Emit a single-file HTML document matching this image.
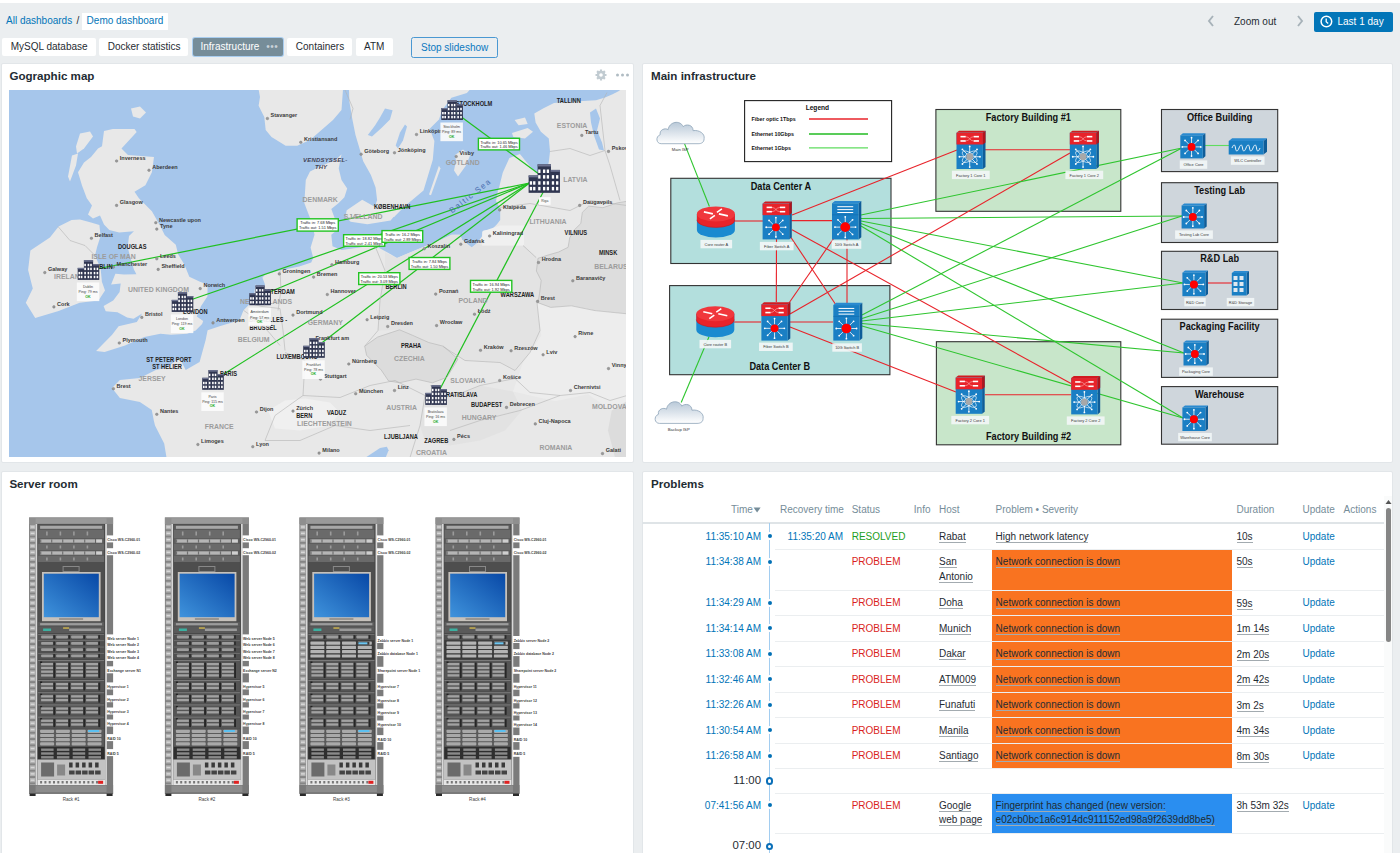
<!DOCTYPE html>
<html><head><meta charset="utf-8">
<style>
*{box-sizing:border-box;margin:0;padding:0}
html,body{width:1400px;height:853px;overflow:hidden}
body{background:#ebeef0;font-family:"Liberation Sans",sans-serif;font-size:10px;color:#1f2c33;position:relative}
.a{position:absolute;white-space:nowrap}
.lnk{color:#0275b8}
.tab{position:absolute;top:38px;height:18px;background:#fff;line-height:18px;border-radius:2px;font-size:10px;color:#1f2c33}
.w{position:absolute;background:#fff}
.wt{position:absolute;font-weight:bold;font-size:11.6px;color:#1f2c33;white-space:nowrap}
.th{position:absolute;top:503px;color:#768d99;font-size:10px;white-space:nowrap;line-height:13px}
.tm{position:absolute;color:#0275b8;white-space:nowrap;line-height:13px;text-align:right}
.st{position:absolute;left:851.7px;color:#e33734;white-space:nowrap;line-height:13px}
.ho{position:absolute;left:939px;white-space:nowrap;line-height:14.5px;color:#1f2c33}
.u{border-bottom:1px solid #a3abb0}
.sev{position:absolute;left:992px;width:240px;background:#f97320}
.pt{position:absolute;left:995.6px;white-space:nowrap;line-height:14.5px;color:#1f2c33}
.du{position:absolute;left:1236.5px;white-space:nowrap;line-height:13px}
.up{position:absolute;left:1302.5px;white-space:nowrap;line-height:13px;color:#0275b8}
.sep{position:absolute;left:775px;width:609px;height:1px;background:#ebeef0}
.dot{position:absolute;left:765.6px;width:8px;height:8px;border-radius:50%;background:#0270b5;border:2.1px solid #fff}
.ring{position:absolute;left:765.8px;width:7.4px;height:7.4px;border-radius:50%;border:2px solid #0a6fb8;background:#fff}
</style></head><body>
<div class="a" style="left:0;top:0;width:1400px;height:3px;background:#fff"></div>
<!-- breadcrumb -->
<div class="a lnk" style="left:6px;top:15px;line-height:12px">All dashboards</div>
<div class="a" style="left:76.5px;top:15px;line-height:12px;color:#1f2c33">/</div>
<div class="a" style="left:82px;top:13px;width:86px;height:17px;background:#fff"></div>
<div class="a lnk" style="left:86.6px;top:15px;line-height:12px">Demo dashboard</div>
<!-- tabs -->
<div class="tab" style="left:2px;width:94px;padding-left:8.7px">MySQL database</div>
<div class="tab" style="left:99px;width:89px;padding-left:8.7px">Docker statistics</div>
<div class="tab" style="left:192.5px;width:90.5px;padding-left:8px;background:#768d99;color:#fff;box-shadow:0 0 0 1px #a9cdef">Infrastructure <span style="letter-spacing:0.5px;margin-left:4px;color:#c8d2d8">&#8226;&#8226;&#8226;</span></div>
<div class="tab" style="left:287px;width:65px;padding-left:8.8px">Containers</div>
<div class="tab" style="left:356px;width:37px;padding-left:8px">ATM</div>
<div class="a" style="left:411px;top:37.2px;width:86.6px;height:20.5px;border:1px solid #4a98d2;border-radius:2.5px;color:#0a78c0;line-height:20px;padding-left:9px">Stop slideshow</div>
<!-- header right -->
<div class="a" style="left:1205px;top:12px;width:12px;height:18px;">
 <svg width="12" height="18"><path d="M8 4 L4 9 L8 14" stroke="#a7b2b9" stroke-width="1.9" fill="none"/></svg></div>
<div class="a" style="left:1234px;top:15.8px;line-height:12px;color:#1f2c33">Zoom out</div>
<div class="a" style="left:1294px;top:12px;width:12px;height:18px;">
 <svg width="12" height="18"><path d="M4 4 L8 9 L4 14" stroke="#a7b2b9" stroke-width="1.9" fill="none"/></svg></div>
<div class="a" style="left:1314px;top:12px;width:79px;height:20px;background:#0275b8;border-radius:2px;color:#fff;line-height:20px;padding-left:23.5px">Last 1 day</div>
<svg class="a" style="left:1319px;top:15px" width="14" height="14"><circle cx="7.4" cy="6.5" r="5.3" stroke="#fff" stroke-width="1.5" fill="none"/><path d="M7.2 3.6 V6.8 L9.2 8.6" stroke="#fff" stroke-width="1.3" fill="none"/></svg>

<!-- widgets -->
<div class="w" style="left:0.8px;top:62.6px;width:633.4px;height:400.4px;border:1px solid #e2e6e9;border-radius:2px"></div>
<div class="w" style="left:642.2px;top:62.6px;width:751px;height:400.4px;border:1px solid #e2e6e9;border-radius:2px"></div>
<div class="w" style="left:0.8px;top:470.8px;width:633.4px;height:400px;border:1px solid #e2e6e9;border-radius:2px"></div>
<div class="w" style="left:642.2px;top:470.8px;width:751px;height:400px;border:1px solid #e2e6e9;border-radius:2px"></div>
<div class="wt" style="left:9.4px;top:69px">Gographic map</div>
<div class="wt" style="left:651px;top:69px">Main infrastructure</div>
<div class="wt" style="left:9.4px;top:477px">Server room</div>
<div class="wt" style="left:651px;top:477px">Problems</div>
<!-- gear + dots -->
<svg class="a" style="left:594px;top:68px" width="36" height="14">
 <g fill="#c1cbd1"><circle cx="7" cy="7" r="4.2"/><g stroke="#c1cbd1" stroke-width="2.2"><path d="M7 1.5V12.5M1.5 7H12.5M3.1 3.1L10.9 10.9M10.9 3.1L3.1 10.9"/></g></g>
 <circle cx="7" cy="7" r="1.8" fill="#fff"/>
 <circle cx="23.5" cy="7" r="1.5" fill="#b0bcc3"/><circle cx="28.5" cy="7" r="1.5" fill="#b0bcc3"/><circle cx="33.5" cy="7" r="1.5" fill="#b0bcc3"/>
</svg>

<!-- MAP -->
<div id="map" class="a" style="left:9px;top:89.5px;width:617px;height:366.5px;background:#a6c6eb;overflow:hidden"></div>

<!-- DIAGRAM -->
<div id="diag" class="a" style="left:642px;top:85px;width:751px;height:375px"></div>

<!-- RACKS -->
<div id="racks" class="a" style="left:1px;top:500px;width:634px;height:353px"></div>

<!-- PROBLEMS TABLE -->
<div class="th" style="left:731px">Time</div>
<svg class="a" style="left:753px;top:507px" width="9" height="7"><path d="M0.6 0.6 H7.6 L4.1 5.6Z" fill="#768d99"/></svg>
<div class="th" style="left:780px">Recovery time</div>
<div class="th" style="left:851.7px">Status</div>
<div class="th" style="left:913.8px">Info</div>
<div class="th" style="left:939px">Host</div>
<div class="th" style="left:995.6px">Problem &#8226; Severity</div>
<div class="th" style="left:1236.5px">Duration</div>
<div class="th" style="left:1302.5px">Update</div>
<div class="th" style="left:1343.6px">Actions</div>
<div class="a" style="left:642px;top:522px;width:742px;height:1.5px;background:#dfe4e7"></div>
<div class="a" style="left:768.9px;top:523px;width:1.5px;height:330px;background:#a2cdf0"></div>
<div class="tm" style="left:660px;width:101px;top:529.8px">11:35:10 AM</div>
<div class="dot" style="top:532.2px"></div>
<div class="tm" style="left:743px;width:100px;top:529.8px">11:35:20 AM</div>
<div class="st" style="top:529.8px;color:#1c9e22">RESOLVED</div>
<div class="ho" style="top:529.8px"><span class="u">Rabat</span></div>
<div class="pt" style="top:529.8px"><span class="u">High network latency</span></div>
<div class="du" style="top:530.0px"><span class="u">10s</span></div>
<div class="up" style="top:529.8px">Update</div>
<div class="sep" style="top:549.0px"></div>
<div class="tm" style="left:660px;width:101px;top:555.0px">11:34:38 AM</div>
<div class="dot" style="top:557.5px"></div>
<div class="st" style="top:555.0px;color:#d91e22">PROBLEM</div>
<div class="ho" style="top:555.0px"><span class="u">San</span></div>
<div class="ho" style="top:569.5px"><span class="u">Antonio</span></div>
<div class="sev" style="top:550.0px;height:40.0px;background:#f97320"></div>
<div class="pt" style="top:555.0px"><span class="u">Network connection is down</span></div>
<div class="du" style="top:555.2px"><span class="u">50s</span></div>
<div class="up" style="top:555.0px">Update</div>
<div class="sep" style="top:589.5px"></div>
<div class="tm" style="left:660px;width:101px;top:596.2px">11:34:29 AM</div>
<div class="dot" style="top:598.8px"></div>
<div class="st" style="top:596.2px;color:#d91e22">PROBLEM</div>
<div class="ho" style="top:596.2px"><span class="u">Doha</span></div>
<div class="sev" style="top:590.5px;height:25.0px;background:#f97320"></div>
<div class="pt" style="top:596.2px"><span class="u">Network connection is down</span></div>
<div class="du" style="top:596.5px"><span class="u">59s</span></div>
<div class="up" style="top:596.2px">Update</div>
<div class="sep" style="top:615.0px"></div>
<div class="tm" style="left:660px;width:101px;top:621.8px">11:34:14 AM</div>
<div class="dot" style="top:624.2px"></div>
<div class="st" style="top:621.8px;color:#d91e22">PROBLEM</div>
<div class="ho" style="top:621.8px"><span class="u">Munich</span></div>
<div class="sev" style="top:616.0px;height:25.0px;background:#f97320"></div>
<div class="pt" style="top:621.8px"><span class="u">Network connection is down</span></div>
<div class="du" style="top:622.0px"><span class="u">1m 14s</span></div>
<div class="up" style="top:621.8px">Update</div>
<div class="sep" style="top:640.5px"></div>
<div class="tm" style="left:660px;width:101px;top:647.2px">11:33:08 AM</div>
<div class="dot" style="top:649.8px"></div>
<div class="st" style="top:647.2px;color:#d91e22">PROBLEM</div>
<div class="ho" style="top:647.2px"><span class="u">Dakar</span></div>
<div class="sev" style="top:641.5px;height:25.0px;background:#f97320"></div>
<div class="pt" style="top:647.2px"><span class="u">Network connection is down</span></div>
<div class="du" style="top:647.5px"><span class="u">2m 20s</span></div>
<div class="up" style="top:647.2px">Update</div>
<div class="sep" style="top:666.0px"></div>
<div class="tm" style="left:660px;width:101px;top:672.8px">11:32:46 AM</div>
<div class="dot" style="top:675.2px"></div>
<div class="st" style="top:672.8px;color:#d91e22">PROBLEM</div>
<div class="ho" style="top:672.8px"><span class="u">ATM009</span></div>
<div class="sev" style="top:667.0px;height:25.0px;background:#f97320"></div>
<div class="pt" style="top:672.8px"><span class="u">Network connection is down</span></div>
<div class="du" style="top:673.0px"><span class="u">2m 42s</span></div>
<div class="up" style="top:672.8px">Update</div>
<div class="sep" style="top:691.5px"></div>
<div class="tm" style="left:660px;width:101px;top:698.2px">11:32:26 AM</div>
<div class="dot" style="top:700.8px"></div>
<div class="st" style="top:698.2px;color:#d91e22">PROBLEM</div>
<div class="ho" style="top:698.2px"><span class="u">Funafuti</span></div>
<div class="sev" style="top:692.5px;height:25.0px;background:#f97320"></div>
<div class="pt" style="top:698.2px"><span class="u">Network connection is down</span></div>
<div class="du" style="top:698.5px"><span class="u">3m 2s</span></div>
<div class="up" style="top:698.2px">Update</div>
<div class="sep" style="top:717.0px"></div>
<div class="tm" style="left:660px;width:101px;top:723.8px">11:30:54 AM</div>
<div class="dot" style="top:726.2px"></div>
<div class="st" style="top:723.8px;color:#d91e22">PROBLEM</div>
<div class="ho" style="top:723.8px"><span class="u">Manila</span></div>
<div class="sev" style="top:718.0px;height:25.0px;background:#f97320"></div>
<div class="pt" style="top:723.8px"><span class="u">Network connection is down</span></div>
<div class="du" style="top:724.0px"><span class="u">4m 34s</span></div>
<div class="up" style="top:723.8px">Update</div>
<div class="sep" style="top:742.5px"></div>
<div class="tm" style="left:660px;width:101px;top:749.2px">11:26:58 AM</div>
<div class="dot" style="top:751.8px"></div>
<div class="st" style="top:749.2px;color:#d91e22">PROBLEM</div>
<div class="ho" style="top:749.2px"><span class="u">Santiago</span></div>
<div class="sev" style="top:743.5px;height:25.0px;background:#f97320"></div>
<div class="pt" style="top:749.2px"><span class="u">Network connection is down</span></div>
<div class="du" style="top:749.5px"><span class="u">8m 30s</span></div>
<div class="up" style="top:749.2px">Update</div>
<div class="sep" style="top:768.0px"></div>
<div class="tm" style="left:660px;width:101px;top:774.0px;color:#1f2c33;font-size:11.4px">11:00</div>
<div class="ring" style="top:777.2px"></div>
<div class="sep" style="top:792.7px"></div>
<div class="tm" style="left:660px;width:101px;top:798.7px">07:41:56 AM</div>
<div class="dot" style="top:801.2px"></div>
<div class="st" style="top:798.7px;color:#d91e22">PROBLEM</div>
<div class="ho" style="top:798.7px"><span class="u">Google</span></div>
<div class="ho" style="top:813.2px"><span class="u">web page</span></div>
<div class="sev" style="top:793.7px;height:39.6px;background:#2a8ef0"></div>
<div class="pt" style="top:798.7px"><span class="u">Fingerprint has changed (new version:</span></div>
<div class="pt" style="top:813.2px"><span class="u">e02cb0bc1a6c914dc911152ed98a9f2639dd8be5)</span></div>
<div class="du" style="top:798.9px"><span class="u">3h 53m 32s</span></div>
<div class="up" style="top:798.7px">Update</div>
<div class="sep" style="top:832.8px"></div>
<div class="tm" style="left:660px;width:101px;top:839.4px;color:#1f2c33;font-size:11.4px">07:00</div>
<div class="ring" style="top:842.6px"></div>
<div class="a" style="left:1384px;top:496px;width:8px;height:357px;background:#fafbfb"></div>
<svg class="a" style="left:1384px;top:498px" width="9" height="8"><path d="M1.5 6 L4.5 2 L7.5 6Z" fill="#555"/></svg>
<div class="a" style="left:1385.8px;top:508px;width:5.4px;height:133.6px;background:#858585;border-radius:3px"></div><div class="a" style="left:9px;top:89.5px;width:617px;height:367px;overflow:hidden"><svg width="617" height="367" style="position:absolute;left:0;top:0">
<rect width="617" height="367" fill="#a6c6eb"/>
<polygon points="62.6,130.0 71.0,129.5 82.0,132.5 90.4,135.1 91.6,146.1 88.0,157.2 86.0,165.5 91.6,178.2 92.9,191.7 96.0,200.5 89.5,210.5 70.7,212.7 49.6,220.9 26.2,228.0 16.8,212.7 23.8,198.5 19.1,179.9 21.4,160.4 40.9,147.4 49.6,136.5" fill="#e8e8e8"/>
<polygon points="103.8,38.9 125.5,38.9 127.7,42.1 112.5,58.4 119.0,64.9 145.0,67.1 142.9,82.3 136.4,95.3 125.5,101.8 129.9,108.3 142.9,121.3 151.0,135.5 155.7,144.9 166.8,154.8 169.2,164.6 175.4,174.5 180.3,186.8 191.0,191.7 198.5,194.4 198.5,206.2 192.1,215.9 187.8,226.6 194.2,230.9 193.1,234.1 186.7,240.5 178.1,243.7 162.1,244.8 151.4,243.7 135.3,246.9 116.0,255.5 95.6,261.9 87.1,260.9 103.1,244.8 109.6,236.2 127.8,231.9 133.1,223.4 124.6,228.7 118.1,227.6 108.5,222.3 96.7,221.2 94.6,215.9 104.2,210.5 110.6,201.9 111.7,193.4 102.1,194.4 106.4,183.7 115.0,184.5 127.4,184.3 124.9,179.4 121.2,167.1 118.7,157.2 120.0,146.1 124.9,141.2 110.1,142.5 100.3,140.0 95.0,134.5 91.0,125.5 84.0,128.5 79.0,124.5 83.0,115.5 77.8,108.3 73.0,95.5 69.0,82.3 75.0,72.5 82.0,67.1 89.0,58.5 93.0,56.3 95.0,41.1" fill="#e8e8e8"/>
<polygon points="71.0,43.5 81.0,41.5 84.0,46.5 75.0,58.5 68.0,63.5 67.0,56.5" fill="#e8e8e8"/>
<polygon points="63.0,65.5 69.0,63.5 67.0,75.5 61.0,91.5 59.0,86.5" fill="#e8e8e8"/>
<polygon points="122.0,18.5 131.0,16.5 137.0,22.5 131.0,28.5 124.0,26.5" fill="#e8e8e8"/>
<polygon points="157.5,367.5 155.2,353.5 146.0,335.5 144.8,330.5 142.8,319.9 130.9,312.0 110.9,308.0 103.0,298.0 110.9,290.0 130.9,288.0 146.8,280.1 156.8,278.1 170.7,268.1 176.7,280.1 190.6,272.1 196.6,250.2 198.6,240.2 210.6,236.2 230.5,230.2 234.5,220.3 244.4,210.3 246.4,194.4 256.4,184.4 270.4,180.4 290.3,176.4 302.2,172.5 304.2,167.9 301.6,157.5 305.5,144.7 303.0,133.0 299.0,122.7 295.3,112.9 296.8,90.0 301.0,81.5 312.5,75.7 326.8,70.0 332.5,64.3 329.7,78.6 332.5,90.0 338.2,98.6 335.4,107.2 329.7,112.9 322.3,118.9 326.1,129.2 328.7,139.5 322.3,144.7 323.5,156.3 332.6,160.1 350.6,157.5 364.8,155.0 379.0,162.7 388.0,167.9 410.0,158.8 429.3,151.1 442.6,144.8 451.1,144.8 453.2,150.1 462.7,157.5 468.0,153.2 473.2,145.9 474.3,140.6 482.7,139.5 488.0,134.3 491.2,130.0 491.2,118.4 487.0,111.0 489.0,100.5 489.9,98.2 493.8,82.5 500.4,68.1 510.9,64.1 517.4,72.0 526.6,82.5 537.0,82.5 539.8,72.0 541.0,61.5 539.8,48.4 531.9,41.8 526.6,32.6 525.3,23.4 534.5,18.2 545.0,12.9 566.0,11.6 587.0,10.3 596.0,7.5 603.0,4.5 609.0,1.5 612.0,-0.5 618.0,-0.5 618.0,367.5" fill="#e8e8e8"/>
<polygon points="249.6,-0.5 251.0,7.1 249.6,15.7 255.3,27.1 256.7,40.0 262.5,47.1 276.7,55.7 288.2,55.7 301.0,50.0 312.5,40.0 324.0,30.0 332.5,20.0 334.0,-0.5 340.0,-0.5 340.3,10.9 343.4,29.4 346.5,44.9 351.1,60.4 354.2,71.2 361.9,85.1 366.6,97.5 368.1,109.9 365.0,119.2 371.2,125.4 385.1,126.9 396.0,116.1 405.3,108.3 414.5,100.6 419.2,85.1 423.8,69.7 425.4,51.1 420.7,38.7 430.0,29.5 433.1,20.2 442.4,7.8 457.9,3.1 461.0,-0.5" fill="#e8e8e8"/>
<polygon points="446.0,65.0 454.0,59.5 461.0,65.5 457.0,75.5 449.0,86.5 445.0,80.5 447.0,70.5" fill="#e8e8e8"/>
<polygon points="429.9,75.8 431.5,78.5 422.0,105.2 420.0,104.5" fill="#e8e8e8"/>
<polygon points="337.7,120.2 353.2,109.8 364.8,116.3 373.8,118.9 388.0,122.7 381.6,130.5 358.4,134.3 341.6,131.8 336.4,126.6" fill="#e8e8e8"/>
<polygon points="309.0,133.5 319.0,131.5 322.0,140.5 313.0,144.5 307.0,139.5" fill="#e8e8e8"/>
<polygon points="503.0,43.1 518.7,37.9 524.0,41.8 516.0,48.4 504.3,47.1" fill="#e8e8e8"/>
<polygon points="505.6,30.0 516.0,27.4 518.7,33.9 509.6,35.3" fill="#e8e8e8"/>
<polygon points="376.0,162.5 388.0,167.9 410.0,158.8 429.3,151.1 442.6,144.8 451.1,144.8 453.2,150.1 462.7,157.5 468.0,153.2 473.2,155.4 515.0,155.5 529.0,168.3 527.4,181.0 532.2,190.5 530.6,203.2 529.0,212.7 531.0,240.5 521.0,262.5 506.0,280.5 491.0,272.5 456.0,270.5 434.0,256.5 419.7,252.5 403.3,245.2 390.5,239.8 369.0,240.5 371.0,210.5 376.0,180.5" fill="#e3e3e3"/>
<polygon points="618.0,111.3 608.2,112.9 593.9,117.7 579.7,116.1 573.3,122.4 571.8,133.5 565.4,139.8 560.7,147.8 559.1,157.3 549.6,162.0 538.5,165.2 529.0,168.3 527.4,181.0 532.2,190.5 530.6,203.2 529.0,212.7 541.7,217.4 562.3,215.8 586.0,220.6 601.8,222.2 618.0,223.8" fill="#dddddd"/>
<polygon points="355.7,256.2 368.5,247.1 390.5,239.8 403.3,245.2 419.7,252.5 434.3,256.2 449.0,269.0 438.0,287.3 423.4,292.8 407.0,289.1 390.5,292.8 379.5,290.9 372.2,280.0 357.6,265.3" fill="#dcdcdc"/>
<polygon points="527.6,212.7 541.7,217.4 562.3,215.8 586.0,220.6 601.8,222.2 618.0,223.8 618.0,311.2 602.7,320.5 579.0,304.2 546.4,311.2 504.0,301.5 513.6,273.5 532.3,245.5" fill="#ededed"/>
<polygon points="602.7,320.5 618.0,311.2 618.0,367.5 606.0,367.5 599.0,340.5" fill="#dcdcdc"/>
<polygon points="416.0,305.5 446.0,305.5 471.0,295.5 504.0,301.5 513.0,320.5 496.0,340.5 471.0,350.5 441.0,355.5 416.0,350.5 411.0,335.5" fill="#e2e2e2"/>
<polygon points="473.2,141.5 491.0,135.5 515.0,135.5 515.0,155.5 473.2,155.4" fill="#f0f0f0"/>
<polygon points="259.0,320.5 276.0,310.5 296.0,308.5 321.0,312.5 331.0,322.5 321.0,335.5 291.0,340.5 266.0,338.5" fill="#f0f0f0"/>
<polygon points="581.0,22.5 587.0,18.5 591.0,28.5 588.0,40.5 593.0,52.5 595.0,60.5 590.0,59.5 585.0,45.5 582.0,32.5" fill="#a6c6eb"/>
<polygon points="358.8,44.9 366.0,35.5 371.0,27.5 376.0,18.5 383.6,20.2 381.0,29.5 373.0,37.5 363.0,46.5" fill="#a6c6eb"/>
<polygon points="386.7,55.5 391.0,42.5 396.0,34.5 398.0,36.5 394.0,50.5 389.0,58.5" fill="#a6c6eb"/>
<polygon points="356.7,367.5 371.0,357.9 377.9,356.8 379.6,360.2 376.7,367.5" fill="#a6c6eb"/>
<polygon points="246.0,189.5 253.0,186.5 256.0,194.5 252.0,206.5 247.0,202.5" fill="#a6c6eb"/>
<line x1="520.5" y1="93.0" x2="80" y2="180.5" stroke="#1fc01f" stroke-width="1.2"/>
<line x1="520.5" y1="93.0" x2="174" y2="212.5" stroke="#1fc01f" stroke-width="1.2"/>
<line x1="520.5" y1="93.0" x2="251.60000000000002" y2="205.8" stroke="#1fc01f" stroke-width="1.2"/>
<line x1="520.5" y1="93.0" x2="305.5" y2="258.4" stroke="#1fc01f" stroke-width="1.2"/>
<line x1="520.5" y1="93.0" x2="204.5" y2="290.4" stroke="#1fc01f" stroke-width="1.2"/>
<line x1="535" y1="100.5" x2="427.6" y2="305.5" stroke="#1fc01f" stroke-width="1.2"/>
<line x1="536" y1="88.5" x2="443.6" y2="20.599999999999994" stroke="#1fc01f" stroke-width="1.2"/>
<g font-family="Liberation Sans, sans-serif">
<polyline points="336.0,0.0 344.0,18.5 341.0,29.5" fill="none" stroke="#b4b4b4" stroke-width="0.6"/>
<polyline points="234.5,220.3 249.0,230.5 261.0,243.5 271.0,255.5" fill="none" stroke="#b4b4b4" stroke-width="0.6"/>
<polyline points="241.0,213.5 253.0,216.5 271.0,218.5" fill="none" stroke="#b4b4b4" stroke-width="0.6"/>
<polyline points="271.0,180.5 272.0,200.5 269.0,220.5" fill="none" stroke="#b4b4b4" stroke-width="0.6"/>
<polyline points="271.0,218.5 274.0,240.5 276.0,260.5" fill="none" stroke="#b4b4b4" stroke-width="0.6"/>
<polyline points="276.0,262.5 296.0,270.5 294.0,305.5" fill="none" stroke="#b4b4b4" stroke-width="0.6"/>
<polyline points="294.0,305.5 266.0,325.5 256.0,350.5" fill="none" stroke="#b4b4b4" stroke-width="0.6"/>
<polyline points="294.0,305.5 331.0,307.5" fill="none" stroke="#b4b4b4" stroke-width="0.6"/>
<polyline points="256.0,350.5 291.0,350.5 326.0,335.5" fill="none" stroke="#b4b4b4" stroke-width="0.6"/>
<polyline points="331.0,307.5 361.0,295.5 386.0,290.5 416.0,305.5" fill="none" stroke="#b4b4b4" stroke-width="0.6"/>
<polyline points="326.0,335.5 361.0,340.5 401.0,335.5" fill="none" stroke="#b4b4b4" stroke-width="0.6"/>
<polyline points="416.0,305.5 411.0,335.5" fill="none" stroke="#b4b4b4" stroke-width="0.6"/>
<polyline points="363.0,148.5 376.0,180.5 371.0,210.5 369.0,240.5 355.7,256.2" fill="none" stroke="#b4b4b4" stroke-width="0.6"/>
<polyline points="434.0,256.5 456.0,270.5 491.0,272.5 506.0,280.5" fill="none" stroke="#b4b4b4" stroke-width="0.6"/>
<polyline points="421.0,295.5 446.0,305.5 471.0,295.5 506.0,288.5" fill="none" stroke="#b4b4b4" stroke-width="0.6"/>
<polyline points="528.0,212.5 531.0,240.5 521.0,262.5 506.0,280.5" fill="none" stroke="#b4b4b4" stroke-width="0.6"/>
<polyline points="506.0,288.5 521.0,302.5 551.0,305.5 581.0,302.5 601.0,310.5 618.0,305.5" fill="none" stroke="#b4b4b4" stroke-width="0.6"/>
<polyline points="491.0,117.5 521.0,113.5 561.0,120.5 581.0,110.5 618.0,115.5" fill="none" stroke="#b4b4b4" stroke-width="0.6"/>
<polyline points="514.0,155.5 527.0,167.5" fill="none" stroke="#b4b4b4" stroke-width="0.6"/>
<polyline points="541.0,61.5 561.0,58.5 581.0,65.5 596.0,60.5" fill="none" stroke="#b4b4b4" stroke-width="0.6"/>
<polyline points="598.0,2.5 591.0,15.5 596.0,60.5 601.0,75.5 611.0,110.5" fill="none" stroke="#b4b4b4" stroke-width="0.6"/>
<polyline points="49.0,136.5 61.0,150.5 76.0,155.5 86.0,165.5" fill="none" stroke="#b4b4b4" stroke-width="0.6"/>
<polyline points="411.0,335.5 401.0,367.5" fill="none" stroke="#b4b4b4" stroke-width="0.6"/>
<polyline points="441.0,340.5 471.0,330.5 511.0,320.5 551.0,305.5" fill="none" stroke="#b4b4b4" stroke-width="0.6"/>
<polygon points="355.7,256.2 368.5,247.1 390.5,239.8 403.3,245.2 419.7,252.5 434.3,256.2 449.0,269.0 438.0,287.3 423.4,292.8 407.0,289.1 390.5,292.8 379.5,290.9 372.2,280.0 357.6,265.3" fill="none" stroke="#b4b4b4" stroke-width="0.6"/>
<polygon points="618.0,111.3 608.2,112.9 593.9,117.7 579.7,116.1 573.3,122.4 571.8,133.5 565.4,139.8 560.7,147.8 559.1,157.3 549.6,162.0 538.5,165.2 529.0,168.3 527.4,181.0 532.2,190.5 530.6,203.2 529.0,212.7 541.7,217.4 562.3,215.8 586.0,220.6 601.8,222.2 618.0,223.8" fill="none" stroke="#b4b4b4" stroke-width="0.6"/>
<circle cx="258.4" cy="28.5" r="1.3" fill="#999" stroke="#777" stroke-width="0.4"/>
<text transform="translate(261.6,27.3) scale(0.92,1)" font-size="6.0" font-weight="bold" fill="#3a3a3a">Stavanger</text>
<circle cx="291.8" cy="52.3" r="1.3" fill="#999" stroke="#777" stroke-width="0.4"/>
<text transform="translate(295.0,51.1) scale(0.92,1)" font-size="6.0" font-weight="bold" fill="#3a3a3a">Kristiansand</text>
<circle cx="352.1" cy="64.2" r="1.3" fill="#999" stroke="#777" stroke-width="0.4"/>
<text transform="translate(355.3,63.0) scale(0.92,1)" font-size="6.0" font-weight="bold" fill="#3a3a3a">Göteborg</text>
<circle cx="385.5" cy="62.8" r="1.3" fill="#999" stroke="#777" stroke-width="0.4"/>
<text transform="translate(388.7,61.6) scale(0.92,1)" font-size="6.0" font-weight="bold" fill="#3a3a3a">Jönköping</text>
<circle cx="407.5" cy="44.5" r="1.3" fill="#999" stroke="#777" stroke-width="0.4"/>
<text transform="translate(410.7,43.3) scale(0.92,1)" font-size="6.0" font-weight="bold" fill="#3a3a3a">Linköping</text>
<circle cx="572.8" cy="45.4" r="1.3" fill="#999" stroke="#777" stroke-width="0.4"/>
<text transform="translate(576.0,44.2) scale(0.92,1)" font-size="6.0" font-weight="bold" fill="#3a3a3a">Tartu</text>
<circle cx="599.5" cy="61.4" r="1.3" fill="#999" stroke="#777" stroke-width="0.4"/>
<text transform="translate(602.7,60.2) scale(0.92,1)" font-size="6.0" font-weight="bold" fill="#3a3a3a">Pskov</text>
<circle cx="447.2" cy="66.5" r="1.3" fill="#999" stroke="#777" stroke-width="0.4"/>
<text transform="translate(450.4,65.3) scale(0.92,1)" font-size="6.0" font-weight="bold" fill="#3a3a3a">Visby</text>
<circle cx="570.7" cy="115.4" r="1.3" fill="#999" stroke="#777" stroke-width="0.4"/>
<text transform="translate(573.9,114.2) scale(0.92,1)" font-size="6.0" font-weight="bold" fill="#3a3a3a">Daugavpils</text>
<circle cx="490.7" cy="119.9" r="1.3" fill="#999" stroke="#777" stroke-width="0.4"/>
<text transform="translate(493.9,118.7) scale(0.92,1)" font-size="6.0" font-weight="bold" fill="#3a3a3a">Klaipėda</text>
<circle cx="480.6" cy="146.0" r="1.3" fill="#999" stroke="#777" stroke-width="0.4"/>
<text transform="translate(483.8,144.8) scale(0.92,1)" font-size="6.0" font-weight="bold" fill="#3a3a3a">Kaliningrad</text>
<circle cx="451.8" cy="154.2" r="1.3" fill="#999" stroke="#777" stroke-width="0.4"/>
<text transform="translate(455.0,153.0) scale(0.92,1)" font-size="6.0" font-weight="bold" fill="#3a3a3a">Gdańsk</text>
<circle cx="415.2" cy="158.8" r="1.3" fill="#999" stroke="#777" stroke-width="0.4"/>
<text transform="translate(418.4,157.6) scale(0.92,1)" font-size="6.0" font-weight="bold" fill="#3a3a3a">Koszalin</text>
<circle cx="529.5" cy="172.5" r="1.3" fill="#999" stroke="#777" stroke-width="0.4"/>
<text transform="translate(532.7,171.3) scale(0.92,1)" font-size="6.0" font-weight="bold" fill="#3a3a3a">Hrodna</text>
<circle cx="563.8" cy="190.8" r="1.3" fill="#999" stroke="#777" stroke-width="0.4"/>
<text transform="translate(567.0,189.6) scale(0.92,1)" font-size="6.0" font-weight="bold" fill="#3a3a3a">Baranavičy</text>
<circle cx="528.6" cy="211.4" r="1.3" fill="#999" stroke="#777" stroke-width="0.4"/>
<text transform="translate(531.8,210.2) scale(0.92,1)" font-size="6.0" font-weight="bold" fill="#3a3a3a">Brest</text>
<circle cx="465.5" cy="224.2" r="1.3" fill="#999" stroke="#777" stroke-width="0.4"/>
<text transform="translate(468.7,223.0) scale(0.92,1)" font-size="6.0" font-weight="bold" fill="#3a3a3a">Łódź</text>
<circle cx="426.7" cy="204.1" r="1.3" fill="#999" stroke="#777" stroke-width="0.4"/>
<text transform="translate(429.9,202.9) scale(0.92,1)" font-size="6.0" font-weight="bold" fill="#3a3a3a">Poznań</text>
<circle cx="427.6" cy="235.6" r="1.3" fill="#999" stroke="#777" stroke-width="0.4"/>
<text transform="translate(430.8,234.4) scale(0.92,1)" font-size="6.0" font-weight="bold" fill="#3a3a3a">Wrocław</text>
<circle cx="471.5" cy="260.3" r="1.3" fill="#999" stroke="#777" stroke-width="0.4"/>
<text transform="translate(474.7,259.1) scale(0.92,1)" font-size="6.0" font-weight="bold" fill="#3a3a3a">Kraków</text>
<circle cx="502.1" cy="260.8" r="1.3" fill="#999" stroke="#777" stroke-width="0.4"/>
<text transform="translate(505.3,259.6) scale(0.92,1)" font-size="6.0" font-weight="bold" fill="#3a3a3a">Rzeszów</text>
<circle cx="534.1" cy="264.8" r="1.3" fill="#999" stroke="#777" stroke-width="0.4"/>
<text transform="translate(537.3,263.6) scale(0.92,1)" font-size="6.0" font-weight="bold" fill="#3a3a3a">Lviv</text>
<circle cx="566.1" cy="246.6" r="1.3" fill="#999" stroke="#777" stroke-width="0.4"/>
<text transform="translate(569.3,245.4) scale(0.92,1)" font-size="6.0" font-weight="bold" fill="#3a3a3a">Rivne</text>
<circle cx="599.5" cy="278.6" r="1.3" fill="#999" stroke="#777" stroke-width="0.4"/>
<text transform="translate(602.7,277.4) scale(0.92,1)" font-size="6.0" font-weight="bold" fill="#3a3a3a">Vinny</text>
<circle cx="561.5" cy="300.5" r="1.3" fill="#999" stroke="#777" stroke-width="0.4"/>
<text transform="translate(564.7,299.3) scale(0.92,1)" font-size="6.0" font-weight="bold" fill="#3a3a3a">Chernivtsi</text>
<circle cx="526.3" cy="333.9" r="1.3" fill="#999" stroke="#777" stroke-width="0.4"/>
<text transform="translate(529.5,332.7) scale(0.92,1)" font-size="6.0" font-weight="bold" fill="#3a3a3a">Cluj-Napoca</text>
<circle cx="593.5" cy="363.6" r="1.3" fill="#999" stroke="#777" stroke-width="0.4"/>
<text transform="translate(596.7,362.4) scale(0.92,1)" font-size="6.0" font-weight="bold" fill="#3a3a3a">Galati</text>
<circle cx="497.5" cy="317.4" r="1.3" fill="#999" stroke="#777" stroke-width="0.4"/>
<text transform="translate(500.7,316.2) scale(0.92,1)" font-size="6.0" font-weight="bold" fill="#3a3a3a">Debrecen</text>
<circle cx="444.9" cy="349.4" r="1.3" fill="#999" stroke="#777" stroke-width="0.4"/>
<text transform="translate(448.1,348.2) scale(0.92,1)" font-size="6.0" font-weight="bold" fill="#3a3a3a">Pécs</text>
<circle cx="490.7" cy="290.5" r="1.3" fill="#999" stroke="#777" stroke-width="0.4"/>
<text transform="translate(493.9,289.3) scale(0.92,1)" font-size="6.0" font-weight="bold" fill="#3a3a3a">Košice</text>
<circle cx="385.5" cy="300.5" r="1.3" fill="#999" stroke="#777" stroke-width="0.4"/>
<text transform="translate(388.7,299.3) scale(0.92,1)" font-size="6.0" font-weight="bold" fill="#3a3a3a">Linz</text>
<circle cx="346.7" cy="303.7" r="1.3" fill="#999" stroke="#777" stroke-width="0.4"/>
<text transform="translate(349.9,302.5) scale(0.92,1)" font-size="6.0" font-weight="bold" fill="#3a3a3a">München</text>
<circle cx="339.8" cy="274.0" r="1.3" fill="#999" stroke="#777" stroke-width="0.4"/>
<text transform="translate(343.0,272.8) scale(0.92,1)" font-size="6.0" font-weight="bold" fill="#3a3a3a">Nürnberg</text>
<circle cx="378.7" cy="236.5" r="1.3" fill="#999" stroke="#777" stroke-width="0.4"/>
<text transform="translate(381.9,235.3) scale(0.92,1)" font-size="6.0" font-weight="bold" fill="#3a3a3a">Dresden</text>
<circle cx="358.1" cy="229.7" r="1.3" fill="#999" stroke="#777" stroke-width="0.4"/>
<text transform="translate(361.3,228.5) scale(0.92,1)" font-size="6.0" font-weight="bold" fill="#3a3a3a">Leipzig</text>
<circle cx="322.9" cy="174.8" r="1.3" fill="#999" stroke="#777" stroke-width="0.4"/>
<text transform="translate(326.1,173.6) scale(0.92,1)" font-size="6.0" font-weight="bold" fill="#3a3a3a">Hamburg</text>
<circle cx="304.6" cy="187.1" r="1.3" fill="#999" stroke="#777" stroke-width="0.4"/>
<text transform="translate(307.8,185.9) scale(0.92,1)" font-size="6.0" font-weight="bold" fill="#3a3a3a">Bremen</text>
<circle cx="318.3" cy="204.5" r="1.3" fill="#999" stroke="#777" stroke-width="0.4"/>
<text transform="translate(321.5,203.3) scale(0.92,1)" font-size="6.0" font-weight="bold" fill="#3a3a3a">Hannover</text>
<circle cx="270.3" cy="183.9" r="1.3" fill="#999" stroke="#777" stroke-width="0.4"/>
<text transform="translate(273.5,182.7) scale(0.92,1)" font-size="6.0" font-weight="bold" fill="#3a3a3a">Groningen</text>
<circle cx="284.0" cy="225.1" r="1.3" fill="#999" stroke="#777" stroke-width="0.4"/>
<text transform="translate(287.2,223.9) scale(0.92,1)" font-size="6.0" font-weight="bold" fill="#3a3a3a">Dortmund</text>
<circle cx="303.2" cy="251.6" r="1.3" fill="#999" stroke="#777" stroke-width="0.4"/>
<text transform="translate(306.4,250.4) scale(0.92,1)" font-size="6.0" font-weight="bold" fill="#3a3a3a">Frankfurt am</text>
<circle cx="311.5" cy="289.1" r="1.3" fill="#999" stroke="#777" stroke-width="0.4"/>
<text transform="translate(314.7,287.9) scale(0.92,1)" font-size="6.0" font-weight="bold" fill="#3a3a3a">Stuttgart</text>
<circle cx="284.0" cy="321.1" r="1.3" fill="#999" stroke="#777" stroke-width="0.4"/>
<text transform="translate(287.2,319.9) scale(0.92,1)" font-size="6.0" font-weight="bold" fill="#3a3a3a">Zürich</text>
<circle cx="310.1" cy="363.1" r="1.3" fill="#999" stroke="#777" stroke-width="0.4"/>
<text transform="translate(313.3,361.9) scale(0.92,1)" font-size="6.0" font-weight="bold" fill="#3a3a3a">Milano</text>
<circle cx="243.8" cy="356.7" r="1.3" fill="#999" stroke="#777" stroke-width="0.4"/>
<text transform="translate(247.0,355.5) scale(0.92,1)" font-size="6.0" font-weight="bold" fill="#3a3a3a">Lyon</text>
<circle cx="247.5" cy="322.0" r="1.3" fill="#999" stroke="#777" stroke-width="0.4"/>
<text transform="translate(250.7,320.8) scale(0.92,1)" font-size="6.0" font-weight="bold" fill="#3a3a3a">Dijon</text>
<circle cx="188.9" cy="354.5" r="1.3" fill="#999" stroke="#777" stroke-width="0.4"/>
<text transform="translate(192.1,353.3) scale(0.92,1)" font-size="6.0" font-weight="bold" fill="#3a3a3a">Limoges</text>
<circle cx="147.8" cy="324.3" r="1.3" fill="#999" stroke="#777" stroke-width="0.4"/>
<text transform="translate(151.0,323.1) scale(0.92,1)" font-size="6.0" font-weight="bold" fill="#3a3a3a">Nantes</text>
<circle cx="104.4" cy="298.7" r="1.3" fill="#999" stroke="#777" stroke-width="0.4"/>
<text transform="translate(107.6,297.5) scale(0.92,1)" font-size="6.0" font-weight="bold" fill="#3a3a3a">Brest</text>
<circle cx="204.0" cy="232.9" r="1.3" fill="#999" stroke="#777" stroke-width="0.4"/>
<text transform="translate(207.2,231.7) scale(0.92,1)" font-size="6.0" font-weight="bold" fill="#3a3a3a">Antwerpen</text>
<circle cx="191.2" cy="198.6" r="1.3" fill="#999" stroke="#777" stroke-width="0.4"/>
<text transform="translate(194.4,197.4) scale(0.92,1)" font-size="6.0" font-weight="bold" fill="#3a3a3a">Norwich</text>
<circle cx="132.8" cy="227.4" r="1.3" fill="#999" stroke="#777" stroke-width="0.4"/>
<text transform="translate(136.0,226.2) scale(0.92,1)" font-size="6.0" font-weight="bold" fill="#3a3a3a">Bristol</text>
<circle cx="110.3" cy="253.0" r="1.3" fill="#999" stroke="#777" stroke-width="0.4"/>
<text transform="translate(113.5,251.8) scale(0.92,1)" font-size="6.0" font-weight="bold" fill="#3a3a3a">Plymouth</text>
<circle cx="147.8" cy="168.8" r="1.3" fill="#999" stroke="#777" stroke-width="0.4"/>
<text transform="translate(151.0,167.6) scale(0.92,1)" font-size="6.0" font-weight="bold" fill="#3a3a3a">Leeds</text>
<circle cx="149.2" cy="179.4" r="1.3" fill="#999" stroke="#777" stroke-width="0.4"/>
<text transform="translate(152.4,178.2) scale(0.92,1)" font-size="6.0" font-weight="bold" fill="#3a3a3a">Sheffield</text>
<circle cx="104.4" cy="177.1" r="1.3" fill="#999" stroke="#777" stroke-width="0.4"/>
<text transform="translate(107.6,175.9) scale(0.92,1)" font-size="6.0" font-weight="bold" fill="#3a3a3a">Manchester</text>
<circle cx="35.8" cy="182.6" r="1.3" fill="#999" stroke="#777" stroke-width="0.4"/>
<text transform="translate(39.0,181.4) scale(0.92,1)" font-size="6.0" font-weight="bold" fill="#3a3a3a">Galway</text>
<circle cx="44.9" cy="216.9" r="1.3" fill="#999" stroke="#777" stroke-width="0.4"/>
<text transform="translate(48.1,215.7) scale(0.92,1)" font-size="6.0" font-weight="bold" fill="#3a3a3a">Cork</text>
<circle cx="82.4" cy="148.3" r="1.3" fill="#999" stroke="#777" stroke-width="0.4"/>
<text transform="translate(85.6,147.1) scale(0.92,1)" font-size="6.0" font-weight="bold" fill="#3a3a3a">Belfast</text>
<circle cx="146.8" cy="132.7" r="1.3" fill="#999" stroke="#777" stroke-width="0.4"/>
<text transform="translate(150.0,131.5) scale(0.92,1)" font-size="6.0" font-weight="bold" fill="#3a3a3a">Newcastle upon</text>
<circle cx="147.8" cy="139.1" r="1.3" fill="#999" stroke="#777" stroke-width="0.4"/>
<text transform="translate(151.0,137.9) scale(0.92,1)" font-size="6.0" font-weight="bold" fill="#3a3a3a">Tyne</text>
<circle cx="107.6" cy="115.4" r="1.3" fill="#999" stroke="#777" stroke-width="0.4"/>
<text transform="translate(110.8,114.2) scale(0.92,1)" font-size="6.0" font-weight="bold" fill="#3a3a3a">Glasgow</text>
<circle cx="140.0" cy="80.2" r="1.3" fill="#999" stroke="#777" stroke-width="0.4"/>
<text transform="translate(143.2,79.0) scale(0.92,1)" font-size="6.0" font-weight="bold" fill="#3a3a3a">Aberdeen</text>
<circle cx="107.6" cy="71.0" r="1.3" fill="#999" stroke="#777" stroke-width="0.4"/>
<text transform="translate(110.8,69.8) scale(0.92,1)" font-size="6.0" font-weight="bold" fill="#3a3a3a">Inverness</text>
<text transform="translate(446.7,16.2) scale(0.84,1)" font-size="6.8" font-weight="bold" fill="#1e1e1e">STOCKHOLM</text>
<text transform="translate(547.8,12.9) scale(0.84,1)" font-size="6.8" font-weight="bold" fill="#1e1e1e">TALLINN</text>
<text transform="translate(365.0,119.0) scale(0.84,1)" font-size="6.8" font-weight="bold" fill="#1e1e1e">KØBENHAVN</text>
<text transform="translate(555.6,145.1) scale(0.84,1)" font-size="6.8" font-weight="bold" fill="#1e1e1e">VILNIUS</text>
<text transform="translate(589.9,164.8) scale(0.84,1)" font-size="6.8" font-weight="bold" fill="#1e1e1e">MINSK</text>
<text transform="translate(491.6,206.8) scale(0.84,1)" font-size="6.8" font-weight="bold" fill="#1e1e1e">WARSZAWA</text>
<text transform="translate(461.9,316.5) scale(0.84,1)" font-size="6.8" font-weight="bold" fill="#1e1e1e">BUDAPEST</text>
<text transform="translate(415.2,353.1) scale(0.84,1)" font-size="6.8" font-weight="bold" fill="#1e1e1e">ZAGREB</text>
<text transform="translate(375.0,348.5) scale(0.84,1)" font-size="6.8" font-weight="bold" fill="#1e1e1e">LJUBLJANA</text>
<text transform="translate(432.8,307.4) scale(0.84,1)" font-size="6.8" font-weight="bold" fill="#1e1e1e">BRATISLAVA</text>
<text transform="translate(391.9,257.6) scale(0.84,1)" font-size="6.8" font-weight="bold" fill="#1e1e1e">PRAHA</text>
<text transform="translate(376.4,199.0) scale(0.84,1)" font-size="6.8" font-weight="bold" fill="#1e1e1e">BERLIN</text>
<text transform="translate(287.2,328.4) scale(0.84,1)" font-size="6.8" font-weight="bold" fill="#1e1e1e">BERN</text>
<text transform="translate(317.9,324.8) scale(0.84,1)" font-size="6.8" font-weight="bold" fill="#1e1e1e">VADUZ</text>
<text transform="translate(211.1,285.9) scale(0.84,1)" font-size="6.8" font-weight="bold" fill="#1e1e1e">PARIS</text>
<text transform="translate(137.3,272.2) scale(0.84,1)" font-size="6.8" font-weight="bold" fill="#1e1e1e">ST PETER PORT</text>
<text transform="translate(143.2,278.6) scale(0.84,1)" font-size="6.8" font-weight="bold" fill="#1e1e1e">ST HELIER</text>
<text transform="translate(267.6,268.5) scale(0.84,1)" font-size="6.8" font-weight="bold" fill="#1e1e1e">LUXEMBOURG</text>
<text transform="translate(240.1,232.0) scale(0.84,1)" font-size="6.8" font-weight="bold" fill="#1e1e1e">BRUXELLES -</text>
<text transform="translate(240.5,240.2) scale(0.84,1)" font-size="6.8" font-weight="bold" fill="#1e1e1e">BRUSSEL</text>
<text transform="translate(248.8,203.6) scale(0.84,1)" font-size="6.8" font-weight="bold" fill="#1e1e1e">AMSTERDAM</text>
<text transform="translate(173.9,224.2) scale(0.84,1)" font-size="6.8" font-weight="bold" fill="#1e1e1e">LONDON</text>
<text transform="translate(109.0,158.8) scale(0.84,1)" font-size="6.8" font-weight="bold" fill="#1e1e1e">DOUGLAS</text>
<text transform="translate(82.0,179.4) scale(0.84,1)" font-size="6.8" font-weight="bold" fill="#1e1e1e">DUBLIN</text>
<text transform="translate(547.8,38.1) scale(1.0,1)" font-size="6.9" font-weight="bold" fill="#9c9c9c">ESTONIA</text>
<text transform="translate(436.7,74.7) scale(1.0,1)" font-size="6.9" font-weight="bold" fill="#9c9c9c">GOTLAND</text>
<text transform="translate(293.6,112.2) scale(1.0,1)" font-size="6.9" font-weight="bold" fill="#9c9c9c">DENMARK</text>
<text transform="translate(334.8,129.1) scale(1.0,1)" font-size="6.9" font-weight="bold" fill="#9c9c9c">SJÆLLAND</text>
<text transform="translate(554.2,91.6) scale(1.0,1)" font-size="6.9" font-weight="bold" fill="#9c9c9c">LATVIA</text>
<text transform="translate(520.4,133.7) scale(1.0,1)" font-size="6.9" font-weight="bold" fill="#9c9c9c">LITHUANIA</text>
<text transform="translate(585.3,179.4) scale(1.0,1)" font-size="6.9" font-weight="bold" fill="#9c9c9c">BELARUS</text>
<text transform="translate(449.5,212.8) scale(1.0,1)" font-size="6.9" font-weight="bold" fill="#9c9c9c">POLAND</text>
<text transform="translate(583.0,319.3) scale(1.0,1)" font-size="6.9" font-weight="bold" fill="#9c9c9c">MOLDOVA</text>
<text transform="translate(530.4,359.9) scale(1.0,1)" font-size="6.9" font-weight="bold" fill="#9c9c9c">ROMANIA</text>
<text transform="translate(452.7,330.2) scale(1.0,1)" font-size="6.9" font-weight="bold" fill="#9c9c9c">HUNGARY</text>
<text transform="translate(407.0,364.5) scale(1.0,1)" font-size="6.9" font-weight="bold" fill="#9c9c9c">CROATIA</text>
<text transform="translate(441.3,293.2) scale(1.0,1)" font-size="6.9" font-weight="bold" fill="#9c9c9c">SLOVAKIA</text>
<text transform="translate(377.3,320.2) scale(1.0,1)" font-size="6.9" font-weight="bold" fill="#9c9c9c">AUSTRIA</text>
<text transform="translate(385.0,271.3) scale(1.0,1)" font-size="6.9" font-weight="bold" fill="#9c9c9c">CZECHIA</text>
<text transform="translate(298.7,234.7) scale(1.0,1)" font-size="6.9" font-weight="bold" fill="#9c9c9c">GERMANY</text>
<text transform="translate(288.1,336.2) scale(1.0,1)" font-size="6.9" font-weight="bold" fill="#9c9c9c">LIECHTENSTEIN</text>
<text transform="translate(195.8,339.4) scale(1.0,1)" font-size="6.9" font-weight="bold" fill="#9c9c9c">FRANCE</text>
<text transform="translate(129.5,291.4) scale(1.0,1)" font-size="6.9" font-weight="bold" fill="#9c9c9c">JERSEY</text>
<text transform="translate(228.7,251.6) scale(1.0,1)" font-size="6.9" font-weight="bold" fill="#9c9c9c">BELGIUM</text>
<text transform="translate(231.0,214.1) scale(1.0,1)" font-size="6.9" font-weight="bold" fill="#9c9c9c">NETHERLANDS</text>
<text transform="translate(119.0,202.2) scale(1.0,1)" font-size="6.9" font-weight="bold" fill="#9c9c9c">UNITED KINGDOM</text>
<text transform="translate(82.4,169.3) scale(1.0,1)" font-size="6.9" font-weight="bold" fill="#9c9c9c">ISLE OF MAN</text>
<text transform="translate(45.0,188.5) scale(1.0,1)" font-size="6.9" font-weight="bold" fill="#9c9c9c">IRELAND</text>
<text x="0" y="0" font-size="8" fill="#4a6fb0" letter-spacing="1.5" transform="translate(443,123.5) rotate(-38)">Baltic Sea</text>
<text x="294" y="72" font-size="6" font-style="italic" font-weight="bold" fill="#445" letter-spacing="0.2">VENDSYSSEL-</text>
<text x="306" y="79" font-size="6" font-style="italic" font-weight="bold" fill="#445">THY</text>
<rect x="288.1" y="128.8" width="41.2" height="12.3" fill="#fff" stroke="#22c322" stroke-width="1.4"/>
<text x="308.7" y="134.3" font-size="3.9" fill="#222" text-anchor="middle">Traffic in: 7.68 Mbps</text>
<text x="308.7" y="138.9" font-size="3.9" fill="#222" text-anchor="middle">Traffic out: 1.51 Mbps</text>
<rect x="334.6" y="144.7" width="41.1" height="11.5" fill="#fff" stroke="#22c322" stroke-width="1.4"/>
<text x="355.1" y="150.2" font-size="3.9" fill="#222" text-anchor="middle">Traffic in: 18.82 Mbps</text>
<text x="355.1" y="154.8" font-size="3.9" fill="#222" text-anchor="middle">Traffic out: 2.41 Mbps</text>
<rect x="373.0" y="140.6" width="40.7" height="11.7" fill="#fff" stroke="#22c322" stroke-width="1.4"/>
<text x="393.4" y="146.1" font-size="3.9" fill="#222" text-anchor="middle">Traffic in: 16.2 Mbps</text>
<text x="393.4" y="150.7" font-size="3.9" fill="#222" text-anchor="middle">Traffic out: 2.89 Mbps</text>
<rect x="400.1" y="167.5" width="40.8" height="11.9" fill="#fff" stroke="#22c322" stroke-width="1.4"/>
<text x="420.5" y="173.0" font-size="3.9" fill="#222" text-anchor="middle">Traffic in: 7.84 Mbps</text>
<text x="420.5" y="177.6" font-size="3.9" fill="#222" text-anchor="middle">Traffic out: 1.50 Mbps</text>
<rect x="349.7" y="182.7" width="41.2" height="11.8" fill="#fff" stroke="#22c322" stroke-width="1.4"/>
<text x="370.3" y="188.2" font-size="3.9" fill="#222" text-anchor="middle">Traffic in: 20.53 Mbps</text>
<text x="370.3" y="192.8" font-size="3.9" fill="#222" text-anchor="middle">Traffic out: 3.09 Mbps</text>
<rect x="469.4" y="48.3" width="41.1" height="11.6" fill="#fff" stroke="#22c322" stroke-width="1.4"/>
<text x="490.0" y="53.8" font-size="3.9" fill="#222" text-anchor="middle">Traffic in: 10.65 Mbps</text>
<text x="490.0" y="58.4" font-size="3.9" fill="#222" text-anchor="middle">Traffic out: 1.46 Mbps</text>
<rect x="461.5" y="190.4" width="41.3" height="11.8" fill="#fff" stroke="#22c322" stroke-width="1.4"/>
<text x="482.1" y="195.9" font-size="3.9" fill="#222" text-anchor="middle">Traffic in: 16.94 Mbps</text>
<text x="482.1" y="200.5" font-size="3.9" fill="#222" text-anchor="middle">Traffic out: 1.92 Mbps</text>
<g transform="translate(80.0,180.5) scale(1.0)"><rect x="-11.3" y="-2.6" width="6.4" height="12" fill="#2f3550"/><rect x="-5.1" y="-10.3" width="9.2" height="19.7" fill="#2f3550"/><rect x="3.9" y="-6.4" width="6.4" height="15.8" fill="#2f3550"/><rect x="-11.3" y="-2.6" width="6.4" height="1.3" fill="#6c7290"/><rect x="-5.1" y="-10.3" width="9.2" height="1.5" fill="#6c7290"/><rect x="3.9" y="-6.4" width="6.4" height="1.3" fill="#6c7290"/><rect x="-4.7" y="-6.7" width="1.6" height="2.4" fill="#fff"/><rect x="-4.7" y="-2.8" width="1.6" height="2.4" fill="#fff"/><rect x="-4.7" y="1.4000000000000001" width="1.6" height="2.4" fill="#fff"/><rect x="-4.7" y="5.3" width="1.6" height="2.4" fill="#fff"/><rect x="-1.4" y="-6.7" width="1.6" height="2.4" fill="#fff"/><rect x="-1.4" y="-2.8" width="1.6" height="2.4" fill="#fff"/><rect x="-1.4" y="1.4000000000000001" width="1.6" height="2.4" fill="#fff"/><rect x="-1.4" y="5.3" width="1.6" height="2.4" fill="#fff"/><rect x="1.2" y="-6.7" width="1.6" height="2.4" fill="#fff"/><rect x="1.2" y="-2.8" width="1.6" height="2.4" fill="#fff"/><rect x="1.2" y="1.4000000000000001" width="1.6" height="2.4" fill="#fff"/><rect x="1.2" y="5.3" width="1.6" height="2.4" fill="#fff"/><rect x="-10.5" y="1.4000000000000001" width="1.6" height="2.4" fill="#fff"/><rect x="-10.5" y="5.3" width="1.6" height="2.4" fill="#fff"/><rect x="-8.200000000000001" y="1.4000000000000001" width="1.6" height="2.4" fill="#fff"/><rect x="-8.200000000000001" y="5.3" width="1.6" height="2.4" fill="#fff"/><rect x="4.7" y="-2.8" width="1.6" height="2.4" fill="#fff"/><rect x="4.7" y="1.4000000000000001" width="1.6" height="2.4" fill="#fff"/><rect x="4.7" y="5.3" width="1.6" height="2.4" fill="#fff"/><rect x="7.6000000000000005" y="-2.8" width="1.6" height="2.4" fill="#fff"/><rect x="7.6000000000000005" y="1.4000000000000001" width="1.6" height="2.4" fill="#fff"/><rect x="7.6000000000000005" y="5.3" width="1.6" height="2.4" fill="#fff"/></g>
<rect x="67.8" y="192.4" width="22.5" height="18.7" fill="#fbfbfb" opacity="0.92"/>
<text x="79.0" y="197.8" font-size="3.6" fill="#444" text-anchor="middle">Dublin</text>
<text x="79.0" y="203.3" font-size="3.6" fill="#444" text-anchor="middle">Ping: 79 ms</text>
<text x="79.0" y="207.5" font-size="3.6" font-weight="bold" fill="#2a2" text-anchor="middle">OK</text>
<g transform="translate(174.0,212.5) scale(1.0)"><rect x="-11.3" y="-2.6" width="6.4" height="12" fill="#2f3550"/><rect x="-5.1" y="-10.3" width="9.2" height="19.7" fill="#2f3550"/><rect x="3.9" y="-6.4" width="6.4" height="15.8" fill="#2f3550"/><rect x="-11.3" y="-2.6" width="6.4" height="1.3" fill="#6c7290"/><rect x="-5.1" y="-10.3" width="9.2" height="1.5" fill="#6c7290"/><rect x="3.9" y="-6.4" width="6.4" height="1.3" fill="#6c7290"/><rect x="-4.7" y="-6.7" width="1.6" height="2.4" fill="#fff"/><rect x="-4.7" y="-2.8" width="1.6" height="2.4" fill="#fff"/><rect x="-4.7" y="1.4000000000000001" width="1.6" height="2.4" fill="#fff"/><rect x="-4.7" y="5.3" width="1.6" height="2.4" fill="#fff"/><rect x="-1.4" y="-6.7" width="1.6" height="2.4" fill="#fff"/><rect x="-1.4" y="-2.8" width="1.6" height="2.4" fill="#fff"/><rect x="-1.4" y="1.4000000000000001" width="1.6" height="2.4" fill="#fff"/><rect x="-1.4" y="5.3" width="1.6" height="2.4" fill="#fff"/><rect x="1.2" y="-6.7" width="1.6" height="2.4" fill="#fff"/><rect x="1.2" y="-2.8" width="1.6" height="2.4" fill="#fff"/><rect x="1.2" y="1.4000000000000001" width="1.6" height="2.4" fill="#fff"/><rect x="1.2" y="5.3" width="1.6" height="2.4" fill="#fff"/><rect x="-10.5" y="1.4000000000000001" width="1.6" height="2.4" fill="#fff"/><rect x="-10.5" y="5.3" width="1.6" height="2.4" fill="#fff"/><rect x="-8.200000000000001" y="1.4000000000000001" width="1.6" height="2.4" fill="#fff"/><rect x="-8.200000000000001" y="5.3" width="1.6" height="2.4" fill="#fff"/><rect x="4.7" y="-2.8" width="1.6" height="2.4" fill="#fff"/><rect x="4.7" y="1.4000000000000001" width="1.6" height="2.4" fill="#fff"/><rect x="4.7" y="5.3" width="1.6" height="2.4" fill="#fff"/><rect x="7.6000000000000005" y="-2.8" width="1.6" height="2.4" fill="#fff"/><rect x="7.6000000000000005" y="1.4000000000000001" width="1.6" height="2.4" fill="#fff"/><rect x="7.6000000000000005" y="5.3" width="1.6" height="2.4" fill="#fff"/></g>
<rect x="161.8" y="224.4" width="22.5" height="18.7" fill="#fbfbfb" opacity="0.92"/>
<text x="173.0" y="229.8" font-size="3.6" fill="#444" text-anchor="middle">London</text>
<text x="173.0" y="235.3" font-size="3.6" fill="#444" text-anchor="middle">Ping: 119 ms</text>
<text x="173.0" y="239.5" font-size="3.6" font-weight="bold" fill="#2a2" text-anchor="middle">OK</text>
<g transform="translate(251.6,205.8) scale(1.0)"><rect x="-11.3" y="-2.6" width="6.4" height="12" fill="#2f3550"/><rect x="-5.1" y="-10.3" width="9.2" height="19.7" fill="#2f3550"/><rect x="3.9" y="-6.4" width="6.4" height="15.8" fill="#2f3550"/><rect x="-11.3" y="-2.6" width="6.4" height="1.3" fill="#6c7290"/><rect x="-5.1" y="-10.3" width="9.2" height="1.5" fill="#6c7290"/><rect x="3.9" y="-6.4" width="6.4" height="1.3" fill="#6c7290"/><rect x="-4.7" y="-6.7" width="1.6" height="2.4" fill="#fff"/><rect x="-4.7" y="-2.8" width="1.6" height="2.4" fill="#fff"/><rect x="-4.7" y="1.4000000000000001" width="1.6" height="2.4" fill="#fff"/><rect x="-4.7" y="5.3" width="1.6" height="2.4" fill="#fff"/><rect x="-1.4" y="-6.7" width="1.6" height="2.4" fill="#fff"/><rect x="-1.4" y="-2.8" width="1.6" height="2.4" fill="#fff"/><rect x="-1.4" y="1.4000000000000001" width="1.6" height="2.4" fill="#fff"/><rect x="-1.4" y="5.3" width="1.6" height="2.4" fill="#fff"/><rect x="1.2" y="-6.7" width="1.6" height="2.4" fill="#fff"/><rect x="1.2" y="-2.8" width="1.6" height="2.4" fill="#fff"/><rect x="1.2" y="1.4000000000000001" width="1.6" height="2.4" fill="#fff"/><rect x="1.2" y="5.3" width="1.6" height="2.4" fill="#fff"/><rect x="-10.5" y="1.4000000000000001" width="1.6" height="2.4" fill="#fff"/><rect x="-10.5" y="5.3" width="1.6" height="2.4" fill="#fff"/><rect x="-8.200000000000001" y="1.4000000000000001" width="1.6" height="2.4" fill="#fff"/><rect x="-8.200000000000001" y="5.3" width="1.6" height="2.4" fill="#fff"/><rect x="4.7" y="-2.8" width="1.6" height="2.4" fill="#fff"/><rect x="4.7" y="1.4000000000000001" width="1.6" height="2.4" fill="#fff"/><rect x="4.7" y="5.3" width="1.6" height="2.4" fill="#fff"/><rect x="7.6000000000000005" y="-2.8" width="1.6" height="2.4" fill="#fff"/><rect x="7.6000000000000005" y="1.4000000000000001" width="1.6" height="2.4" fill="#fff"/><rect x="7.6000000000000005" y="5.3" width="1.6" height="2.4" fill="#fff"/></g>
<rect x="239.4" y="217.7" width="22.5" height="18.7" fill="#fbfbfb" opacity="0.92"/>
<text x="250.6" y="223.1" font-size="3.6" fill="#444" text-anchor="middle">Amsterdam</text>
<text x="250.6" y="228.6" font-size="3.6" fill="#444" text-anchor="middle">Ping: 57 ms</text>
<text x="250.6" y="232.8" font-size="3.6" font-weight="bold" fill="#2a2" text-anchor="middle">OK</text>
<g transform="translate(305.5,258.4) scale(1.0)"><rect x="-11.3" y="-2.6" width="6.4" height="12" fill="#2f3550"/><rect x="-5.1" y="-10.3" width="9.2" height="19.7" fill="#2f3550"/><rect x="3.9" y="-6.4" width="6.4" height="15.8" fill="#2f3550"/><rect x="-11.3" y="-2.6" width="6.4" height="1.3" fill="#6c7290"/><rect x="-5.1" y="-10.3" width="9.2" height="1.5" fill="#6c7290"/><rect x="3.9" y="-6.4" width="6.4" height="1.3" fill="#6c7290"/><rect x="-4.7" y="-6.7" width="1.6" height="2.4" fill="#fff"/><rect x="-4.7" y="-2.8" width="1.6" height="2.4" fill="#fff"/><rect x="-4.7" y="1.4000000000000001" width="1.6" height="2.4" fill="#fff"/><rect x="-4.7" y="5.3" width="1.6" height="2.4" fill="#fff"/><rect x="-1.4" y="-6.7" width="1.6" height="2.4" fill="#fff"/><rect x="-1.4" y="-2.8" width="1.6" height="2.4" fill="#fff"/><rect x="-1.4" y="1.4000000000000001" width="1.6" height="2.4" fill="#fff"/><rect x="-1.4" y="5.3" width="1.6" height="2.4" fill="#fff"/><rect x="1.2" y="-6.7" width="1.6" height="2.4" fill="#fff"/><rect x="1.2" y="-2.8" width="1.6" height="2.4" fill="#fff"/><rect x="1.2" y="1.4000000000000001" width="1.6" height="2.4" fill="#fff"/><rect x="1.2" y="5.3" width="1.6" height="2.4" fill="#fff"/><rect x="-10.5" y="1.4000000000000001" width="1.6" height="2.4" fill="#fff"/><rect x="-10.5" y="5.3" width="1.6" height="2.4" fill="#fff"/><rect x="-8.200000000000001" y="1.4000000000000001" width="1.6" height="2.4" fill="#fff"/><rect x="-8.200000000000001" y="5.3" width="1.6" height="2.4" fill="#fff"/><rect x="4.7" y="-2.8" width="1.6" height="2.4" fill="#fff"/><rect x="4.7" y="1.4000000000000001" width="1.6" height="2.4" fill="#fff"/><rect x="4.7" y="5.3" width="1.6" height="2.4" fill="#fff"/><rect x="7.6000000000000005" y="-2.8" width="1.6" height="2.4" fill="#fff"/><rect x="7.6000000000000005" y="1.4000000000000001" width="1.6" height="2.4" fill="#fff"/><rect x="7.6000000000000005" y="5.3" width="1.6" height="2.4" fill="#fff"/></g>
<rect x="293.3" y="270.3" width="22.5" height="18.7" fill="#fbfbfb" opacity="0.92"/>
<text x="304.5" y="275.7" font-size="3.6" fill="#444" text-anchor="middle">Frankfurt</text>
<text x="304.5" y="281.2" font-size="3.6" fill="#444" text-anchor="middle">Ping: 78 ms</text>
<text x="304.5" y="285.4" font-size="3.6" font-weight="bold" fill="#2a2" text-anchor="middle">OK</text>
<g transform="translate(204.5,290.4) scale(1.0)"><rect x="-11.3" y="-2.6" width="6.4" height="12" fill="#2f3550"/><rect x="-5.1" y="-10.3" width="9.2" height="19.7" fill="#2f3550"/><rect x="3.9" y="-6.4" width="6.4" height="15.8" fill="#2f3550"/><rect x="-11.3" y="-2.6" width="6.4" height="1.3" fill="#6c7290"/><rect x="-5.1" y="-10.3" width="9.2" height="1.5" fill="#6c7290"/><rect x="3.9" y="-6.4" width="6.4" height="1.3" fill="#6c7290"/><rect x="-4.7" y="-6.7" width="1.6" height="2.4" fill="#fff"/><rect x="-4.7" y="-2.8" width="1.6" height="2.4" fill="#fff"/><rect x="-4.7" y="1.4000000000000001" width="1.6" height="2.4" fill="#fff"/><rect x="-4.7" y="5.3" width="1.6" height="2.4" fill="#fff"/><rect x="-1.4" y="-6.7" width="1.6" height="2.4" fill="#fff"/><rect x="-1.4" y="-2.8" width="1.6" height="2.4" fill="#fff"/><rect x="-1.4" y="1.4000000000000001" width="1.6" height="2.4" fill="#fff"/><rect x="-1.4" y="5.3" width="1.6" height="2.4" fill="#fff"/><rect x="1.2" y="-6.7" width="1.6" height="2.4" fill="#fff"/><rect x="1.2" y="-2.8" width="1.6" height="2.4" fill="#fff"/><rect x="1.2" y="1.4000000000000001" width="1.6" height="2.4" fill="#fff"/><rect x="1.2" y="5.3" width="1.6" height="2.4" fill="#fff"/><rect x="-10.5" y="1.4000000000000001" width="1.6" height="2.4" fill="#fff"/><rect x="-10.5" y="5.3" width="1.6" height="2.4" fill="#fff"/><rect x="-8.200000000000001" y="1.4000000000000001" width="1.6" height="2.4" fill="#fff"/><rect x="-8.200000000000001" y="5.3" width="1.6" height="2.4" fill="#fff"/><rect x="4.7" y="-2.8" width="1.6" height="2.4" fill="#fff"/><rect x="4.7" y="1.4000000000000001" width="1.6" height="2.4" fill="#fff"/><rect x="4.7" y="5.3" width="1.6" height="2.4" fill="#fff"/><rect x="7.6000000000000005" y="-2.8" width="1.6" height="2.4" fill="#fff"/><rect x="7.6000000000000005" y="1.4000000000000001" width="1.6" height="2.4" fill="#fff"/><rect x="7.6000000000000005" y="5.3" width="1.6" height="2.4" fill="#fff"/></g>
<rect x="192.3" y="302.3" width="22.5" height="18.7" fill="#fbfbfb" opacity="0.92"/>
<text x="203.5" y="307.7" font-size="3.6" fill="#444" text-anchor="middle">Paris</text>
<text x="203.5" y="313.2" font-size="3.6" fill="#444" text-anchor="middle">Ping: 115 ms</text>
<text x="203.5" y="317.4" font-size="3.6" font-weight="bold" fill="#2a2" text-anchor="middle">OK</text>
<g transform="translate(427.6,305.5) scale(1.0)"><rect x="-11.3" y="-2.6" width="6.4" height="12" fill="#2f3550"/><rect x="-5.1" y="-10.3" width="9.2" height="19.7" fill="#2f3550"/><rect x="3.9" y="-6.4" width="6.4" height="15.8" fill="#2f3550"/><rect x="-11.3" y="-2.6" width="6.4" height="1.3" fill="#6c7290"/><rect x="-5.1" y="-10.3" width="9.2" height="1.5" fill="#6c7290"/><rect x="3.9" y="-6.4" width="6.4" height="1.3" fill="#6c7290"/><rect x="-4.7" y="-6.7" width="1.6" height="2.4" fill="#fff"/><rect x="-4.7" y="-2.8" width="1.6" height="2.4" fill="#fff"/><rect x="-4.7" y="1.4000000000000001" width="1.6" height="2.4" fill="#fff"/><rect x="-4.7" y="5.3" width="1.6" height="2.4" fill="#fff"/><rect x="-1.4" y="-6.7" width="1.6" height="2.4" fill="#fff"/><rect x="-1.4" y="-2.8" width="1.6" height="2.4" fill="#fff"/><rect x="-1.4" y="1.4000000000000001" width="1.6" height="2.4" fill="#fff"/><rect x="-1.4" y="5.3" width="1.6" height="2.4" fill="#fff"/><rect x="1.2" y="-6.7" width="1.6" height="2.4" fill="#fff"/><rect x="1.2" y="-2.8" width="1.6" height="2.4" fill="#fff"/><rect x="1.2" y="1.4000000000000001" width="1.6" height="2.4" fill="#fff"/><rect x="1.2" y="5.3" width="1.6" height="2.4" fill="#fff"/><rect x="-10.5" y="1.4000000000000001" width="1.6" height="2.4" fill="#fff"/><rect x="-10.5" y="5.3" width="1.6" height="2.4" fill="#fff"/><rect x="-8.200000000000001" y="1.4000000000000001" width="1.6" height="2.4" fill="#fff"/><rect x="-8.200000000000001" y="5.3" width="1.6" height="2.4" fill="#fff"/><rect x="4.7" y="-2.8" width="1.6" height="2.4" fill="#fff"/><rect x="4.7" y="1.4000000000000001" width="1.6" height="2.4" fill="#fff"/><rect x="4.7" y="5.3" width="1.6" height="2.4" fill="#fff"/><rect x="7.6000000000000005" y="-2.8" width="1.6" height="2.4" fill="#fff"/><rect x="7.6000000000000005" y="1.4000000000000001" width="1.6" height="2.4" fill="#fff"/><rect x="7.6000000000000005" y="5.3" width="1.6" height="2.4" fill="#fff"/></g>
<rect x="415.4" y="317.4" width="22.5" height="18.7" fill="#fbfbfb" opacity="0.92"/>
<text x="426.6" y="322.8" font-size="3.6" fill="#444" text-anchor="middle">Bratislava</text>
<text x="426.6" y="328.3" font-size="3.6" fill="#444" text-anchor="middle">Ping: 16 ms</text>
<text x="426.6" y="332.5" font-size="3.6" font-weight="bold" fill="#2a2" text-anchor="middle">OK</text>
<g transform="translate(443.6,20.6) scale(1.0)"><rect x="-11.3" y="-2.6" width="6.4" height="12" fill="#2f3550"/><rect x="-5.1" y="-10.3" width="9.2" height="19.7" fill="#2f3550"/><rect x="3.9" y="-6.4" width="6.4" height="15.8" fill="#2f3550"/><rect x="-11.3" y="-2.6" width="6.4" height="1.3" fill="#6c7290"/><rect x="-5.1" y="-10.3" width="9.2" height="1.5" fill="#6c7290"/><rect x="3.9" y="-6.4" width="6.4" height="1.3" fill="#6c7290"/><rect x="-4.7" y="-6.7" width="1.6" height="2.4" fill="#fff"/><rect x="-4.7" y="-2.8" width="1.6" height="2.4" fill="#fff"/><rect x="-4.7" y="1.4000000000000001" width="1.6" height="2.4" fill="#fff"/><rect x="-4.7" y="5.3" width="1.6" height="2.4" fill="#fff"/><rect x="-1.4" y="-6.7" width="1.6" height="2.4" fill="#fff"/><rect x="-1.4" y="-2.8" width="1.6" height="2.4" fill="#fff"/><rect x="-1.4" y="1.4000000000000001" width="1.6" height="2.4" fill="#fff"/><rect x="-1.4" y="5.3" width="1.6" height="2.4" fill="#fff"/><rect x="1.2" y="-6.7" width="1.6" height="2.4" fill="#fff"/><rect x="1.2" y="-2.8" width="1.6" height="2.4" fill="#fff"/><rect x="1.2" y="1.4000000000000001" width="1.6" height="2.4" fill="#fff"/><rect x="1.2" y="5.3" width="1.6" height="2.4" fill="#fff"/><rect x="-10.5" y="1.4000000000000001" width="1.6" height="2.4" fill="#fff"/><rect x="-10.5" y="5.3" width="1.6" height="2.4" fill="#fff"/><rect x="-8.200000000000001" y="1.4000000000000001" width="1.6" height="2.4" fill="#fff"/><rect x="-8.200000000000001" y="5.3" width="1.6" height="2.4" fill="#fff"/><rect x="4.7" y="-2.8" width="1.6" height="2.4" fill="#fff"/><rect x="4.7" y="1.4000000000000001" width="1.6" height="2.4" fill="#fff"/><rect x="4.7" y="5.3" width="1.6" height="2.4" fill="#fff"/><rect x="7.6000000000000005" y="-2.8" width="1.6" height="2.4" fill="#fff"/><rect x="7.6000000000000005" y="1.4000000000000001" width="1.6" height="2.4" fill="#fff"/><rect x="7.6000000000000005" y="5.3" width="1.6" height="2.4" fill="#fff"/></g>
<rect x="431.4" y="32.5" width="22.5" height="18.7" fill="#fbfbfb" opacity="0.92"/>
<text x="442.6" y="37.9" font-size="3.6" fill="#444" text-anchor="middle">Stockholm</text>
<text x="442.6" y="43.4" font-size="3.6" fill="#444" text-anchor="middle">Ping: 89 ms</text>
<text x="442.6" y="47.6" font-size="3.6" font-weight="bold" fill="#2a2" text-anchor="middle">OK</text>
<g transform="translate(536.0,89.2) scale(1.45)"><rect x="-11.3" y="-2.6" width="6.4" height="12" fill="#2f3550"/><rect x="-5.1" y="-10.3" width="9.2" height="19.7" fill="#2f3550"/><rect x="3.9" y="-6.4" width="6.4" height="15.8" fill="#2f3550"/><rect x="-11.3" y="-2.6" width="6.4" height="1.3" fill="#6c7290"/><rect x="-5.1" y="-10.3" width="9.2" height="1.5" fill="#6c7290"/><rect x="3.9" y="-6.4" width="6.4" height="1.3" fill="#6c7290"/><rect x="-4.7" y="-6.7" width="1.6" height="2.4" fill="#fff"/><rect x="-4.7" y="-2.8" width="1.6" height="2.4" fill="#fff"/><rect x="-4.7" y="1.4000000000000001" width="1.6" height="2.4" fill="#fff"/><rect x="-4.7" y="5.3" width="1.6" height="2.4" fill="#fff"/><rect x="-1.4" y="-6.7" width="1.6" height="2.4" fill="#fff"/><rect x="-1.4" y="-2.8" width="1.6" height="2.4" fill="#fff"/><rect x="-1.4" y="1.4000000000000001" width="1.6" height="2.4" fill="#fff"/><rect x="-1.4" y="5.3" width="1.6" height="2.4" fill="#fff"/><rect x="1.2" y="-6.7" width="1.6" height="2.4" fill="#fff"/><rect x="1.2" y="-2.8" width="1.6" height="2.4" fill="#fff"/><rect x="1.2" y="1.4000000000000001" width="1.6" height="2.4" fill="#fff"/><rect x="1.2" y="5.3" width="1.6" height="2.4" fill="#fff"/><rect x="-10.5" y="1.4000000000000001" width="1.6" height="2.4" fill="#fff"/><rect x="-10.5" y="5.3" width="1.6" height="2.4" fill="#fff"/><rect x="-8.200000000000001" y="1.4000000000000001" width="1.6" height="2.4" fill="#fff"/><rect x="-8.200000000000001" y="5.3" width="1.6" height="2.4" fill="#fff"/><rect x="4.7" y="-2.8" width="1.6" height="2.4" fill="#fff"/><rect x="4.7" y="1.4000000000000001" width="1.6" height="2.4" fill="#fff"/><rect x="4.7" y="5.3" width="1.6" height="2.4" fill="#fff"/><rect x="7.6000000000000005" y="-2.8" width="1.6" height="2.4" fill="#fff"/><rect x="7.6000000000000005" y="1.4000000000000001" width="1.6" height="2.4" fill="#fff"/><rect x="7.6000000000000005" y="5.3" width="1.6" height="2.4" fill="#fff"/></g>
<rect x="530" y="107.19999999999999" width="11.6" height="7.6" fill="#fafafa"/>
<text x="535.8" y="112.0" font-size="3.4" fill="#444" text-anchor="middle">Riga</text>
</g></svg></div><svg class="a" style="left:642px;top:63px" width="751" height="400" viewBox="642 63 751 400">
<rect x="670.8" y="178.3" width="220.20000000000005" height="85.19999999999999" fill="#b3dfdd" stroke="#333" stroke-width="1.1"/>
<text transform="translate(780.9,189.7) scale(0.92,1)" font-family="Liberation Sans, sans-serif" font-size="10" font-weight="bold" text-anchor="middle" fill="#111">Data Center A</text>
<rect x="669.6" y="285.6" width="220.29999999999995" height="89.09999999999997" fill="#b3dfdd" stroke="#333" stroke-width="1.1"/>
<text transform="translate(779.75,370.1) scale(0.92,1)" font-family="Liberation Sans, sans-serif" font-size="10" font-weight="bold" text-anchor="middle" fill="#111">Data Center B</text>
<rect x="935.9" y="109.5" width="184.89999999999998" height="101.80000000000001" fill="#c8e6ca" stroke="#333" stroke-width="1.1"/>
<text transform="translate(1028.35,121.1) scale(0.92,1)" font-family="Liberation Sans, sans-serif" font-size="10" font-weight="bold" text-anchor="middle" fill="#111">Factory Building #1</text>
<rect x="936.4" y="341.7" width="184.39999999999998" height="103.10000000000002" fill="#c8e6ca" stroke="#333" stroke-width="1.1"/>
<text transform="translate(1028.6,439.90000000000003) scale(0.92,1)" font-family="Liberation Sans, sans-serif" font-size="10" font-weight="bold" text-anchor="middle" fill="#111">Factory Building #2</text>
<rect x="1161.5" y="109.5" width="116.20000000000005" height="62.099999999999994" fill="#cfd6dc" stroke="#333" stroke-width="1.1"/>
<text transform="translate(1219.6,121.1) scale(0.92,1)" font-family="Liberation Sans, sans-serif" font-size="10" font-weight="bold" text-anchor="middle" fill="#111">Office Building</text>
<rect x="1161.5" y="182.7" width="116.20000000000005" height="59.80000000000001" fill="#cfd6dc" stroke="#333" stroke-width="1.1"/>
<text transform="translate(1219.6,193.7) scale(0.92,1)" font-family="Liberation Sans, sans-serif" font-size="10" font-weight="bold" text-anchor="middle" fill="#111">Testing Lab</text>
<rect x="1161.5" y="251.3" width="116.20000000000005" height="58.19999999999999" fill="#cfd6dc" stroke="#333" stroke-width="1.1"/>
<text transform="translate(1219.6,262.3) scale(0.92,1)" font-family="Liberation Sans, sans-serif" font-size="10" font-weight="bold" text-anchor="middle" fill="#111">R&amp;D Lab</text>
<rect x="1161.5" y="319.2" width="116.20000000000005" height="58.19999999999999" fill="#cfd6dc" stroke="#333" stroke-width="1.1"/>
<text transform="translate(1219.6,330.20000000000005) scale(0.92,1)" font-family="Liberation Sans, sans-serif" font-size="10" font-weight="bold" text-anchor="middle" fill="#111">Packaging Facility</text>
<rect x="1161.5" y="386.6" width="116.20000000000005" height="57.599999999999966" fill="#cfd6dc" stroke="#333" stroke-width="1.1"/>
<text transform="translate(1219.6,397.6) scale(0.92,1)" font-family="Liberation Sans, sans-serif" font-size="10" font-weight="bold" text-anchor="middle" fill="#111">Warehouse</text>
<rect x="744.6" y="100.6" width="147" height="61" fill="#fff" stroke="#222" stroke-width="1.1"/>
<text x="817.4" y="109.6" font-family="Liberation Sans, sans-serif" font-size="6.6" font-weight="bold" text-anchor="middle" fill="#111">Legend</text>
<text x="751.5" y="120.9" font-family="Liberation Sans, sans-serif" font-size="5.3" font-weight="bold" fill="#111">Fiber optic 1Tbps</text>
<line x1="809" y1="119" x2="868" y2="119" stroke="#e8232a" stroke-width="1.3"/>
<text x="751.5" y="135.9" font-family="Liberation Sans, sans-serif" font-size="5.3" font-weight="bold" fill="#111">Ethernet 10Gbps</text>
<line x1="809" y1="134" x2="868" y2="134" stroke="#22bb22" stroke-width="1.3"/>
<text x="751.5" y="149.8" font-family="Liberation Sans, sans-serif" font-size="5.3" font-weight="bold" fill="#111">Ethernet 1Gbps</text>
<line x1="809" y1="147.9" x2="868" y2="147.9" stroke="#5fdc5f" stroke-width="1.3"/>
<line x1="734" y1="221" x2="763" y2="221" stroke="#e8232a" stroke-width="1.1"/>
<line x1="790" y1="220.6" x2="833" y2="220.6" stroke="#e8232a" stroke-width="1.1"/>
<line x1="776.5" y1="239" x2="776.3" y2="302" stroke="#e8232a" stroke-width="1.1"/>
<line x1="847" y1="239" x2="847" y2="303" stroke="#e8232a" stroke-width="1.1"/>
<line x1="790" y1="236" x2="836" y2="305" stroke="#e8232a" stroke-width="1.1"/>
<line x1="834" y1="238" x2="789" y2="303" stroke="#e8232a" stroke-width="1.1"/>
<line x1="734" y1="322" x2="761" y2="322" stroke="#e8232a" stroke-width="1.1"/>
<line x1="790" y1="322" x2="833" y2="322" stroke="#e8232a" stroke-width="1.1"/>
<line x1="792" y1="215" x2="957" y2="150" stroke="#e8232a" stroke-width="1.1"/>
<line x1="792" y1="229.7" x2="1071" y2="383.6" stroke="#e8232a" stroke-width="1.1"/>
<line x1="790" y1="314" x2="1070" y2="153" stroke="#e8232a" stroke-width="1.1"/>
<line x1="790" y1="327" x2="956" y2="392" stroke="#e8232a" stroke-width="1.1"/>
<line x1="985" y1="149.7" x2="1070" y2="149.7" stroke="#e8232a" stroke-width="1.1"/>
<line x1="985" y1="394.8" x2="1071" y2="394.8" stroke="#e8232a" stroke-width="1.1"/>
<line x1="1208" y1="283" x2="1232" y2="283" stroke="#e8232a" stroke-width="1.1"/>
<line x1="684.5" y1="143.6" x2="709.4" y2="206.5" stroke="#2ec52e" stroke-width="1.1"/>
<line x1="681.2" y1="402.5" x2="709" y2="336.8" stroke="#2ec52e" stroke-width="1.1"/>
<line x1="861" y1="215" x2="1182" y2="148" stroke="#2ec52e" stroke-width="1.1"/>
<line x1="862" y1="315" x2="1182" y2="148" stroke="#2ec52e" stroke-width="1.1"/>
<line x1="861" y1="218.5" x2="1182" y2="216" stroke="#2ec52e" stroke-width="1.1"/>
<line x1="862" y1="318.5" x2="1182" y2="216" stroke="#2ec52e" stroke-width="1.1"/>
<line x1="861" y1="221" x2="1183" y2="283" stroke="#2ec52e" stroke-width="1.1"/>
<line x1="862" y1="321" x2="1183" y2="283" stroke="#2ec52e" stroke-width="1.1"/>
<line x1="861" y1="223.5" x2="1184" y2="353" stroke="#2ec52e" stroke-width="1.1"/>
<line x1="862" y1="323.5" x2="1184" y2="353" stroke="#2ec52e" stroke-width="1.1"/>
<line x1="861" y1="226" x2="1183" y2="418" stroke="#2ec52e" stroke-width="1.1"/>
<line x1="862" y1="326" x2="1183" y2="418" stroke="#2ec52e" stroke-width="1.1"/>
<line x1="1205" y1="145.5" x2="1229" y2="145.5" stroke="#5fdc5f" stroke-width="1.1"/>
<g transform="translate(655.2,118.6) scale(0.9979999999999996,1.0038461538461536)">
<defs><linearGradient id="cg" x1="0" y1="0" x2="0" y2="1"><stop offset="0" stop-color="#b9c9d8"/><stop offset="1" stop-color="#ffffff"/></linearGradient></defs>
<path d="M6 25 C1 25 0 18 5 16 C4 11 10 9 13 11 C14 3 25 1 28 8 C31 5 38 6 38 12 C44 11 50 15 49 20 C49 24 46 25 43 25 Z" fill="url(#cg)" stroke="#8da3b8" stroke-width="0.8"/>
</g>
<text x="680.1500000000001" y="151.1" font-family="Liberation Sans, sans-serif" font-size="4.2" text-anchor="middle" fill="#333">Main ISP</text>
<g transform="translate(653.4,398) scale(1.014000000000001,1.0153846153846144)">
<defs><linearGradient id="cg" x1="0" y1="0" x2="0" y2="1"><stop offset="0" stop-color="#b9c9d8"/><stop offset="1" stop-color="#ffffff"/></linearGradient></defs>
<path d="M6 25 C1 25 0 18 5 16 C4 11 10 9 13 11 C14 3 25 1 28 8 C31 5 38 6 38 12 C44 11 50 15 49 20 C49 24 46 25 43 25 Z" fill="url(#cg)" stroke="#8da3b8" stroke-width="0.8"/>
</g>
<text x="678.75" y="431.2" font-family="Liberation Sans, sans-serif" font-size="4.2" text-anchor="middle" fill="#333">Backup ISP</text>
<g transform="translate(715.9,205.9)"><path d="M-19 8 V24 A19 7.5 0 0 0 19 24 V8 Z" fill="#1a8ad0"/><path d="M-19 8 V14 A19 7.5 0 0 0 19 14 V8 Z" fill="#e8232a"/><path d="M-19 14 A19 7.5 0 0 0 19 14" fill="none" stroke="#c01a20" stroke-width="0.6"/><ellipse cx="0" cy="8" rx="19" ry="7.5" fill="#f0373c"/><g stroke="#fff" stroke-width="1.6"><path d="M-12 6 L-3 8 M12 10 L3 8 M-6 13 L-1 9.5 M6 3 L1 6.5"/></g></g>
<rect x="700.4749999999999" y="239.9" width="31.65" height="8.4" fill="#f2f6f6" opacity="0.92"/>
<text transform="translate(716.3,245.7) scale(0.9,1)" font-family="Liberation Sans, sans-serif" font-size="4.4" text-anchor="middle" fill="#3a3a3a">Core router A</text>
<path d="M762.6 203.58 L765.2 201.5 L791.8 201.5 L789.1999999999999 203.58 Z" fill="#d21a20"/><path d="M789.1999999999999 203.58 L791.8 201.5 L791.8 237.32 L789.1999999999999 239.4 Z" fill="#0f5d99"/><rect x="762.6" y="203.58" width="26.59999999999991" height="35.81999999999999" fill="#1a7fc4"/><rect x="762.6" y="203.58" width="26.59999999999991" height="11.564000000000005" fill="#e8232a"/><path d="M789.1999999999999 203.58 L791.8 201.5 L791.8 213.064 L789.1999999999999 215.144 Z" fill="#b3141a"/><g stroke="#fff" stroke-width="1.6"><line x1="766.59" y1="207.39612000000002" x2="771.91" y2="207.39612000000002"/><line x1="766.59" y1="211.6748" x2="771.91" y2="211.6748"/><line x1="779.89" y1="207.39612000000002" x2="785.2099999999999" y2="207.39612000000002"/><line x1="779.89" y1="211.6748" x2="785.2099999999999" y2="211.6748"/></g><g stroke="#ffd0d0" stroke-width="0.5" fill="none"><path d="M771.91 207.39612000000002 C775.9 207.39612000000002 775.9 211.6748 779.89 211.6748 M771.91 211.6748 C775.9 211.6748 775.9 207.39612000000002 779.89 207.39612000000002"/></g><line x1="779.78" y1="227.27" x2="785.60" y2="227.27" stroke="#fff" stroke-width="0.8"/><circle cx="785.60" cy="227.27" r="0.9" fill="#fff"/><line x1="778.64" y1="230.02" x2="782.76" y2="234.13" stroke="#fff" stroke-width="0.8"/><circle cx="782.76" cy="234.13" r="0.9" fill="#fff"/><line x1="775.90" y1="231.15" x2="775.90" y2="236.97" stroke="#fff" stroke-width="0.8"/><circle cx="775.90" cy="236.97" r="0.9" fill="#fff"/><line x1="773.16" y1="230.02" x2="769.04" y2="234.13" stroke="#fff" stroke-width="0.8"/><circle cx="769.04" cy="234.13" r="0.9" fill="#fff"/><line x1="772.02" y1="227.27" x2="766.20" y2="227.27" stroke="#fff" stroke-width="0.8"/><circle cx="766.20" cy="227.27" r="0.9" fill="#fff"/><line x1="773.16" y1="224.53" x2="769.04" y2="220.41" stroke="#fff" stroke-width="0.8"/><circle cx="769.04" cy="220.41" r="0.9" fill="#fff"/><line x1="775.90" y1="223.39" x2="775.90" y2="217.57" stroke="#fff" stroke-width="0.8"/><circle cx="775.90" cy="217.57" r="0.9" fill="#fff"/><line x1="778.64" y1="224.53" x2="782.76" y2="220.41" stroke="#fff" stroke-width="0.8"/><circle cx="782.76" cy="220.41" r="0.9" fill="#fff"/><circle cx="775.9" cy="227.272" r="3.88096" fill="#ff0000"/>
<rect x="759.85" y="241.9" width="33.699999999999996" height="8.4" fill="#f2f6f6" opacity="0.92"/>
<text transform="translate(776.7,247.7) scale(0.9,1)" font-family="Liberation Sans, sans-serif" font-size="4.4" text-anchor="middle" fill="#3a3a3a">Fiber Switch A</text>
<path d="M832 203.24 L834.8 201.0 L861.3 201.0 L858.5 203.24 Z" fill="#2a8ad0"/><path d="M858.5 203.24 L861.3 201.0 L861.3 237.16 L858.5 239.4 Z" fill="#0f5d99"/><rect x="832" y="203.24" width="26.5" height="36.16" fill="#1a7fc4"/><line x1="832" y1="214.824" x2="858.5" y2="214.824" stroke="#0f66a8" stroke-width="0.5"/><line x1="837.3" y1="206.7152" x2="853.2" y2="206.7152" stroke="#fff" stroke-width="1"/><line x1="837.3" y1="209.61120000000003" x2="853.2" y2="209.61120000000003" stroke="#fff" stroke-width="1"/><line x1="837.3" y1="212.5072" x2="853.2" y2="212.5072" stroke="#fff" stroke-width="1"/><line x1="850.17" y1="227.11" x2="855.57" y2="227.11" stroke="#fff" stroke-width="0.8"/><circle cx="855.57" cy="227.11" r="0.9" fill="#fff"/><line x1="848.73" y1="230.59" x2="852.55" y2="234.41" stroke="#fff" stroke-width="0.8"/><circle cx="852.55" cy="234.41" r="0.9" fill="#fff"/><line x1="845.25" y1="232.03" x2="845.25" y2="237.43" stroke="#fff" stroke-width="0.8"/><circle cx="845.25" cy="237.43" r="0.9" fill="#fff"/><line x1="841.77" y1="230.59" x2="837.95" y2="234.41" stroke="#fff" stroke-width="0.8"/><circle cx="837.95" cy="234.41" r="0.9" fill="#fff"/><line x1="840.33" y1="227.11" x2="834.93" y2="227.11" stroke="#fff" stroke-width="0.8"/><circle cx="834.93" cy="227.11" r="0.9" fill="#fff"/><line x1="841.77" y1="223.64" x2="837.95" y2="219.81" stroke="#fff" stroke-width="0.8"/><circle cx="837.95" cy="219.81" r="0.9" fill="#fff"/><line x1="845.25" y1="222.20" x2="845.25" y2="216.79" stroke="#fff" stroke-width="0.8"/><circle cx="845.25" cy="216.79" r="0.9" fill="#fff"/><line x1="848.73" y1="223.64" x2="852.55" y2="219.81" stroke="#fff" stroke-width="0.8"/><circle cx="852.55" cy="219.81" r="0.9" fill="#fff"/><circle cx="845.25" cy="227.11200000000002" r="4.915199999999999" fill="#ff0000"/>
<rect x="831.7" y="240.4" width="29.599999999999998" height="8.4" fill="#f2f6f6" opacity="0.92"/>
<text transform="translate(846.5,246.2) scale(0.9,1)" font-family="Liberation Sans, sans-serif" font-size="4.4" text-anchor="middle" fill="#3a3a3a">10G Switch A</text>
<g transform="translate(715.3,305.7)"><path d="M-19 8 V24 A19 7.5 0 0 0 19 24 V8 Z" fill="#1a8ad0"/><path d="M-19 8 V14 A19 7.5 0 0 0 19 14 V8 Z" fill="#e8232a"/><path d="M-19 14 A19 7.5 0 0 0 19 14" fill="none" stroke="#c01a20" stroke-width="0.6"/><ellipse cx="0" cy="8" rx="19" ry="7.5" fill="#f0373c"/><g stroke="#fff" stroke-width="1.6"><path d="M-12 6 L-3 8 M12 10 L3 8 M-6 13 L-1 9.5 M6 3 L1 6.5"/></g></g>
<rect x="699.4749999999999" y="339.9" width="31.65" height="8.4" fill="#f2f6f6" opacity="0.92"/>
<text transform="translate(715.3,345.7) scale(0.9,1)" font-family="Liberation Sans, sans-serif" font-size="4.4" text-anchor="middle" fill="#3a3a3a">Core router B</text>
<path d="M761.4 304.38 L764.0 302.3 L790.3 302.3 L787.6999999999999 304.38 Z" fill="#d21a20"/><path d="M787.6999999999999 304.38 L790.3 302.3 L790.3 338.52000000000004 L787.6999999999999 340.6 Z" fill="#0f5d99"/><rect x="761.4" y="304.38" width="26.299999999999955" height="36.22000000000003" fill="#1a7fc4"/><rect x="761.4" y="304.38" width="26.299999999999955" height="11.70800000000001" fill="#e8232a"/><path d="M787.6999999999999 304.38 L790.3 302.3 L790.3 314.00800000000004 L787.6999999999999 316.088 Z" fill="#b3141a"/><g stroke="#fff" stroke-width="1.6"><line x1="765.345" y1="308.24364" x2="770.605" y2="308.24364"/><line x1="765.345" y1="312.5756" x2="770.605" y2="312.5756"/><line x1="778.4949999999999" y1="308.24364" x2="783.7549999999999" y2="308.24364"/><line x1="778.4949999999999" y1="312.5756" x2="783.7549999999999" y2="312.5756"/></g><g stroke="#ffd0d0" stroke-width="0.5" fill="none"><path d="M770.605 308.24364 C774.55 308.24364 774.55 312.5756 778.4949999999999 312.5756 M770.605 312.5756 C774.55 312.5756 774.55 308.24364 778.4949999999999 308.24364"/></g><line x1="778.47" y1="328.34" x2="784.35" y2="328.34" stroke="#fff" stroke-width="0.8"/><circle cx="784.35" cy="328.34" r="0.9" fill="#fff"/><line x1="777.32" y1="331.12" x2="781.48" y2="335.28" stroke="#fff" stroke-width="0.8"/><circle cx="781.48" cy="335.28" r="0.9" fill="#fff"/><line x1="774.55" y1="332.27" x2="774.55" y2="338.15" stroke="#fff" stroke-width="0.8"/><circle cx="774.55" cy="338.15" r="0.9" fill="#fff"/><line x1="771.78" y1="331.12" x2="767.62" y2="335.28" stroke="#fff" stroke-width="0.8"/><circle cx="767.62" cy="335.28" r="0.9" fill="#fff"/><line x1="770.63" y1="328.34" x2="764.75" y2="328.34" stroke="#fff" stroke-width="0.8"/><circle cx="764.75" cy="328.34" r="0.9" fill="#fff"/><line x1="771.78" y1="325.57" x2="767.62" y2="321.41" stroke="#fff" stroke-width="0.8"/><circle cx="767.62" cy="321.41" r="0.9" fill="#fff"/><line x1="774.55" y1="324.42" x2="774.55" y2="318.54" stroke="#fff" stroke-width="0.8"/><circle cx="774.55" cy="318.54" r="0.9" fill="#fff"/><line x1="777.32" y1="325.57" x2="781.48" y2="321.41" stroke="#fff" stroke-width="0.8"/><circle cx="781.48" cy="321.41" r="0.9" fill="#fff"/><circle cx="774.55" cy="328.34400000000005" r="3.92192" fill="#ff0000"/>
<rect x="759.05" y="342.59999999999997" width="33.699999999999996" height="8.4" fill="#f2f6f6" opacity="0.92"/>
<text transform="translate(775.9,348.4) scale(0.9,1)" font-family="Liberation Sans, sans-serif" font-size="4.4" text-anchor="middle" fill="#3a3a3a">Fiber Switch B</text>
<path d="M833.3 305.04 L836.0999999999999 302.8 L862.3 302.8 L859.5 305.04 Z" fill="#2a8ad0"/><path d="M859.5 305.04 L862.3 302.8 L862.3 338.36 L859.5 340.6 Z" fill="#0f5d99"/><rect x="833.3" y="305.04" width="26.200000000000045" height="35.56" fill="#1a7fc4"/><line x1="833.3" y1="316.408" x2="859.5" y2="316.408" stroke="#0f66a8" stroke-width="0.5"/><line x1="838.54" y1="308.4504" x2="854.26" y2="308.4504" stroke="#fff" stroke-width="1"/><line x1="838.54" y1="311.29240000000004" x2="854.26" y2="311.29240000000004" stroke="#fff" stroke-width="1"/><line x1="838.54" y1="314.1344" x2="854.26" y2="314.1344" stroke="#fff" stroke-width="1"/><line x1="851.24" y1="328.50" x2="856.56" y2="328.50" stroke="#fff" stroke-width="0.8"/><circle cx="856.56" cy="328.50" r="0.9" fill="#fff"/><line x1="849.82" y1="331.93" x2="853.58" y2="335.69" stroke="#fff" stroke-width="0.8"/><circle cx="853.58" cy="335.69" r="0.9" fill="#fff"/><line x1="846.40" y1="333.34" x2="846.40" y2="338.66" stroke="#fff" stroke-width="0.8"/><circle cx="846.40" cy="338.66" r="0.9" fill="#fff"/><line x1="842.98" y1="331.93" x2="839.22" y2="335.69" stroke="#fff" stroke-width="0.8"/><circle cx="839.22" cy="335.69" r="0.9" fill="#fff"/><line x1="841.56" y1="328.50" x2="836.24" y2="328.50" stroke="#fff" stroke-width="0.8"/><circle cx="836.24" cy="328.50" r="0.9" fill="#fff"/><line x1="842.98" y1="325.08" x2="839.22" y2="321.32" stroke="#fff" stroke-width="0.8"/><circle cx="839.22" cy="321.32" r="0.9" fill="#fff"/><line x1="846.40" y1="323.67" x2="846.40" y2="318.34" stroke="#fff" stroke-width="0.8"/><circle cx="846.40" cy="318.34" r="0.9" fill="#fff"/><line x1="849.82" y1="325.08" x2="853.58" y2="321.32" stroke="#fff" stroke-width="0.8"/><circle cx="853.58" cy="321.32" r="0.9" fill="#fff"/><circle cx="846.4" cy="328.504" r="4.838400000000002" fill="#ff0000"/>
<rect x="832.3000000000001" y="343.29999999999995" width="29.599999999999998" height="8.4" fill="#f2f6f6" opacity="0.92"/>
<text transform="translate(847.1,349.09999999999997) scale(0.9,1)" font-family="Liberation Sans, sans-serif" font-size="4.4" text-anchor="middle" fill="#3a3a3a">10G Switch B</text>
<path d="M956.5 132.78 L959.1 130.7 L985.5 130.7 L982.9 132.78 Z" fill="#d21a20"/><path d="M982.9 132.78 L985.5 130.7 L985.5 166.92 L982.9 169 Z" fill="#0f5d99"/><rect x="956.5" y="132.78" width="26.399999999999977" height="36.22" fill="#1a7fc4"/><rect x="956.5" y="132.78" width="26.399999999999977" height="11.70800000000001" fill="#e8232a"/><path d="M982.9 132.78 L985.5 130.7 L985.5 142.408 L982.9 144.488 Z" fill="#b3141a"/><g stroke="#fff" stroke-width="1.6"><line x1="960.46" y1="136.64364" x2="965.74" y2="136.64364"/><line x1="960.46" y1="140.97560000000001" x2="965.74" y2="140.97560000000001"/><line x1="973.66" y1="136.64364" x2="978.9399999999999" y2="136.64364"/><line x1="973.66" y1="140.97560000000001" x2="978.9399999999999" y2="140.97560000000001"/></g><g stroke="#ffd0d0" stroke-width="0.5" fill="none"><path d="M965.74 136.64364 C969.7 136.64364 969.7 140.97560000000001 973.66 140.97560000000001 M965.74 140.97560000000001 C969.7 140.97560000000001 969.7 136.64364 973.66 136.64364"/></g><g fill="none" stroke="#fff" stroke-width="0.6"><ellipse cx="969.7" cy="156.744" rx="8.711999999999993" ry="3.695999999999997" transform="rotate(35 969.7 156.744)"/><ellipse cx="969.7" cy="156.744" rx="8.711999999999993" ry="3.695999999999997" transform="rotate(-35 969.7 156.744)"/></g><line x1="973.13" y1="156.74" x2="980.00" y2="156.74" stroke="#fff" stroke-width="0.8"/><circle cx="980.00" cy="156.74" r="0.9" fill="#fff"/><line x1="972.13" y1="159.17" x2="976.98" y2="164.02" stroke="#fff" stroke-width="0.8"/><circle cx="976.98" cy="164.02" r="0.9" fill="#fff"/><line x1="969.70" y1="160.18" x2="969.70" y2="167.04" stroke="#fff" stroke-width="0.8"/><circle cx="969.70" cy="167.04" r="0.9" fill="#fff"/><line x1="967.27" y1="159.17" x2="962.42" y2="164.02" stroke="#fff" stroke-width="0.8"/><circle cx="962.42" cy="164.02" r="0.9" fill="#fff"/><line x1="966.27" y1="156.74" x2="959.40" y2="156.74" stroke="#fff" stroke-width="0.8"/><circle cx="959.40" cy="156.74" r="0.9" fill="#fff"/><line x1="967.27" y1="154.32" x2="962.42" y2="149.46" stroke="#fff" stroke-width="0.8"/><circle cx="962.42" cy="149.46" r="0.9" fill="#fff"/><line x1="969.70" y1="153.31" x2="969.70" y2="146.45" stroke="#fff" stroke-width="0.8"/><circle cx="969.70" cy="146.45" r="0.9" fill="#fff"/><line x1="972.13" y1="154.32" x2="976.98" y2="149.46" stroke="#fff" stroke-width="0.8"/><circle cx="976.98" cy="149.46" r="0.9" fill="#fff"/><circle cx="969.7" cy="156.744" r="3.4316800000000005" fill="#a8a8a8"/>
<rect x="951.9" y="170.70000000000002" width="37.8" height="8.4" fill="#f2f6f6" opacity="0.92"/>
<text transform="translate(970.8,176.5) scale(0.9,1)" font-family="Liberation Sans, sans-serif" font-size="4.4" text-anchor="middle" fill="#3a3a3a">Factory 1 Core 1</text>
<path d="M1069.8 132.78 L1072.3999999999999 130.7 L1098.9 130.7 L1096.3000000000002 132.78 Z" fill="#d21a20"/><path d="M1096.3000000000002 132.78 L1098.9 130.7 L1098.9 166.92 L1096.3000000000002 169 Z" fill="#0f5d99"/><rect x="1069.8" y="132.78" width="26.500000000000227" height="36.22" fill="#1a7fc4"/><rect x="1069.8" y="132.78" width="26.500000000000227" height="11.70800000000001" fill="#e8232a"/><path d="M1096.3000000000002 132.78 L1098.9 130.7 L1098.9 142.408 L1096.3000000000002 144.488 Z" fill="#b3141a"/><g stroke="#fff" stroke-width="1.6"><line x1="1073.775" y1="136.64364" x2="1079.075" y2="136.64364"/><line x1="1073.775" y1="140.97560000000001" x2="1079.075" y2="140.97560000000001"/><line x1="1087.025" y1="136.64364" x2="1092.325" y2="136.64364"/><line x1="1087.025" y1="140.97560000000001" x2="1092.325" y2="140.97560000000001"/></g><g stroke="#ffd0d0" stroke-width="0.5" fill="none"><path d="M1079.075 136.64364 C1083.0500000000002 136.64364 1083.0500000000002 140.97560000000001 1087.025 140.97560000000001 M1079.075 140.97560000000001 C1083.0500000000002 140.97560000000001 1083.0500000000002 136.64364 1087.025 136.64364"/></g><g fill="none" stroke="#fff" stroke-width="0.6"><ellipse cx="1083.0500000000002" cy="156.744" rx="8.745000000000076" ry="3.7100000000000324" transform="rotate(35 1083.0500000000002 156.744)"/><ellipse cx="1083.0500000000002" cy="156.744" rx="8.745000000000076" ry="3.7100000000000324" transform="rotate(-35 1083.0500000000002 156.744)"/></g><line x1="1086.48" y1="156.74" x2="1093.35" y2="156.74" stroke="#fff" stroke-width="0.8"/><circle cx="1093.35" cy="156.74" r="0.9" fill="#fff"/><line x1="1085.48" y1="159.17" x2="1090.33" y2="164.02" stroke="#fff" stroke-width="0.8"/><circle cx="1090.33" cy="164.02" r="0.9" fill="#fff"/><line x1="1083.05" y1="160.18" x2="1083.05" y2="167.04" stroke="#fff" stroke-width="0.8"/><circle cx="1083.05" cy="167.04" r="0.9" fill="#fff"/><line x1="1080.62" y1="159.17" x2="1075.77" y2="164.02" stroke="#fff" stroke-width="0.8"/><circle cx="1075.77" cy="164.02" r="0.9" fill="#fff"/><line x1="1079.62" y1="156.74" x2="1072.75" y2="156.74" stroke="#fff" stroke-width="0.8"/><circle cx="1072.75" cy="156.74" r="0.9" fill="#fff"/><line x1="1080.62" y1="154.32" x2="1075.77" y2="149.46" stroke="#fff" stroke-width="0.8"/><circle cx="1075.77" cy="149.46" r="0.9" fill="#fff"/><line x1="1083.05" y1="153.31" x2="1083.05" y2="146.45" stroke="#fff" stroke-width="0.8"/><circle cx="1083.05" cy="146.45" r="0.9" fill="#fff"/><line x1="1085.48" y1="154.32" x2="1090.33" y2="149.46" stroke="#fff" stroke-width="0.8"/><circle cx="1090.33" cy="149.46" r="0.9" fill="#fff"/><circle cx="1083.0500000000002" cy="156.744" r="3.4316800000000005" fill="#a8a8a8"/>
<rect x="1065.3999999999999" y="170.70000000000002" width="37.8" height="8.4" fill="#f2f6f6" opacity="0.92"/>
<text transform="translate(1084.3,176.5) scale(0.9,1)" font-family="Liberation Sans, sans-serif" font-size="4.4" text-anchor="middle" fill="#3a3a3a">Factory 1 Core 2</text>
<path d="M955.7 377.58 L958.3000000000001 375.5 L984.7 375.5 L982.1 377.58 Z" fill="#d21a20"/><path d="M982.1 377.58 L984.7 375.5 L984.7 411.72 L982.1 413.8 Z" fill="#0f5d99"/><rect x="955.7" y="377.58" width="26.399999999999977" height="36.22000000000003" fill="#1a7fc4"/><rect x="955.7" y="377.58" width="26.399999999999977" height="11.70800000000001" fill="#e8232a"/><path d="M982.1 377.58 L984.7 375.5 L984.7 387.208 L982.1 389.288 Z" fill="#b3141a"/><g stroke="#fff" stroke-width="1.6"><line x1="959.6600000000001" y1="381.44363999999996" x2="964.94" y2="381.44363999999996"/><line x1="959.6600000000001" y1="385.7756" x2="964.94" y2="385.7756"/><line x1="972.86" y1="381.44363999999996" x2="978.14" y2="381.44363999999996"/><line x1="972.86" y1="385.7756" x2="978.14" y2="385.7756"/></g><g stroke="#ffd0d0" stroke-width="0.5" fill="none"><path d="M964.94 381.44363999999996 C968.9000000000001 381.44363999999996 968.9000000000001 385.7756 972.86 385.7756 M964.94 385.7756 C968.9000000000001 385.7756 968.9000000000001 381.44363999999996 972.86 381.44363999999996"/></g><g fill="none" stroke="#fff" stroke-width="0.6"><ellipse cx="968.9000000000001" cy="401.544" rx="8.711999999999993" ry="3.695999999999997" transform="rotate(35 968.9000000000001 401.544)"/><ellipse cx="968.9000000000001" cy="401.544" rx="8.711999999999993" ry="3.695999999999997" transform="rotate(-35 968.9000000000001 401.544)"/></g><line x1="972.33" y1="401.54" x2="979.20" y2="401.54" stroke="#fff" stroke-width="0.8"/><circle cx="979.20" cy="401.54" r="0.9" fill="#fff"/><line x1="971.33" y1="403.97" x2="976.18" y2="408.82" stroke="#fff" stroke-width="0.8"/><circle cx="976.18" cy="408.82" r="0.9" fill="#fff"/><line x1="968.90" y1="404.98" x2="968.90" y2="411.84" stroke="#fff" stroke-width="0.8"/><circle cx="968.90" cy="411.84" r="0.9" fill="#fff"/><line x1="966.47" y1="403.97" x2="961.62" y2="408.82" stroke="#fff" stroke-width="0.8"/><circle cx="961.62" cy="408.82" r="0.9" fill="#fff"/><line x1="965.47" y1="401.54" x2="958.60" y2="401.54" stroke="#fff" stroke-width="0.8"/><circle cx="958.60" cy="401.54" r="0.9" fill="#fff"/><line x1="966.47" y1="399.12" x2="961.62" y2="394.26" stroke="#fff" stroke-width="0.8"/><circle cx="961.62" cy="394.26" r="0.9" fill="#fff"/><line x1="968.90" y1="398.11" x2="968.90" y2="391.25" stroke="#fff" stroke-width="0.8"/><circle cx="968.90" cy="391.25" r="0.9" fill="#fff"/><line x1="971.33" y1="399.12" x2="976.18" y2="394.26" stroke="#fff" stroke-width="0.8"/><circle cx="976.18" cy="394.26" r="0.9" fill="#fff"/><circle cx="968.9000000000001" cy="401.544" r="3.4316800000000005" fill="#a8a8a8"/>
<rect x="951.3000000000001" y="415.9" width="37.8" height="8.4" fill="#f2f6f6" opacity="0.92"/>
<text transform="translate(970.2,421.7) scale(0.9,1)" font-family="Liberation Sans, sans-serif" font-size="4.4" text-anchor="middle" fill="#3a3a3a">Factory 2 Core 1</text>
<path d="M1071.2 378.08 L1073.8 376.0 L1100.2 376.0 L1097.6000000000001 378.08 Z" fill="#d21a20"/><path d="M1097.6000000000001 378.08 L1100.2 376.0 L1100.2 412.32 L1097.6000000000001 414.4 Z" fill="#0f5d99"/><rect x="1071.2" y="378.08" width="26.40000000000009" height="36.31999999999999" fill="#1a7fc4"/><rect x="1071.2" y="378.08" width="26.40000000000009" height="11.744000000000012" fill="#e8232a"/><path d="M1097.6000000000001 378.08 L1100.2 376 L1100.2 387.744 L1097.6000000000001 389.824 Z" fill="#b3141a"/><g stroke="#fff" stroke-width="1.6"><line x1="1075.16" y1="381.95552" x2="1080.44" y2="381.95552"/><line x1="1075.16" y1="386.3008" x2="1080.44" y2="386.3008"/><line x1="1088.3600000000001" y1="381.95552" x2="1093.64" y2="381.95552"/><line x1="1088.3600000000001" y1="386.3008" x2="1093.64" y2="386.3008"/></g><g stroke="#ffd0d0" stroke-width="0.5" fill="none"><path d="M1080.44 381.95552 C1084.4 381.95552 1084.4 386.3008 1088.3600000000001 386.3008 M1080.44 386.3008 C1084.4 386.3008 1084.4 381.95552 1088.3600000000001 381.95552"/></g><g fill="none" stroke="#fff" stroke-width="0.6"><ellipse cx="1084.4" cy="402.11199999999997" rx="8.71200000000003" ry="3.696000000000013" transform="rotate(35 1084.4 402.11199999999997)"/><ellipse cx="1084.4" cy="402.11199999999997" rx="8.71200000000003" ry="3.696000000000013" transform="rotate(-35 1084.4 402.11199999999997)"/></g><line x1="1087.84" y1="402.11" x2="1094.72" y2="402.11" stroke="#fff" stroke-width="0.8"/><circle cx="1094.72" cy="402.11" r="0.9" fill="#fff"/><line x1="1086.83" y1="404.54" x2="1091.70" y2="409.41" stroke="#fff" stroke-width="0.8"/><circle cx="1091.70" cy="409.41" r="0.9" fill="#fff"/><line x1="1084.40" y1="405.55" x2="1084.40" y2="412.43" stroke="#fff" stroke-width="0.8"/><circle cx="1084.40" cy="412.43" r="0.9" fill="#fff"/><line x1="1081.97" y1="404.54" x2="1077.10" y2="409.41" stroke="#fff" stroke-width="0.8"/><circle cx="1077.10" cy="409.41" r="0.9" fill="#fff"/><line x1="1080.96" y1="402.11" x2="1074.08" y2="402.11" stroke="#fff" stroke-width="0.8"/><circle cx="1074.08" cy="402.11" r="0.9" fill="#fff"/><line x1="1081.97" y1="399.68" x2="1077.10" y2="394.81" stroke="#fff" stroke-width="0.8"/><circle cx="1077.10" cy="394.81" r="0.9" fill="#fff"/><line x1="1084.40" y1="398.67" x2="1084.40" y2="391.79" stroke="#fff" stroke-width="0.8"/><circle cx="1084.40" cy="391.79" r="0.9" fill="#fff"/><line x1="1086.83" y1="399.68" x2="1091.70" y2="394.81" stroke="#fff" stroke-width="0.8"/><circle cx="1091.70" cy="394.81" r="0.9" fill="#fff"/><circle cx="1084.4" cy="402.11199999999997" r="3.4406399999999953" fill="#a8a8a8"/>
<rect x="1066.8" y="416.4" width="37.8" height="8.4" fill="#f2f6f6" opacity="0.92"/>
<text transform="translate(1085.7,422.2) scale(0.9,1)" font-family="Liberation Sans, sans-serif" font-size="4.4" text-anchor="middle" fill="#3a3a3a">Factory 2 Core 2</text>
<path d="M1180.3 135.38000000000002 L1182.8999999999999 133.3 L1205.4 133.3 L1202.8000000000002 135.38000000000002 Z" fill="#2a8ad0"/><path d="M1202.8000000000002 135.38000000000002 L1205.4 133.3 L1205.4 156.32 L1202.8000000000002 158.4 Z" fill="#0f5d99"/><rect x="1180.3" y="135.38000000000002" width="22.500000000000227" height="23.019999999999982" fill="#1a7fc4"/><line x1="1195.46" y1="146.89" x2="1200.76" y2="146.89" stroke="#fff" stroke-width="0.8"/><circle cx="1200.76" cy="146.89" r="0.9" fill="#fff"/><line x1="1194.32" y1="149.66" x2="1198.06" y2="153.40" stroke="#fff" stroke-width="0.8"/><circle cx="1198.06" cy="153.40" r="0.9" fill="#fff"/><line x1="1191.55" y1="150.80" x2="1191.55" y2="156.10" stroke="#fff" stroke-width="0.8"/><circle cx="1191.55" cy="156.10" r="0.9" fill="#fff"/><line x1="1188.78" y1="149.66" x2="1185.04" y2="153.40" stroke="#fff" stroke-width="0.8"/><circle cx="1185.04" cy="153.40" r="0.9" fill="#fff"/><line x1="1187.64" y1="146.89" x2="1182.34" y2="146.89" stroke="#fff" stroke-width="0.8"/><circle cx="1182.34" cy="146.89" r="0.9" fill="#fff"/><line x1="1188.78" y1="144.12" x2="1185.04" y2="140.38" stroke="#fff" stroke-width="0.8"/><circle cx="1185.04" cy="140.38" r="0.9" fill="#fff"/><line x1="1191.55" y1="142.98" x2="1191.55" y2="137.68" stroke="#fff" stroke-width="0.8"/><circle cx="1191.55" cy="137.68" r="0.9" fill="#fff"/><line x1="1194.32" y1="144.12" x2="1198.06" y2="140.38" stroke="#fff" stroke-width="0.8"/><circle cx="1198.06" cy="140.38" r="0.9" fill="#fff"/><circle cx="1191.5500000000002" cy="146.89000000000001" r="3.9133999999999998" fill="#ff0000"/>
<rect x="1179.725" y="160.4" width="27.549999999999997" height="8.4" fill="#f2f6f6" opacity="0.92"/>
<text transform="translate(1193.5,166.2) scale(0.9,1)" font-family="Liberation Sans, sans-serif" font-size="4.4" text-anchor="middle" fill="#3a3a3a">Office Core</text>
<path d="M1181.6 205.48000000000002 L1184.1999999999998 203.4 L1206.7 203.4 L1204.1000000000001 205.48000000000002 Z" fill="#2a8ad0"/><path d="M1204.1000000000001 205.48000000000002 L1206.7 203.4 L1206.7 226.42 L1204.1000000000001 228.5 Z" fill="#0f5d99"/><rect x="1181.6" y="205.48000000000002" width="22.500000000000227" height="23.019999999999982" fill="#1a7fc4"/><line x1="1196.76" y1="216.99" x2="1202.06" y2="216.99" stroke="#fff" stroke-width="0.8"/><circle cx="1202.06" cy="216.99" r="0.9" fill="#fff"/><line x1="1195.62" y1="219.76" x2="1199.36" y2="223.50" stroke="#fff" stroke-width="0.8"/><circle cx="1199.36" cy="223.50" r="0.9" fill="#fff"/><line x1="1192.85" y1="220.90" x2="1192.85" y2="226.20" stroke="#fff" stroke-width="0.8"/><circle cx="1192.85" cy="226.20" r="0.9" fill="#fff"/><line x1="1190.08" y1="219.76" x2="1186.34" y2="223.50" stroke="#fff" stroke-width="0.8"/><circle cx="1186.34" cy="223.50" r="0.9" fill="#fff"/><line x1="1188.94" y1="216.99" x2="1183.64" y2="216.99" stroke="#fff" stroke-width="0.8"/><circle cx="1183.64" cy="216.99" r="0.9" fill="#fff"/><line x1="1190.08" y1="214.22" x2="1186.34" y2="210.48" stroke="#fff" stroke-width="0.8"/><circle cx="1186.34" cy="210.48" r="0.9" fill="#fff"/><line x1="1192.85" y1="213.08" x2="1192.85" y2="207.78" stroke="#fff" stroke-width="0.8"/><circle cx="1192.85" cy="207.78" r="0.9" fill="#fff"/><line x1="1195.62" y1="214.22" x2="1199.36" y2="210.48" stroke="#fff" stroke-width="0.8"/><circle cx="1199.36" cy="210.48" r="0.9" fill="#fff"/><circle cx="1192.85" cy="216.99" r="3.9133999999999998" fill="#ff0000"/>
<rect x="1175.1" y="230.4" width="37.8" height="8.4" fill="#f2f6f6" opacity="0.92"/>
<text transform="translate(1194,236.2) scale(0.9,1)" font-family="Liberation Sans, sans-serif" font-size="4.4" text-anchor="middle" fill="#3a3a3a">Testing Lab Core</text>
<path d="M1182.4 272.68 L1185.0 270.6 L1208.0 270.6 L1205.4 272.68 Z" fill="#2a8ad0"/><path d="M1205.4 272.68 L1208.0 270.6 L1208.0 294.12 L1205.4 296.2 Z" fill="#0f5d99"/><rect x="1182.4" y="272.68" width="23.0" height="23.519999999999982" fill="#1a7fc4"/><line x1="1197.90" y1="284.44" x2="1203.31" y2="284.44" stroke="#fff" stroke-width="0.8"/><circle cx="1203.31" cy="284.44" r="0.9" fill="#fff"/><line x1="1196.73" y1="287.27" x2="1200.55" y2="291.09" stroke="#fff" stroke-width="0.8"/><circle cx="1200.55" cy="291.09" r="0.9" fill="#fff"/><line x1="1193.90" y1="288.44" x2="1193.90" y2="293.85" stroke="#fff" stroke-width="0.8"/><circle cx="1193.90" cy="293.85" r="0.9" fill="#fff"/><line x1="1191.07" y1="287.27" x2="1187.25" y2="291.09" stroke="#fff" stroke-width="0.8"/><circle cx="1187.25" cy="291.09" r="0.9" fill="#fff"/><line x1="1189.90" y1="284.44" x2="1184.49" y2="284.44" stroke="#fff" stroke-width="0.8"/><circle cx="1184.49" cy="284.44" r="0.9" fill="#fff"/><line x1="1191.07" y1="281.61" x2="1187.25" y2="277.79" stroke="#fff" stroke-width="0.8"/><circle cx="1187.25" cy="277.79" r="0.9" fill="#fff"/><line x1="1193.90" y1="280.44" x2="1193.90" y2="275.03" stroke="#fff" stroke-width="0.8"/><circle cx="1193.90" cy="275.03" r="0.9" fill="#fff"/><line x1="1196.73" y1="281.61" x2="1200.55" y2="277.79" stroke="#fff" stroke-width="0.8"/><circle cx="1200.55" cy="277.79" r="0.9" fill="#fff"/><circle cx="1193.9" cy="284.44" r="3.998399999999995" fill="#ff0000"/>
<rect x="1184.3" y="297.9" width="21.4" height="8.4" fill="#f2f6f6" opacity="0.92"/>
<text transform="translate(1195,303.7) scale(0.9,1)" font-family="Liberation Sans, sans-serif" font-size="4.4" text-anchor="middle" fill="#3a3a3a">R&amp;D Core</text>
<path d="M1183.5 342.47999999999996 L1186.1 340.4 L1208.8 340.4 L1206.2 342.47999999999996 Z" fill="#2a8ad0"/><path d="M1206.2 342.47999999999996 L1208.8 340.4 L1208.8 363.42 L1206.2 365.5 Z" fill="#0f5d99"/><rect x="1183.5" y="342.47999999999996" width="22.700000000000045" height="23.02000000000004" fill="#1a7fc4"/><line x1="1198.76" y1="353.99" x2="1204.06" y2="353.99" stroke="#fff" stroke-width="0.8"/><circle cx="1204.06" cy="353.99" r="0.9" fill="#fff"/><line x1="1197.62" y1="356.76" x2="1201.36" y2="360.50" stroke="#fff" stroke-width="0.8"/><circle cx="1201.36" cy="360.50" r="0.9" fill="#fff"/><line x1="1194.85" y1="357.90" x2="1194.85" y2="363.20" stroke="#fff" stroke-width="0.8"/><circle cx="1194.85" cy="363.20" r="0.9" fill="#fff"/><line x1="1192.08" y1="356.76" x2="1188.34" y2="360.50" stroke="#fff" stroke-width="0.8"/><circle cx="1188.34" cy="360.50" r="0.9" fill="#fff"/><line x1="1190.94" y1="353.99" x2="1185.64" y2="353.99" stroke="#fff" stroke-width="0.8"/><circle cx="1185.64" cy="353.99" r="0.9" fill="#fff"/><line x1="1192.08" y1="351.22" x2="1188.34" y2="347.48" stroke="#fff" stroke-width="0.8"/><circle cx="1188.34" cy="347.48" r="0.9" fill="#fff"/><line x1="1194.85" y1="350.08" x2="1194.85" y2="344.78" stroke="#fff" stroke-width="0.8"/><circle cx="1194.85" cy="344.78" r="0.9" fill="#fff"/><line x1="1197.62" y1="351.22" x2="1201.36" y2="347.48" stroke="#fff" stroke-width="0.8"/><circle cx="1201.36" cy="347.48" r="0.9" fill="#fff"/><circle cx="1194.85" cy="353.98999999999995" r="3.9134000000000047" fill="#ff0000"/>
<rect x="1179.15" y="367.4" width="33.699999999999996" height="8.4" fill="#f2f6f6" opacity="0.92"/>
<text transform="translate(1196,373.2) scale(0.9,1)" font-family="Liberation Sans, sans-serif" font-size="4.4" text-anchor="middle" fill="#3a3a3a">Packaging Core</text>
<path d="M1182.4 407.47999999999996 L1185.0 405.4 L1208.0 405.4 L1205.4 407.47999999999996 Z" fill="#2a8ad0"/><path d="M1205.4 407.47999999999996 L1208.0 405.4 L1208.0 428.92 L1205.4 431 Z" fill="#0f5d99"/><rect x="1182.4" y="407.47999999999996" width="23.0" height="23.52000000000004" fill="#1a7fc4"/><line x1="1197.90" y1="419.24" x2="1203.31" y2="419.24" stroke="#fff" stroke-width="0.8"/><circle cx="1203.31" cy="419.24" r="0.9" fill="#fff"/><line x1="1196.73" y1="422.07" x2="1200.55" y2="425.89" stroke="#fff" stroke-width="0.8"/><circle cx="1200.55" cy="425.89" r="0.9" fill="#fff"/><line x1="1193.90" y1="423.24" x2="1193.90" y2="428.65" stroke="#fff" stroke-width="0.8"/><circle cx="1193.90" cy="428.65" r="0.9" fill="#fff"/><line x1="1191.07" y1="422.07" x2="1187.25" y2="425.89" stroke="#fff" stroke-width="0.8"/><circle cx="1187.25" cy="425.89" r="0.9" fill="#fff"/><line x1="1189.90" y1="419.24" x2="1184.49" y2="419.24" stroke="#fff" stroke-width="0.8"/><circle cx="1184.49" cy="419.24" r="0.9" fill="#fff"/><line x1="1191.07" y1="416.41" x2="1187.25" y2="412.59" stroke="#fff" stroke-width="0.8"/><circle cx="1187.25" cy="412.59" r="0.9" fill="#fff"/><line x1="1193.90" y1="415.24" x2="1193.90" y2="409.83" stroke="#fff" stroke-width="0.8"/><circle cx="1193.90" cy="409.83" r="0.9" fill="#fff"/><line x1="1196.73" y1="416.41" x2="1200.55" y2="412.59" stroke="#fff" stroke-width="0.8"/><circle cx="1200.55" cy="412.59" r="0.9" fill="#fff"/><circle cx="1193.9" cy="419.23999999999995" r="3.9984000000000046" fill="#ff0000"/>
<rect x="1178.15" y="432.9" width="33.699999999999996" height="8.4" fill="#f2f6f6" opacity="0.92"/>
<text transform="translate(1195,438.7) scale(0.9,1)" font-family="Liberation Sans, sans-serif" font-size="4.4" text-anchor="middle" fill="#3a3a3a">Warehouse Core</text>
<path d="M1228.7 141 L1232.2 138.2 L1267.0 138.2 L1263.5 141 Z" fill="#2a8ad0"/><path d="M1263.5 141 L1267.0 138.2 L1267.0 151.7 L1263.5 154.5 Z" fill="#0f5d99"/><rect x="1228.7" y="141" width="34.799999999999955" height="13.5" fill="#1a7fc4"/><path d="M1232 148 c1.5 -4 3 -4 3.5 0 s2 4 3.5 0 c1.5 -4 3 -4 3.5 0 s2 4 3.5 0 c1.5 -4 3 -4 3.5 0 s2 4 3.5 0 c1.5 -4 3 -4 3.5 0 s2 4 3.5 0 " fill="none" stroke="#fff" stroke-width="0.9"/>
<rect x="1230.8500000000001" y="156.4" width="33.699999999999996" height="8.4" fill="#f2f6f6" opacity="0.92"/>
<text transform="translate(1247.7,162.2) scale(0.9,1)" font-family="Liberation Sans, sans-serif" font-size="4.4" text-anchor="middle" fill="#3a3a3a">WLC Controller</text>
<path d="M1231.8 273 L1234.3 271.0 L1249.0 271.0 L1246.5 273 Z" fill="#2a8ad0"/><path d="M1246.5 273 L1249.0 271.0 L1249.0 293.5 L1246.5 295.5 Z" fill="#0f5d99"/><rect x="1231.8" y="273" width="14.700000000000045" height="22.5" fill="#1a7fc4"/><rect x="1233.5" y="276" width="4" height="4" fill="#dfe8f0"/><rect x="1239.5" y="276" width="4" height="4" fill="#dfe8f0"/><rect x="1233.5" y="282" width="4" height="4" fill="#dfe8f0"/><rect x="1239.5" y="282" width="4" height="4" fill="#dfe8f0"/><rect x="1233.5" y="288" width="4" height="4" fill="#dfe8f0"/><rect x="1239.5" y="288" width="4" height="4" fill="#dfe8f0"/>
<rect x="1226.725" y="297.9" width="27.549999999999997" height="8.4" fill="#f2f6f6" opacity="0.92"/>
<text transform="translate(1240.5,303.7) scale(0.9,1)" font-family="Liberation Sans, sans-serif" font-size="4.4" text-anchor="middle" fill="#3a3a3a">R&amp;D Storage</text>
</svg><svg class="a" style="left:1px;top:471px" width="634" height="382" viewBox="1 471 634 382">
<defs><g id="rkA"><rect x="0" y="0" width="84" height="276" fill="#7b7b7b"/><rect x="0" y="0" width="84" height="6.5" fill="#8f8f8f"/><rect x="6.5" y="0.8" width="71" height="5" fill="#9a9a9a"/><rect x="0.5" y="6.5" width="6" height="261" fill="#858585"/><rect x="0.9" y="7.30" width="5.2" height="4.4" fill="#b2b2b2"/><rect x="1.6" y="8.80" width="3.8" height="1.4" fill="#d8d8d8"/><rect x="0.9" y="13.63" width="5.2" height="4.4" fill="#b2b2b2"/><rect x="1.6" y="15.13" width="3.8" height="1.4" fill="#d8d8d8"/><rect x="0.9" y="19.96" width="5.2" height="4.4" fill="#b2b2b2"/><rect x="1.6" y="21.46" width="3.8" height="1.4" fill="#d8d8d8"/><rect x="0.9" y="26.29" width="5.2" height="4.4" fill="#b2b2b2"/><rect x="1.6" y="27.79" width="3.8" height="1.4" fill="#d8d8d8"/><rect x="0.9" y="32.62" width="5.2" height="4.4" fill="#b2b2b2"/><rect x="1.6" y="34.12" width="3.8" height="1.4" fill="#d8d8d8"/><rect x="0.9" y="38.95" width="5.2" height="4.4" fill="#b2b2b2"/><rect x="1.6" y="40.45" width="3.8" height="1.4" fill="#d8d8d8"/><rect x="0.9" y="45.28" width="5.2" height="4.4" fill="#b2b2b2"/><rect x="1.6" y="46.78" width="3.8" height="1.4" fill="#d8d8d8"/><rect x="0.9" y="51.61" width="5.2" height="4.4" fill="#b2b2b2"/><rect x="1.6" y="53.11" width="3.8" height="1.4" fill="#d8d8d8"/><rect x="0.9" y="57.94" width="5.2" height="4.4" fill="#b2b2b2"/><rect x="1.6" y="59.44" width="3.8" height="1.4" fill="#d8d8d8"/><rect x="0.9" y="64.27" width="5.2" height="4.4" fill="#b2b2b2"/><rect x="1.6" y="65.77" width="3.8" height="1.4" fill="#d8d8d8"/><rect x="0.9" y="70.60" width="5.2" height="4.4" fill="#b2b2b2"/><rect x="1.6" y="72.10" width="3.8" height="1.4" fill="#d8d8d8"/><rect x="0.9" y="76.93" width="5.2" height="4.4" fill="#b2b2b2"/><rect x="1.6" y="78.43" width="3.8" height="1.4" fill="#d8d8d8"/><rect x="0.9" y="83.26" width="5.2" height="4.4" fill="#b2b2b2"/><rect x="1.6" y="84.76" width="3.8" height="1.4" fill="#d8d8d8"/><rect x="0.9" y="89.59" width="5.2" height="4.4" fill="#b2b2b2"/><rect x="1.6" y="91.09" width="3.8" height="1.4" fill="#d8d8d8"/><rect x="0.9" y="95.92" width="5.2" height="4.4" fill="#b2b2b2"/><rect x="1.6" y="97.42" width="3.8" height="1.4" fill="#d8d8d8"/><rect x="0.9" y="102.25" width="5.2" height="4.4" fill="#b2b2b2"/><rect x="1.6" y="103.75" width="3.8" height="1.4" fill="#d8d8d8"/><rect x="0.9" y="108.58" width="5.2" height="4.4" fill="#b2b2b2"/><rect x="1.6" y="110.08" width="3.8" height="1.4" fill="#d8d8d8"/><rect x="0.9" y="114.91" width="5.2" height="4.4" fill="#b2b2b2"/><rect x="1.6" y="116.41" width="3.8" height="1.4" fill="#d8d8d8"/><rect x="0.9" y="121.24" width="5.2" height="4.4" fill="#b2b2b2"/><rect x="1.6" y="122.74" width="3.8" height="1.4" fill="#d8d8d8"/><rect x="0.9" y="127.57" width="5.2" height="4.4" fill="#b2b2b2"/><rect x="1.6" y="129.07" width="3.8" height="1.4" fill="#d8d8d8"/><rect x="0.9" y="133.90" width="5.2" height="4.4" fill="#b2b2b2"/><rect x="1.6" y="135.40" width="3.8" height="1.4" fill="#d8d8d8"/><rect x="0.9" y="140.23" width="5.2" height="4.4" fill="#b2b2b2"/><rect x="1.6" y="141.73" width="3.8" height="1.4" fill="#d8d8d8"/><rect x="0.9" y="146.56" width="5.2" height="4.4" fill="#b2b2b2"/><rect x="1.6" y="148.06" width="3.8" height="1.4" fill="#d8d8d8"/><rect x="0.9" y="152.89" width="5.2" height="4.4" fill="#b2b2b2"/><rect x="1.6" y="154.39" width="3.8" height="1.4" fill="#d8d8d8"/><rect x="0.9" y="159.22" width="5.2" height="4.4" fill="#b2b2b2"/><rect x="1.6" y="160.72" width="3.8" height="1.4" fill="#d8d8d8"/><rect x="0.9" y="165.55" width="5.2" height="4.4" fill="#b2b2b2"/><rect x="1.6" y="167.05" width="3.8" height="1.4" fill="#d8d8d8"/><rect x="0.9" y="171.88" width="5.2" height="4.4" fill="#b2b2b2"/><rect x="1.6" y="173.38" width="3.8" height="1.4" fill="#d8d8d8"/><rect x="0.9" y="178.21" width="5.2" height="4.4" fill="#b2b2b2"/><rect x="1.6" y="179.71" width="3.8" height="1.4" fill="#d8d8d8"/><rect x="0.9" y="184.54" width="5.2" height="4.4" fill="#b2b2b2"/><rect x="1.6" y="186.04" width="3.8" height="1.4" fill="#d8d8d8"/><rect x="0.9" y="190.87" width="5.2" height="4.4" fill="#b2b2b2"/><rect x="1.6" y="192.37" width="3.8" height="1.4" fill="#d8d8d8"/><rect x="0.9" y="197.20" width="5.2" height="4.4" fill="#b2b2b2"/><rect x="1.6" y="198.70" width="3.8" height="1.4" fill="#d8d8d8"/><rect x="0.9" y="203.53" width="5.2" height="4.4" fill="#b2b2b2"/><rect x="1.6" y="205.03" width="3.8" height="1.4" fill="#d8d8d8"/><rect x="0.9" y="209.86" width="5.2" height="4.4" fill="#b2b2b2"/><rect x="1.6" y="211.36" width="3.8" height="1.4" fill="#d8d8d8"/><rect x="0.9" y="216.19" width="5.2" height="4.4" fill="#b2b2b2"/><rect x="1.6" y="217.69" width="3.8" height="1.4" fill="#d8d8d8"/><rect x="0.9" y="222.52" width="5.2" height="4.4" fill="#b2b2b2"/><rect x="1.6" y="224.02" width="3.8" height="1.4" fill="#d8d8d8"/><rect x="0.9" y="228.85" width="5.2" height="4.4" fill="#b2b2b2"/><rect x="1.6" y="230.35" width="3.8" height="1.4" fill="#d8d8d8"/><rect x="0.9" y="235.18" width="5.2" height="4.4" fill="#b2b2b2"/><rect x="1.6" y="236.68" width="3.8" height="1.4" fill="#d8d8d8"/><rect x="0.9" y="241.51" width="5.2" height="4.4" fill="#b2b2b2"/><rect x="1.6" y="243.01" width="3.8" height="1.4" fill="#d8d8d8"/><rect x="0.9" y="247.84" width="5.2" height="4.4" fill="#b2b2b2"/><rect x="1.6" y="249.34" width="3.8" height="1.4" fill="#d8d8d8"/><rect x="0.9" y="254.17" width="5.2" height="4.4" fill="#b2b2b2"/><rect x="1.6" y="255.67" width="3.8" height="1.4" fill="#d8d8d8"/><rect x="0.9" y="260.50" width="5.2" height="4.4" fill="#b2b2b2"/><rect x="1.6" y="262.00" width="3.8" height="1.4" fill="#d8d8d8"/><rect x="0.9" y="266.83" width="5.2" height="4.4" fill="#b2b2b2"/><rect x="1.6" y="268.33" width="3.8" height="1.4" fill="#d8d8d8"/><rect x="6.5" y="6.5" width="1.8" height="261" fill="#d8d8d8"/><rect x="76" y="6.5" width="1.8" height="261" fill="#d8d8d8"/><rect x="8.3" y="6.5" width="67.7" height="261" fill="#484848"/><rect x="9" y="7" width="66" height="5.5" fill="#5a5a5a"/><rect x="11" y="8.3" width="62" height="3" fill="#a8a8a8"/><rect x="9" y="12.5" width="66" height="8" fill="#6a6a6a"/><rect x="17.0" y="14.0" width="1.6" height="4" fill="#9b9b9b"/><rect x="30.5" y="14.0" width="1.6" height="4" fill="#9b9b9b"/><rect x="44.0" y="14.0" width="1.6" height="4" fill="#9b9b9b"/><rect x="57.5" y="14.0" width="1.6" height="4" fill="#9b9b9b"/><rect x="9" y="20.5" width="66" height="6" fill="#5d5d5d"/><rect x="11" y="21.8" width="55" height="3.4" fill="#b5b5b5"/><rect x="11" y="21.8" width="1.2" height="3.4" fill="#707070"/><rect x="22" y="21.8" width="1.2" height="3.4" fill="#707070"/><rect x="33" y="21.8" width="1.2" height="3.4" fill="#707070"/><rect x="44" y="21.8" width="1.2" height="3.4" fill="#707070"/><rect x="55" y="21.8" width="1.2" height="3.4" fill="#707070"/><rect x="67" y="21.8" width="6" height="3.4" fill="#cfcfcf"/><rect x="9" y="26.5" width="66" height="6" fill="#6a6a6a"/><rect x="17.0" y="28.0" width="1.6" height="3" fill="#9b9b9b"/><rect x="30.5" y="28.0" width="1.6" height="3" fill="#9b9b9b"/><rect x="44.0" y="28.0" width="1.6" height="3" fill="#9b9b9b"/><rect x="57.5" y="28.0" width="1.6" height="3" fill="#9b9b9b"/><rect x="9" y="32.5" width="66" height="6" fill="#5d5d5d"/><rect x="11" y="33.8" width="55" height="3.4" fill="#b5b5b5"/><rect x="11" y="33.8" width="1.2" height="3.4" fill="#707070"/><rect x="22" y="33.8" width="1.2" height="3.4" fill="#707070"/><rect x="33" y="33.8" width="1.2" height="3.4" fill="#707070"/><rect x="44" y="33.8" width="1.2" height="3.4" fill="#707070"/><rect x="55" y="33.8" width="1.2" height="3.4" fill="#707070"/><rect x="67" y="33.8" width="6" height="3.4" fill="#cfcfcf"/><rect x="9" y="38.5" width="66" height="6" fill="#6a6a6a"/><rect x="17.0" y="40.0" width="1.6" height="3" fill="#9b9b9b"/><rect x="30.5" y="40.0" width="1.6" height="3" fill="#9b9b9b"/><rect x="44.0" y="40.0" width="1.6" height="3" fill="#9b9b9b"/><rect x="57.5" y="40.0" width="1.6" height="3" fill="#9b9b9b"/><rect x="9" y="44.5" width="66" height="60" fill="#4e4e4e"/><rect x="34" y="49" width="16" height="5" fill="none" stroke="#888" stroke-width="1"/><rect x="12.9" y="54.5" width="58.6" height="49.2" fill="#c6c1bb"/><defs><linearGradient id="scr" x1="0" y1="1" x2="1" y2="0"><stop offset="0" stop-color="#3f93dc"/><stop offset="1" stop-color="#0848a6"/></linearGradient></defs><rect x="14.7" y="56.2" width="55" height="43.5" fill="url(#scr)"/><rect x="30" y="100.5" width="24" height="2" fill="#9a958f"/><rect x="9" y="104.6" width="66" height="4.5" fill="#5c5c5c"/><rect x="11" y="105.6" width="62" height="2.2" fill="#9c9c9c"/><rect x="9" y="109.1" width="66" height="6.5" fill="#5a5a5a"/><rect x="14" y="111" width="8" height="2.5" fill="#3cb0a0"/><rect x="40" y="111" width="32" height="2.5" fill="#9a9a9a"/><rect x="34" y="109.8" width="6" height="1.5" fill="#c8b050"/><rect x="9" y="116.5" width="66" height="6" fill="#505050"/><rect x="9" y="116.5" width="66" height="0.8" fill="#777"/><rect x="12" y="118.1" width="12" height="2.8" rx="0.8" fill="#9c9c9c"/><rect x="24.3" y="117.7" width="1.6" height="3.6" fill="#2a2a2a"/><rect x="27" y="118.1" width="12" height="2.8" rx="0.8" fill="#9c9c9c"/><rect x="39.3" y="117.7" width="1.6" height="3.6" fill="#2a2a2a"/><rect x="42" y="118.1" width="12" height="2.8" rx="0.8" fill="#9c9c9c"/><rect x="54.3" y="117.7" width="1.6" height="3.6" fill="#2a2a2a"/><rect x="57" y="118.1" width="12" height="2.8" rx="0.8" fill="#9c9c9c"/><rect x="69.3" y="117.7" width="1.6" height="3.6" fill="#2a2a2a"/><rect x="9" y="122.8" width="66" height="6" fill="#505050"/><rect x="9" y="122.8" width="66" height="0.8" fill="#777"/><rect x="12" y="124.39999999999999" width="12" height="2.8" rx="0.8" fill="#9c9c9c"/><rect x="24.3" y="124.0" width="1.6" height="3.6" fill="#2a2a2a"/><rect x="27" y="124.39999999999999" width="12" height="2.8" rx="0.8" fill="#9c9c9c"/><rect x="39.3" y="124.0" width="1.6" height="3.6" fill="#2a2a2a"/><rect x="42" y="124.39999999999999" width="12" height="2.8" rx="0.8" fill="#9c9c9c"/><rect x="54.3" y="124.0" width="1.6" height="3.6" fill="#2a2a2a"/><rect x="57" y="124.39999999999999" width="12" height="2.8" rx="0.8" fill="#9c9c9c"/><rect x="69.3" y="124.0" width="1.6" height="3.6" fill="#2a2a2a"/><rect x="9" y="129.1" width="66" height="6" fill="#505050"/><rect x="9" y="129.1" width="66" height="0.8" fill="#777"/><rect x="12" y="130.7" width="12" height="2.8" rx="0.8" fill="#9c9c9c"/><rect x="24.3" y="130.29999999999998" width="1.6" height="3.6" fill="#2a2a2a"/><rect x="27" y="130.7" width="12" height="2.8" rx="0.8" fill="#9c9c9c"/><rect x="39.3" y="130.29999999999998" width="1.6" height="3.6" fill="#2a2a2a"/><rect x="42" y="130.7" width="12" height="2.8" rx="0.8" fill="#9c9c9c"/><rect x="54.3" y="130.29999999999998" width="1.6" height="3.6" fill="#2a2a2a"/><rect x="57" y="130.7" width="12" height="2.8" rx="0.8" fill="#9c9c9c"/><rect x="69.3" y="130.29999999999998" width="1.6" height="3.6" fill="#2a2a2a"/><rect x="9" y="135.4" width="66" height="6" fill="#505050"/><rect x="9" y="135.4" width="66" height="0.8" fill="#777"/><rect x="12" y="137.0" width="12" height="2.8" rx="0.8" fill="#9c9c9c"/><rect x="24.3" y="136.6" width="1.6" height="3.6" fill="#2a2a2a"/><rect x="27" y="137.0" width="12" height="2.8" rx="0.8" fill="#9c9c9c"/><rect x="39.3" y="136.6" width="1.6" height="3.6" fill="#2a2a2a"/><rect x="42" y="137.0" width="12" height="2.8" rx="0.8" fill="#9c9c9c"/><rect x="54.3" y="136.6" width="1.6" height="3.6" fill="#2a2a2a"/><rect x="57" y="137.0" width="12" height="2.8" rx="0.8" fill="#9c9c9c"/><rect x="69.3" y="136.6" width="1.6" height="3.6" fill="#2a2a2a"/><rect x="9" y="142.5" width="66" height="19" fill="#555"/><rect x="9" y="142.5" width="66" height="1" fill="#7a7a7a"/><rect x="11" y="144.0" width="2" height="1.5" fill="#222"/><rect x="12" y="145.50" width="12" height="2.33" fill="#a2a2a2"/><rect x="27" y="145.50" width="12" height="2.33" fill="#a2a2a2"/><rect x="42" y="145.50" width="12" height="2.33" fill="#a2a2a2"/><rect x="57" y="145.50" width="12" height="2.33" fill="#a2a2a2"/><rect x="12" y="149.25" width="12" height="2.33" fill="#a2a2a2"/><rect x="27" y="149.25" width="12" height="2.33" fill="#a2a2a2"/><rect x="42" y="149.25" width="12" height="2.33" fill="#a2a2a2"/><rect x="57" y="149.25" width="12" height="2.33" fill="#a2a2a2"/><rect x="12" y="153.00" width="12" height="2.33" fill="#a2a2a2"/><rect x="27" y="153.00" width="12" height="2.33" fill="#a2a2a2"/><rect x="42" y="153.00" width="12" height="2.33" fill="#a2a2a2"/><rect x="57" y="153.00" width="12" height="2.33" fill="#a2a2a2"/><rect x="12" y="156.75" width="12" height="2.33" fill="#a2a2a2"/><rect x="27" y="156.75" width="12" height="2.33" fill="#a2a2a2"/><rect x="42" y="156.75" width="12" height="2.33" fill="#a2a2a2"/><rect x="57" y="156.75" width="12" height="2.33" fill="#a2a2a2"/><rect x="24.3" y="145.0" width="1.8" height="15.5" fill="#262626"/><rect x="39.3" y="145.0" width="1.8" height="15.5" fill="#262626"/><rect x="54.3" y="145.0" width="1.8" height="15.5" fill="#262626"/><rect x="69.3" y="145.0" width="1.8" height="15.5" fill="#262626"/><rect x="9" y="162.5" width="66" height="11.5" fill="#555"/><rect x="9" y="162.5" width="66" height="1" fill="#7a7a7a"/><rect x="11" y="164.0" width="2" height="1.5" fill="#222"/><rect x="12" y="165.50" width="12" height="2.33" fill="#a2a2a2"/><rect x="27" y="165.50" width="12" height="2.33" fill="#a2a2a2"/><rect x="42" y="165.50" width="12" height="2.33" fill="#a2a2a2"/><rect x="57" y="165.50" width="12" height="2.33" fill="#a2a2a2"/><rect x="12" y="169.25" width="12" height="2.33" fill="#a2a2a2"/><rect x="27" y="169.25" width="12" height="2.33" fill="#a2a2a2"/><rect x="42" y="169.25" width="12" height="2.33" fill="#a2a2a2"/><rect x="57" y="169.25" width="12" height="2.33" fill="#a2a2a2"/><rect x="24.3" y="165.0" width="1.8" height="8.0" fill="#262626"/><rect x="39.3" y="165.0" width="1.8" height="8.0" fill="#262626"/><rect x="54.3" y="165.0" width="1.8" height="8.0" fill="#262626"/><rect x="69.3" y="165.0" width="1.8" height="8.0" fill="#262626"/><rect x="9" y="174.7" width="66" height="11.5" fill="#555"/><rect x="9" y="174.7" width="66" height="1" fill="#7a7a7a"/><rect x="11" y="176.2" width="2" height="1.5" fill="#222"/><rect x="12" y="177.70" width="12" height="2.33" fill="#a2a2a2"/><rect x="27" y="177.70" width="12" height="2.33" fill="#a2a2a2"/><rect x="42" y="177.70" width="12" height="2.33" fill="#a2a2a2"/><rect x="57" y="177.70" width="12" height="2.33" fill="#a2a2a2"/><rect x="12" y="181.45" width="12" height="2.33" fill="#a2a2a2"/><rect x="27" y="181.45" width="12" height="2.33" fill="#a2a2a2"/><rect x="42" y="181.45" width="12" height="2.33" fill="#a2a2a2"/><rect x="57" y="181.45" width="12" height="2.33" fill="#a2a2a2"/><rect x="24.3" y="177.2" width="1.8" height="8.0" fill="#262626"/><rect x="39.3" y="177.2" width="1.8" height="8.0" fill="#262626"/><rect x="54.3" y="177.2" width="1.8" height="8.0" fill="#262626"/><rect x="69.3" y="177.2" width="1.8" height="8.0" fill="#262626"/><rect x="9" y="186.9" width="66" height="11.5" fill="#555"/><rect x="9" y="186.9" width="66" height="1" fill="#7a7a7a"/><rect x="11" y="188.4" width="2" height="1.5" fill="#222"/><rect x="12" y="189.90" width="12" height="2.33" fill="#a2a2a2"/><rect x="27" y="189.90" width="12" height="2.33" fill="#a2a2a2"/><rect x="42" y="189.90" width="12" height="2.33" fill="#a2a2a2"/><rect x="57" y="189.90" width="12" height="2.33" fill="#a2a2a2"/><rect x="12" y="193.65" width="12" height="2.33" fill="#a2a2a2"/><rect x="27" y="193.65" width="12" height="2.33" fill="#a2a2a2"/><rect x="42" y="193.65" width="12" height="2.33" fill="#a2a2a2"/><rect x="57" y="193.65" width="12" height="2.33" fill="#a2a2a2"/><rect x="24.3" y="189.4" width="1.8" height="8.0" fill="#262626"/><rect x="39.3" y="189.4" width="1.8" height="8.0" fill="#262626"/><rect x="54.3" y="189.4" width="1.8" height="8.0" fill="#262626"/><rect x="69.3" y="189.4" width="1.8" height="8.0" fill="#262626"/><rect x="9" y="199.1" width="66" height="11.5" fill="#555"/><rect x="9" y="199.1" width="66" height="1" fill="#7a7a7a"/><rect x="11" y="200.6" width="2" height="1.5" fill="#222"/><rect x="12" y="202.10" width="12" height="2.33" fill="#a2a2a2"/><rect x="27" y="202.10" width="12" height="2.33" fill="#a2a2a2"/><rect x="42" y="202.10" width="12" height="2.33" fill="#a2a2a2"/><rect x="57" y="202.10" width="12" height="2.33" fill="#a2a2a2"/><rect x="12" y="205.85" width="12" height="2.33" fill="#a2a2a2"/><rect x="27" y="205.85" width="12" height="2.33" fill="#a2a2a2"/><rect x="42" y="205.85" width="12" height="2.33" fill="#a2a2a2"/><rect x="57" y="205.85" width="12" height="2.33" fill="#a2a2a2"/><rect x="24.3" y="201.6" width="1.8" height="8.0" fill="#262626"/><rect x="39.3" y="201.6" width="1.8" height="8.0" fill="#262626"/><rect x="54.3" y="201.6" width="1.8" height="8.0" fill="#262626"/><rect x="69.3" y="201.6" width="1.8" height="8.0" fill="#262626"/><rect x="9" y="211" width="66" height="18" fill="#5a5a5a"/><rect x="11.0" y="212.2" width="14" height="3.2" rx="0.8" fill="#a9a9a9"/><rect x="26.8" y="212.2" width="14" height="3.2" rx="0.8" fill="#a9a9a9"/><rect x="42.6" y="212.2" width="14" height="3.2" rx="0.8" fill="#a9a9a9"/><rect x="58.400000000000006" y="212.2" width="14" height="3.2" rx="0.8" fill="#a9a9a9"/><rect x="11.0" y="216.39999999999998" width="14" height="3.2" rx="0.8" fill="#a9a9a9"/><rect x="26.8" y="216.39999999999998" width="14" height="3.2" rx="0.8" fill="#a9a9a9"/><rect x="42.6" y="216.39999999999998" width="14" height="3.2" rx="0.8" fill="#a9a9a9"/><rect x="58.400000000000006" y="216.39999999999998" width="14" height="3.2" rx="0.8" fill="#a9a9a9"/><rect x="11.0" y="220.6" width="14" height="3.2" rx="0.8" fill="#a9a9a9"/><rect x="26.8" y="220.6" width="14" height="3.2" rx="0.8" fill="#a9a9a9"/><rect x="42.6" y="220.6" width="14" height="3.2" rx="0.8" fill="#a9a9a9"/><rect x="58.400000000000006" y="220.6" width="14" height="3.2" rx="0.8" fill="#a9a9a9"/><rect x="11.0" y="224.79999999999998" width="14" height="3.2" rx="0.8" fill="#a9a9a9"/><rect x="26.8" y="224.79999999999998" width="14" height="3.2" rx="0.8" fill="#a9a9a9"/><rect x="42.6" y="224.79999999999998" width="14" height="3.2" rx="0.8" fill="#a9a9a9"/><rect x="58.400000000000006" y="224.79999999999998" width="14" height="3.2" rx="0.8" fill="#a9a9a9"/><rect x="59" y="212.5" width="11" height="2" fill="#5cc0f0"/><rect x="9" y="229.5" width="66" height="12.5" fill="#2e2e2e"/><rect x="12.0" y="231.0" width="12.5" height="2.4" fill="#8a8a8a"/><rect x="27.8" y="231.0" width="12.5" height="2.4" fill="#8a8a8a"/><rect x="43.6" y="231.0" width="12.5" height="2.4" fill="#8a8a8a"/><rect x="59.400000000000006" y="231.0" width="12.5" height="2.4" fill="#8a8a8a"/><rect x="12.0" y="234.8" width="12.5" height="2.4" fill="#8a8a8a"/><rect x="27.8" y="234.8" width="12.5" height="2.4" fill="#8a8a8a"/><rect x="43.6" y="234.8" width="12.5" height="2.4" fill="#8a8a8a"/><rect x="59.400000000000006" y="234.8" width="12.5" height="2.4" fill="#8a8a8a"/><rect x="12.0" y="238.6" width="12.5" height="2.4" fill="#8a8a8a"/><rect x="27.8" y="238.6" width="12.5" height="2.4" fill="#8a8a8a"/><rect x="43.6" y="238.6" width="12.5" height="2.4" fill="#8a8a8a"/><rect x="59.400000000000006" y="238.6" width="12.5" height="2.4" fill="#8a8a8a"/><rect x="8.3" y="242" width="67.7" height="20" fill="#c2c2c2"/><rect x="12" y="245" width="13" height="14" fill="#6b6b6b"/><rect x="28" y="247" width="8" height="11" fill="#888"/><rect x="40.0" y="245" width="3.5" height="5" fill="#3a3a3a"/><rect x="46.5" y="245" width="3.5" height="5" fill="#3a3a3a"/><rect x="53.0" y="245" width="3.5" height="5" fill="#3a3a3a"/><rect x="59.5" y="245" width="3.5" height="5" fill="#3a3a3a"/><rect x="66.0" y="245" width="3.5" height="5" fill="#3a3a3a"/><rect x="40.0" y="253" width="5.5" height="4" fill="#444"/><rect x="46.5" y="253" width="5.5" height="4" fill="#444"/><rect x="53.0" y="253" width="5.5" height="4" fill="#444"/><rect x="59.5" y="253" width="5.5" height="4" fill="#444"/><rect x="66.0" y="253" width="5.5" height="4" fill="#444"/><rect x="8.3" y="262" width="67.7" height="5.5" fill="#e6e6e6"/><rect x="11.0" y="263.5" width="2" height="2.5" fill="#777"/><rect x="15.3" y="263.5" width="2" height="2.5" fill="#777"/><rect x="19.6" y="263.5" width="2" height="2.5" fill="#777"/><rect x="23.9" y="263.5" width="2" height="2.5" fill="#777"/><rect x="28.2" y="263.5" width="2" height="2.5" fill="#777"/><rect x="32.5" y="263.5" width="2" height="2.5" fill="#777"/><rect x="36.8" y="263.5" width="2" height="2.5" fill="#777"/><rect x="41.099999999999994" y="263.5" width="2" height="2.5" fill="#777"/><rect x="45.4" y="263.5" width="2" height="2.5" fill="#777"/><rect x="49.699999999999996" y="263.5" width="2" height="2.5" fill="#777"/><rect x="54.0" y="263.5" width="2" height="2.5" fill="#777"/><rect x="58.3" y="263.5" width="2" height="2.5" fill="#777"/><rect x="62.599999999999994" y="263.5" width="2" height="2.5" fill="#777"/><rect x="66.9" y="263.5" width="2" height="2.5" fill="#777"/><rect x="69" y="263.3" width="5" height="3" fill="#e02020"/><rect x="0" y="267.5" width="84" height="9" fill="#7a7a7a"/><rect x="6.5" y="268" width="71" height="6.5" fill="#8c8c8c"/><rect x="0.5" y="276" width="6" height="2.5" fill="#2a2a2a"/><rect x="77.5" y="276" width="6" height="2.5" fill="#2a2a2a"/></g><g id="rkB"><rect x="0" y="0" width="84" height="276" fill="#7b7b7b"/><rect x="0" y="0" width="84" height="6.5" fill="#8f8f8f"/><rect x="6.5" y="0.8" width="71" height="5" fill="#9a9a9a"/><rect x="0.5" y="6.5" width="6" height="261" fill="#858585"/><rect x="0.9" y="7.30" width="5.2" height="4.4" fill="#b2b2b2"/><rect x="1.6" y="8.80" width="3.8" height="1.4" fill="#d8d8d8"/><rect x="0.9" y="13.63" width="5.2" height="4.4" fill="#b2b2b2"/><rect x="1.6" y="15.13" width="3.8" height="1.4" fill="#d8d8d8"/><rect x="0.9" y="19.96" width="5.2" height="4.4" fill="#b2b2b2"/><rect x="1.6" y="21.46" width="3.8" height="1.4" fill="#d8d8d8"/><rect x="0.9" y="26.29" width="5.2" height="4.4" fill="#b2b2b2"/><rect x="1.6" y="27.79" width="3.8" height="1.4" fill="#d8d8d8"/><rect x="0.9" y="32.62" width="5.2" height="4.4" fill="#b2b2b2"/><rect x="1.6" y="34.12" width="3.8" height="1.4" fill="#d8d8d8"/><rect x="0.9" y="38.95" width="5.2" height="4.4" fill="#b2b2b2"/><rect x="1.6" y="40.45" width="3.8" height="1.4" fill="#d8d8d8"/><rect x="0.9" y="45.28" width="5.2" height="4.4" fill="#b2b2b2"/><rect x="1.6" y="46.78" width="3.8" height="1.4" fill="#d8d8d8"/><rect x="0.9" y="51.61" width="5.2" height="4.4" fill="#b2b2b2"/><rect x="1.6" y="53.11" width="3.8" height="1.4" fill="#d8d8d8"/><rect x="0.9" y="57.94" width="5.2" height="4.4" fill="#b2b2b2"/><rect x="1.6" y="59.44" width="3.8" height="1.4" fill="#d8d8d8"/><rect x="0.9" y="64.27" width="5.2" height="4.4" fill="#b2b2b2"/><rect x="1.6" y="65.77" width="3.8" height="1.4" fill="#d8d8d8"/><rect x="0.9" y="70.60" width="5.2" height="4.4" fill="#b2b2b2"/><rect x="1.6" y="72.10" width="3.8" height="1.4" fill="#d8d8d8"/><rect x="0.9" y="76.93" width="5.2" height="4.4" fill="#b2b2b2"/><rect x="1.6" y="78.43" width="3.8" height="1.4" fill="#d8d8d8"/><rect x="0.9" y="83.26" width="5.2" height="4.4" fill="#b2b2b2"/><rect x="1.6" y="84.76" width="3.8" height="1.4" fill="#d8d8d8"/><rect x="0.9" y="89.59" width="5.2" height="4.4" fill="#b2b2b2"/><rect x="1.6" y="91.09" width="3.8" height="1.4" fill="#d8d8d8"/><rect x="0.9" y="95.92" width="5.2" height="4.4" fill="#b2b2b2"/><rect x="1.6" y="97.42" width="3.8" height="1.4" fill="#d8d8d8"/><rect x="0.9" y="102.25" width="5.2" height="4.4" fill="#b2b2b2"/><rect x="1.6" y="103.75" width="3.8" height="1.4" fill="#d8d8d8"/><rect x="0.9" y="108.58" width="5.2" height="4.4" fill="#b2b2b2"/><rect x="1.6" y="110.08" width="3.8" height="1.4" fill="#d8d8d8"/><rect x="0.9" y="114.91" width="5.2" height="4.4" fill="#b2b2b2"/><rect x="1.6" y="116.41" width="3.8" height="1.4" fill="#d8d8d8"/><rect x="0.9" y="121.24" width="5.2" height="4.4" fill="#b2b2b2"/><rect x="1.6" y="122.74" width="3.8" height="1.4" fill="#d8d8d8"/><rect x="0.9" y="127.57" width="5.2" height="4.4" fill="#b2b2b2"/><rect x="1.6" y="129.07" width="3.8" height="1.4" fill="#d8d8d8"/><rect x="0.9" y="133.90" width="5.2" height="4.4" fill="#b2b2b2"/><rect x="1.6" y="135.40" width="3.8" height="1.4" fill="#d8d8d8"/><rect x="0.9" y="140.23" width="5.2" height="4.4" fill="#b2b2b2"/><rect x="1.6" y="141.73" width="3.8" height="1.4" fill="#d8d8d8"/><rect x="0.9" y="146.56" width="5.2" height="4.4" fill="#b2b2b2"/><rect x="1.6" y="148.06" width="3.8" height="1.4" fill="#d8d8d8"/><rect x="0.9" y="152.89" width="5.2" height="4.4" fill="#b2b2b2"/><rect x="1.6" y="154.39" width="3.8" height="1.4" fill="#d8d8d8"/><rect x="0.9" y="159.22" width="5.2" height="4.4" fill="#b2b2b2"/><rect x="1.6" y="160.72" width="3.8" height="1.4" fill="#d8d8d8"/><rect x="0.9" y="165.55" width="5.2" height="4.4" fill="#b2b2b2"/><rect x="1.6" y="167.05" width="3.8" height="1.4" fill="#d8d8d8"/><rect x="0.9" y="171.88" width="5.2" height="4.4" fill="#b2b2b2"/><rect x="1.6" y="173.38" width="3.8" height="1.4" fill="#d8d8d8"/><rect x="0.9" y="178.21" width="5.2" height="4.4" fill="#b2b2b2"/><rect x="1.6" y="179.71" width="3.8" height="1.4" fill="#d8d8d8"/><rect x="0.9" y="184.54" width="5.2" height="4.4" fill="#b2b2b2"/><rect x="1.6" y="186.04" width="3.8" height="1.4" fill="#d8d8d8"/><rect x="0.9" y="190.87" width="5.2" height="4.4" fill="#b2b2b2"/><rect x="1.6" y="192.37" width="3.8" height="1.4" fill="#d8d8d8"/><rect x="0.9" y="197.20" width="5.2" height="4.4" fill="#b2b2b2"/><rect x="1.6" y="198.70" width="3.8" height="1.4" fill="#d8d8d8"/><rect x="0.9" y="203.53" width="5.2" height="4.4" fill="#b2b2b2"/><rect x="1.6" y="205.03" width="3.8" height="1.4" fill="#d8d8d8"/><rect x="0.9" y="209.86" width="5.2" height="4.4" fill="#b2b2b2"/><rect x="1.6" y="211.36" width="3.8" height="1.4" fill="#d8d8d8"/><rect x="0.9" y="216.19" width="5.2" height="4.4" fill="#b2b2b2"/><rect x="1.6" y="217.69" width="3.8" height="1.4" fill="#d8d8d8"/><rect x="0.9" y="222.52" width="5.2" height="4.4" fill="#b2b2b2"/><rect x="1.6" y="224.02" width="3.8" height="1.4" fill="#d8d8d8"/><rect x="0.9" y="228.85" width="5.2" height="4.4" fill="#b2b2b2"/><rect x="1.6" y="230.35" width="3.8" height="1.4" fill="#d8d8d8"/><rect x="0.9" y="235.18" width="5.2" height="4.4" fill="#b2b2b2"/><rect x="1.6" y="236.68" width="3.8" height="1.4" fill="#d8d8d8"/><rect x="0.9" y="241.51" width="5.2" height="4.4" fill="#b2b2b2"/><rect x="1.6" y="243.01" width="3.8" height="1.4" fill="#d8d8d8"/><rect x="0.9" y="247.84" width="5.2" height="4.4" fill="#b2b2b2"/><rect x="1.6" y="249.34" width="3.8" height="1.4" fill="#d8d8d8"/><rect x="0.9" y="254.17" width="5.2" height="4.4" fill="#b2b2b2"/><rect x="1.6" y="255.67" width="3.8" height="1.4" fill="#d8d8d8"/><rect x="0.9" y="260.50" width="5.2" height="4.4" fill="#b2b2b2"/><rect x="1.6" y="262.00" width="3.8" height="1.4" fill="#d8d8d8"/><rect x="0.9" y="266.83" width="5.2" height="4.4" fill="#b2b2b2"/><rect x="1.6" y="268.33" width="3.8" height="1.4" fill="#d8d8d8"/><rect x="6.5" y="6.5" width="1.8" height="261" fill="#d8d8d8"/><rect x="76" y="6.5" width="1.8" height="261" fill="#d8d8d8"/><rect x="8.3" y="6.5" width="67.7" height="261" fill="#484848"/><rect x="9" y="7" width="66" height="5.5" fill="#5a5a5a"/><rect x="11" y="8.3" width="62" height="3" fill="#a8a8a8"/><rect x="9" y="12.5" width="66" height="8" fill="#6a6a6a"/><rect x="17.0" y="14.0" width="1.6" height="4" fill="#9b9b9b"/><rect x="30.5" y="14.0" width="1.6" height="4" fill="#9b9b9b"/><rect x="44.0" y="14.0" width="1.6" height="4" fill="#9b9b9b"/><rect x="57.5" y="14.0" width="1.6" height="4" fill="#9b9b9b"/><rect x="9" y="20.5" width="66" height="6" fill="#5d5d5d"/><rect x="11" y="21.8" width="55" height="3.4" fill="#b5b5b5"/><rect x="11" y="21.8" width="1.2" height="3.4" fill="#707070"/><rect x="22" y="21.8" width="1.2" height="3.4" fill="#707070"/><rect x="33" y="21.8" width="1.2" height="3.4" fill="#707070"/><rect x="44" y="21.8" width="1.2" height="3.4" fill="#707070"/><rect x="55" y="21.8" width="1.2" height="3.4" fill="#707070"/><rect x="67" y="21.8" width="6" height="3.4" fill="#cfcfcf"/><rect x="9" y="26.5" width="66" height="6" fill="#6a6a6a"/><rect x="17.0" y="28.0" width="1.6" height="3" fill="#9b9b9b"/><rect x="30.5" y="28.0" width="1.6" height="3" fill="#9b9b9b"/><rect x="44.0" y="28.0" width="1.6" height="3" fill="#9b9b9b"/><rect x="57.5" y="28.0" width="1.6" height="3" fill="#9b9b9b"/><rect x="9" y="32.5" width="66" height="6" fill="#5d5d5d"/><rect x="11" y="33.8" width="55" height="3.4" fill="#b5b5b5"/><rect x="11" y="33.8" width="1.2" height="3.4" fill="#707070"/><rect x="22" y="33.8" width="1.2" height="3.4" fill="#707070"/><rect x="33" y="33.8" width="1.2" height="3.4" fill="#707070"/><rect x="44" y="33.8" width="1.2" height="3.4" fill="#707070"/><rect x="55" y="33.8" width="1.2" height="3.4" fill="#707070"/><rect x="67" y="33.8" width="6" height="3.4" fill="#cfcfcf"/><rect x="9" y="38.5" width="66" height="6" fill="#6a6a6a"/><rect x="17.0" y="40.0" width="1.6" height="3" fill="#9b9b9b"/><rect x="30.5" y="40.0" width="1.6" height="3" fill="#9b9b9b"/><rect x="44.0" y="40.0" width="1.6" height="3" fill="#9b9b9b"/><rect x="57.5" y="40.0" width="1.6" height="3" fill="#9b9b9b"/><rect x="9" y="44.5" width="66" height="60" fill="#4e4e4e"/><rect x="34" y="49" width="16" height="5" fill="none" stroke="#888" stroke-width="1"/><rect x="12.9" y="54.5" width="58.6" height="49.2" fill="#c6c1bb"/><defs><linearGradient id="scr" x1="0" y1="1" x2="1" y2="0"><stop offset="0" stop-color="#3f93dc"/><stop offset="1" stop-color="#0848a6"/></linearGradient></defs><rect x="14.7" y="56.2" width="55" height="43.5" fill="url(#scr)"/><rect x="30" y="100.5" width="24" height="2" fill="#9a958f"/><rect x="9" y="104.6" width="66" height="4.5" fill="#5c5c5c"/><rect x="11" y="105.6" width="62" height="2.2" fill="#9c9c9c"/><rect x="9" y="109.1" width="66" height="6.5" fill="#5a5a5a"/><rect x="14" y="111" width="8" height="2.5" fill="#3cb0a0"/><rect x="40" y="111" width="32" height="2.5" fill="#9a9a9a"/><rect x="34" y="109.8" width="6" height="1.5" fill="#c8b050"/><rect x="9" y="116.5" width="66" height="6" fill="#505050"/><rect x="9" y="116.5" width="66" height="0.8" fill="#777"/><rect x="12" y="118.1" width="12" height="2.8" rx="0.8" fill="#9c9c9c"/><rect x="24.3" y="117.7" width="1.6" height="3.6" fill="#2a2a2a"/><rect x="27" y="118.1" width="12" height="2.8" rx="0.8" fill="#9c9c9c"/><rect x="39.3" y="117.7" width="1.6" height="3.6" fill="#2a2a2a"/><rect x="42" y="118.1" width="12" height="2.8" rx="0.8" fill="#9c9c9c"/><rect x="54.3" y="117.7" width="1.6" height="3.6" fill="#2a2a2a"/><rect x="57" y="118.1" width="12" height="2.8" rx="0.8" fill="#9c9c9c"/><rect x="69.3" y="117.7" width="1.6" height="3.6" fill="#2a2a2a"/><rect x="9" y="122.8" width="66" height="19" fill="#3a3a3a"/><rect x="11.0" y="124.0" width="14" height="3.2" rx="0.6" fill="#b4b4b4"/><rect x="26.8" y="124.0" width="14" height="3.2" rx="0.6" fill="#b4b4b4"/><rect x="42.6" y="124.0" width="14" height="3.2" rx="0.6" fill="#b4b4b4"/><rect x="58.400000000000006" y="124.0" width="14" height="3.2" rx="0.6" fill="#b4b4b4"/><rect x="11.0" y="128.3" width="14" height="3.2" rx="0.6" fill="#b4b4b4"/><rect x="26.8" y="128.3" width="14" height="3.2" rx="0.6" fill="#b4b4b4"/><rect x="42.6" y="128.3" width="14" height="3.2" rx="0.6" fill="#b4b4b4"/><rect x="58.400000000000006" y="128.3" width="14" height="3.2" rx="0.6" fill="#b4b4b4"/><rect x="11.0" y="132.6" width="14" height="3.2" rx="0.6" fill="#b4b4b4"/><rect x="26.8" y="132.6" width="14" height="3.2" rx="0.6" fill="#b4b4b4"/><rect x="42.6" y="132.6" width="14" height="3.2" rx="0.6" fill="#b4b4b4"/><rect x="58.400000000000006" y="132.6" width="14" height="3.2" rx="0.6" fill="#b4b4b4"/><rect x="11.0" y="136.9" width="14" height="3.2" rx="0.6" fill="#b4b4b4"/><rect x="26.8" y="136.9" width="14" height="3.2" rx="0.6" fill="#b4b4b4"/><rect x="42.6" y="136.9" width="14" height="3.2" rx="0.6" fill="#b4b4b4"/><rect x="58.400000000000006" y="136.9" width="14" height="3.2" rx="0.6" fill="#b4b4b4"/><rect x="58" y="124.3" width="12" height="3" fill="#3a3a3a"/><rect x="59" y="124.8" width="9" height="2" fill="#6cc6f2"/><rect x="9" y="142.5" width="66" height="19" fill="#555"/><rect x="9" y="142.5" width="66" height="1" fill="#7a7a7a"/><rect x="11" y="144.0" width="2" height="1.5" fill="#222"/><rect x="12" y="145.50" width="12" height="2.33" fill="#a2a2a2"/><rect x="27" y="145.50" width="12" height="2.33" fill="#a2a2a2"/><rect x="42" y="145.50" width="12" height="2.33" fill="#a2a2a2"/><rect x="57" y="145.50" width="12" height="2.33" fill="#a2a2a2"/><rect x="12" y="149.25" width="12" height="2.33" fill="#a2a2a2"/><rect x="27" y="149.25" width="12" height="2.33" fill="#a2a2a2"/><rect x="42" y="149.25" width="12" height="2.33" fill="#a2a2a2"/><rect x="57" y="149.25" width="12" height="2.33" fill="#a2a2a2"/><rect x="12" y="153.00" width="12" height="2.33" fill="#a2a2a2"/><rect x="27" y="153.00" width="12" height="2.33" fill="#a2a2a2"/><rect x="42" y="153.00" width="12" height="2.33" fill="#a2a2a2"/><rect x="57" y="153.00" width="12" height="2.33" fill="#a2a2a2"/><rect x="12" y="156.75" width="12" height="2.33" fill="#a2a2a2"/><rect x="27" y="156.75" width="12" height="2.33" fill="#a2a2a2"/><rect x="42" y="156.75" width="12" height="2.33" fill="#a2a2a2"/><rect x="57" y="156.75" width="12" height="2.33" fill="#a2a2a2"/><rect x="24.3" y="145.0" width="1.8" height="15.5" fill="#262626"/><rect x="39.3" y="145.0" width="1.8" height="15.5" fill="#262626"/><rect x="54.3" y="145.0" width="1.8" height="15.5" fill="#262626"/><rect x="69.3" y="145.0" width="1.8" height="15.5" fill="#262626"/><rect x="9" y="162.5" width="66" height="11.5" fill="#555"/><rect x="9" y="162.5" width="66" height="1" fill="#7a7a7a"/><rect x="11" y="164.0" width="2" height="1.5" fill="#222"/><rect x="12" y="165.50" width="12" height="2.33" fill="#a2a2a2"/><rect x="27" y="165.50" width="12" height="2.33" fill="#a2a2a2"/><rect x="42" y="165.50" width="12" height="2.33" fill="#a2a2a2"/><rect x="57" y="165.50" width="12" height="2.33" fill="#a2a2a2"/><rect x="12" y="169.25" width="12" height="2.33" fill="#a2a2a2"/><rect x="27" y="169.25" width="12" height="2.33" fill="#a2a2a2"/><rect x="42" y="169.25" width="12" height="2.33" fill="#a2a2a2"/><rect x="57" y="169.25" width="12" height="2.33" fill="#a2a2a2"/><rect x="24.3" y="165.0" width="1.8" height="8.0" fill="#262626"/><rect x="39.3" y="165.0" width="1.8" height="8.0" fill="#262626"/><rect x="54.3" y="165.0" width="1.8" height="8.0" fill="#262626"/><rect x="69.3" y="165.0" width="1.8" height="8.0" fill="#262626"/><rect x="9" y="174.7" width="66" height="11.5" fill="#555"/><rect x="9" y="174.7" width="66" height="1" fill="#7a7a7a"/><rect x="11" y="176.2" width="2" height="1.5" fill="#222"/><rect x="12" y="177.70" width="12" height="2.33" fill="#a2a2a2"/><rect x="27" y="177.70" width="12" height="2.33" fill="#a2a2a2"/><rect x="42" y="177.70" width="12" height="2.33" fill="#a2a2a2"/><rect x="57" y="177.70" width="12" height="2.33" fill="#a2a2a2"/><rect x="12" y="181.45" width="12" height="2.33" fill="#a2a2a2"/><rect x="27" y="181.45" width="12" height="2.33" fill="#a2a2a2"/><rect x="42" y="181.45" width="12" height="2.33" fill="#a2a2a2"/><rect x="57" y="181.45" width="12" height="2.33" fill="#a2a2a2"/><rect x="24.3" y="177.2" width="1.8" height="8.0" fill="#262626"/><rect x="39.3" y="177.2" width="1.8" height="8.0" fill="#262626"/><rect x="54.3" y="177.2" width="1.8" height="8.0" fill="#262626"/><rect x="69.3" y="177.2" width="1.8" height="8.0" fill="#262626"/><rect x="9" y="186.9" width="66" height="11.5" fill="#555"/><rect x="9" y="186.9" width="66" height="1" fill="#7a7a7a"/><rect x="11" y="188.4" width="2" height="1.5" fill="#222"/><rect x="12" y="189.90" width="12" height="2.33" fill="#a2a2a2"/><rect x="27" y="189.90" width="12" height="2.33" fill="#a2a2a2"/><rect x="42" y="189.90" width="12" height="2.33" fill="#a2a2a2"/><rect x="57" y="189.90" width="12" height="2.33" fill="#a2a2a2"/><rect x="12" y="193.65" width="12" height="2.33" fill="#a2a2a2"/><rect x="27" y="193.65" width="12" height="2.33" fill="#a2a2a2"/><rect x="42" y="193.65" width="12" height="2.33" fill="#a2a2a2"/><rect x="57" y="193.65" width="12" height="2.33" fill="#a2a2a2"/><rect x="24.3" y="189.4" width="1.8" height="8.0" fill="#262626"/><rect x="39.3" y="189.4" width="1.8" height="8.0" fill="#262626"/><rect x="54.3" y="189.4" width="1.8" height="8.0" fill="#262626"/><rect x="69.3" y="189.4" width="1.8" height="8.0" fill="#262626"/><rect x="9" y="199.1" width="66" height="11.5" fill="#555"/><rect x="9" y="199.1" width="66" height="1" fill="#7a7a7a"/><rect x="11" y="200.6" width="2" height="1.5" fill="#222"/><rect x="12" y="202.10" width="12" height="2.33" fill="#a2a2a2"/><rect x="27" y="202.10" width="12" height="2.33" fill="#a2a2a2"/><rect x="42" y="202.10" width="12" height="2.33" fill="#a2a2a2"/><rect x="57" y="202.10" width="12" height="2.33" fill="#a2a2a2"/><rect x="12" y="205.85" width="12" height="2.33" fill="#a2a2a2"/><rect x="27" y="205.85" width="12" height="2.33" fill="#a2a2a2"/><rect x="42" y="205.85" width="12" height="2.33" fill="#a2a2a2"/><rect x="57" y="205.85" width="12" height="2.33" fill="#a2a2a2"/><rect x="24.3" y="201.6" width="1.8" height="8.0" fill="#262626"/><rect x="39.3" y="201.6" width="1.8" height="8.0" fill="#262626"/><rect x="54.3" y="201.6" width="1.8" height="8.0" fill="#262626"/><rect x="69.3" y="201.6" width="1.8" height="8.0" fill="#262626"/><rect x="9" y="211" width="66" height="18" fill="#5a5a5a"/><rect x="11.0" y="212.2" width="14" height="3.2" rx="0.8" fill="#a9a9a9"/><rect x="26.8" y="212.2" width="14" height="3.2" rx="0.8" fill="#a9a9a9"/><rect x="42.6" y="212.2" width="14" height="3.2" rx="0.8" fill="#a9a9a9"/><rect x="58.400000000000006" y="212.2" width="14" height="3.2" rx="0.8" fill="#a9a9a9"/><rect x="11.0" y="216.39999999999998" width="14" height="3.2" rx="0.8" fill="#a9a9a9"/><rect x="26.8" y="216.39999999999998" width="14" height="3.2" rx="0.8" fill="#a9a9a9"/><rect x="42.6" y="216.39999999999998" width="14" height="3.2" rx="0.8" fill="#a9a9a9"/><rect x="58.400000000000006" y="216.39999999999998" width="14" height="3.2" rx="0.8" fill="#a9a9a9"/><rect x="11.0" y="220.6" width="14" height="3.2" rx="0.8" fill="#a9a9a9"/><rect x="26.8" y="220.6" width="14" height="3.2" rx="0.8" fill="#a9a9a9"/><rect x="42.6" y="220.6" width="14" height="3.2" rx="0.8" fill="#a9a9a9"/><rect x="58.400000000000006" y="220.6" width="14" height="3.2" rx="0.8" fill="#a9a9a9"/><rect x="11.0" y="224.79999999999998" width="14" height="3.2" rx="0.8" fill="#a9a9a9"/><rect x="26.8" y="224.79999999999998" width="14" height="3.2" rx="0.8" fill="#a9a9a9"/><rect x="42.6" y="224.79999999999998" width="14" height="3.2" rx="0.8" fill="#a9a9a9"/><rect x="58.400000000000006" y="224.79999999999998" width="14" height="3.2" rx="0.8" fill="#a9a9a9"/><rect x="59" y="212.5" width="11" height="2" fill="#5cc0f0"/><rect x="9" y="229.5" width="66" height="12.5" fill="#2e2e2e"/><rect x="12.0" y="231.0" width="12.5" height="2.4" fill="#8a8a8a"/><rect x="27.8" y="231.0" width="12.5" height="2.4" fill="#8a8a8a"/><rect x="43.6" y="231.0" width="12.5" height="2.4" fill="#8a8a8a"/><rect x="59.400000000000006" y="231.0" width="12.5" height="2.4" fill="#8a8a8a"/><rect x="12.0" y="234.8" width="12.5" height="2.4" fill="#8a8a8a"/><rect x="27.8" y="234.8" width="12.5" height="2.4" fill="#8a8a8a"/><rect x="43.6" y="234.8" width="12.5" height="2.4" fill="#8a8a8a"/><rect x="59.400000000000006" y="234.8" width="12.5" height="2.4" fill="#8a8a8a"/><rect x="12.0" y="238.6" width="12.5" height="2.4" fill="#8a8a8a"/><rect x="27.8" y="238.6" width="12.5" height="2.4" fill="#8a8a8a"/><rect x="43.6" y="238.6" width="12.5" height="2.4" fill="#8a8a8a"/><rect x="59.400000000000006" y="238.6" width="12.5" height="2.4" fill="#8a8a8a"/><rect x="8.3" y="242" width="67.7" height="20" fill="#c2c2c2"/><rect x="12" y="245" width="13" height="14" fill="#6b6b6b"/><rect x="28" y="247" width="8" height="11" fill="#888"/><rect x="40.0" y="245" width="3.5" height="5" fill="#3a3a3a"/><rect x="46.5" y="245" width="3.5" height="5" fill="#3a3a3a"/><rect x="53.0" y="245" width="3.5" height="5" fill="#3a3a3a"/><rect x="59.5" y="245" width="3.5" height="5" fill="#3a3a3a"/><rect x="66.0" y="245" width="3.5" height="5" fill="#3a3a3a"/><rect x="40.0" y="253" width="5.5" height="4" fill="#444"/><rect x="46.5" y="253" width="5.5" height="4" fill="#444"/><rect x="53.0" y="253" width="5.5" height="4" fill="#444"/><rect x="59.5" y="253" width="5.5" height="4" fill="#444"/><rect x="66.0" y="253" width="5.5" height="4" fill="#444"/><rect x="8.3" y="262" width="67.7" height="5.5" fill="#e6e6e6"/><rect x="11.0" y="263.5" width="2" height="2.5" fill="#777"/><rect x="15.3" y="263.5" width="2" height="2.5" fill="#777"/><rect x="19.6" y="263.5" width="2" height="2.5" fill="#777"/><rect x="23.9" y="263.5" width="2" height="2.5" fill="#777"/><rect x="28.2" y="263.5" width="2" height="2.5" fill="#777"/><rect x="32.5" y="263.5" width="2" height="2.5" fill="#777"/><rect x="36.8" y="263.5" width="2" height="2.5" fill="#777"/><rect x="41.099999999999994" y="263.5" width="2" height="2.5" fill="#777"/><rect x="45.4" y="263.5" width="2" height="2.5" fill="#777"/><rect x="49.699999999999996" y="263.5" width="2" height="2.5" fill="#777"/><rect x="54.0" y="263.5" width="2" height="2.5" fill="#777"/><rect x="58.3" y="263.5" width="2" height="2.5" fill="#777"/><rect x="62.599999999999994" y="263.5" width="2" height="2.5" fill="#777"/><rect x="66.9" y="263.5" width="2" height="2.5" fill="#777"/><rect x="69" y="263.3" width="5" height="3" fill="#e02020"/><rect x="0" y="267.5" width="84" height="9" fill="#7a7a7a"/><rect x="6.5" y="268" width="71" height="6.5" fill="#8c8c8c"/><rect x="0.5" y="276" width="6" height="2.5" fill="#2a2a2a"/><rect x="77.5" y="276" width="6" height="2.5" fill="#2a2a2a"/></g></defs>
<use href="#rkA" x="29.1" y="517.5"/>
<rect x="106.6" y="535.4" width="35.1" height="7" fill="#fff"/>
<text transform="translate(107.30000000000001,540.9) scale(0.82,1)" font-family="Liberation Sans, sans-serif" font-size="4.3" font-weight="bold" fill="#3c3c3c">Cisco WS-C2960-01</text>
<rect x="106.6" y="548.1999999999999" width="35.1" height="7" fill="#fff"/>
<text transform="translate(107.30000000000001,553.6999999999999) scale(0.82,1)" font-family="Liberation Sans, sans-serif" font-size="4.3" font-weight="bold" fill="#3c3c3c">Cisco WS-C2960-02</text>
<rect x="106.6" y="634.4" width="35.1" height="7" fill="#fff"/>
<text transform="translate(107.30000000000001,639.9) scale(0.82,1)" font-family="Liberation Sans, sans-serif" font-size="4.3" font-weight="bold" fill="#3c3c3c">Web server Node 1</text>
<rect x="106.6" y="640.8" width="35.1" height="7" fill="#fff"/>
<text transform="translate(107.30000000000001,646.3) scale(0.82,1)" font-family="Liberation Sans, sans-serif" font-size="4.3" font-weight="bold" fill="#3c3c3c">Web server Node 2</text>
<rect x="106.6" y="647.1999999999999" width="35.1" height="7" fill="#fff"/>
<text transform="translate(107.30000000000001,652.6999999999999) scale(0.82,1)" font-family="Liberation Sans, sans-serif" font-size="4.3" font-weight="bold" fill="#3c3c3c">Web server Node 3</text>
<rect x="106.6" y="653.9" width="35.1" height="7" fill="#fff"/>
<text transform="translate(107.30000000000001,659.4) scale(0.82,1)" font-family="Liberation Sans, sans-serif" font-size="4.3" font-weight="bold" fill="#3c3c3c">Web server Node 4</text>
<rect x="106.6" y="666.3" width="37.1" height="7" fill="#fff"/>
<text transform="translate(107.30000000000001,671.8) scale(0.82,1)" font-family="Liberation Sans, sans-serif" font-size="4.3" font-weight="bold" fill="#3c3c3c">Exchange server N1</text>
<rect x="106.6" y="682.4" width="25.4" height="7" fill="#fff"/>
<text transform="translate(107.30000000000001,687.9) scale(0.82,1)" font-family="Liberation Sans, sans-serif" font-size="4.3" font-weight="bold" fill="#3c3c3c">Hypervisor 1</text>
<rect x="106.6" y="695.1999999999999" width="25.4" height="7" fill="#fff"/>
<text transform="translate(107.30000000000001,700.6999999999999) scale(0.82,1)" font-family="Liberation Sans, sans-serif" font-size="4.3" font-weight="bold" fill="#3c3c3c">Hypervisor 2</text>
<rect x="106.6" y="707.5" width="25.4" height="7" fill="#fff"/>
<text transform="translate(107.30000000000001,713.0) scale(0.82,1)" font-family="Liberation Sans, sans-serif" font-size="4.3" font-weight="bold" fill="#3c3c3c">Hypervisor 3</text>
<rect x="106.6" y="719.5" width="25.4" height="7" fill="#fff"/>
<text transform="translate(107.30000000000001,725.0) scale(0.82,1)" font-family="Liberation Sans, sans-serif" font-size="4.3" font-weight="bold" fill="#3c3c3c">Hypervisor 4</text>
<rect x="106.6" y="734.0999999999999" width="15.7" height="7" fill="#fff"/>
<text transform="translate(107.30000000000001,739.5999999999999) scale(0.82,1)" font-family="Liberation Sans, sans-serif" font-size="4.3" font-weight="bold" fill="#3c3c3c">RAID 10</text>
<rect x="106.6" y="749.0999999999999" width="13.7" height="7" fill="#fff"/>
<text transform="translate(107.30000000000001,754.5999999999999) scale(0.82,1)" font-family="Liberation Sans, sans-serif" font-size="4.3" font-weight="bold" fill="#3c3c3c">RAID 5</text>
<text x="71.1" y="801.3" font-family="Liberation Sans, sans-serif" font-size="4.6" fill="#444" text-anchor="middle">Rack #1</text>
<use href="#rkA" x="164.9" y="517.5"/>
<rect x="242.4" y="535.4" width="35.1" height="7" fill="#fff"/>
<text transform="translate(243.10000000000002,540.9) scale(0.82,1)" font-family="Liberation Sans, sans-serif" font-size="4.3" font-weight="bold" fill="#3c3c3c">Cisco WS-C2960-01</text>
<rect x="242.4" y="548.1999999999999" width="35.1" height="7" fill="#fff"/>
<text transform="translate(243.10000000000002,553.6999999999999) scale(0.82,1)" font-family="Liberation Sans, sans-serif" font-size="4.3" font-weight="bold" fill="#3c3c3c">Cisco WS-C2960-02</text>
<rect x="242.4" y="634.4" width="35.1" height="7" fill="#fff"/>
<text transform="translate(243.10000000000002,639.9) scale(0.82,1)" font-family="Liberation Sans, sans-serif" font-size="4.3" font-weight="bold" fill="#3c3c3c">Web server Node 5</text>
<rect x="242.4" y="640.8" width="35.1" height="7" fill="#fff"/>
<text transform="translate(243.10000000000002,646.3) scale(0.82,1)" font-family="Liberation Sans, sans-serif" font-size="4.3" font-weight="bold" fill="#3c3c3c">Web server Node 6</text>
<rect x="242.4" y="647.1999999999999" width="35.1" height="7" fill="#fff"/>
<text transform="translate(243.10000000000002,652.6999999999999) scale(0.82,1)" font-family="Liberation Sans, sans-serif" font-size="4.3" font-weight="bold" fill="#3c3c3c">Web server Node 7</text>
<rect x="242.4" y="653.9" width="35.1" height="7" fill="#fff"/>
<text transform="translate(243.10000000000002,659.4) scale(0.82,1)" font-family="Liberation Sans, sans-serif" font-size="4.3" font-weight="bold" fill="#3c3c3c">Web server Node 8</text>
<rect x="242.4" y="666.3" width="37.1" height="7" fill="#fff"/>
<text transform="translate(243.10000000000002,671.8) scale(0.82,1)" font-family="Liberation Sans, sans-serif" font-size="4.3" font-weight="bold" fill="#3c3c3c">Exchange server N2</text>
<rect x="242.4" y="682.4" width="25.4" height="7" fill="#fff"/>
<text transform="translate(243.10000000000002,687.9) scale(0.82,1)" font-family="Liberation Sans, sans-serif" font-size="4.3" font-weight="bold" fill="#3c3c3c">Hypervisor 5</text>
<rect x="242.4" y="695.1999999999999" width="25.4" height="7" fill="#fff"/>
<text transform="translate(243.10000000000002,700.6999999999999) scale(0.82,1)" font-family="Liberation Sans, sans-serif" font-size="4.3" font-weight="bold" fill="#3c3c3c">Hypervisor 6</text>
<rect x="242.4" y="707.5" width="25.4" height="7" fill="#fff"/>
<text transform="translate(243.10000000000002,713.0) scale(0.82,1)" font-family="Liberation Sans, sans-serif" font-size="4.3" font-weight="bold" fill="#3c3c3c">Hypervisor 7</text>
<rect x="242.4" y="719.5" width="25.4" height="7" fill="#fff"/>
<text transform="translate(243.10000000000002,725.0) scale(0.82,1)" font-family="Liberation Sans, sans-serif" font-size="4.3" font-weight="bold" fill="#3c3c3c">Hypervisor 8</text>
<rect x="242.4" y="734.0999999999999" width="15.7" height="7" fill="#fff"/>
<text transform="translate(243.10000000000002,739.5999999999999) scale(0.82,1)" font-family="Liberation Sans, sans-serif" font-size="4.3" font-weight="bold" fill="#3c3c3c">RAID 10</text>
<rect x="242.4" y="749.0999999999999" width="13.7" height="7" fill="#fff"/>
<text transform="translate(243.10000000000002,754.5999999999999) scale(0.82,1)" font-family="Liberation Sans, sans-serif" font-size="4.3" font-weight="bold" fill="#3c3c3c">RAID 5</text>
<text x="206.9" y="801.3" font-family="Liberation Sans, sans-serif" font-size="4.6" fill="#444" text-anchor="middle">Rack #2</text>
<use href="#rkB" x="299.4" y="517.5"/>
<rect x="376.9" y="535.4" width="35.1" height="7" fill="#fff"/>
<text transform="translate(377.59999999999997,540.9) scale(0.82,1)" font-family="Liberation Sans, sans-serif" font-size="4.3" font-weight="bold" fill="#3c3c3c">Cisco WS-C2960-01</text>
<rect x="376.9" y="548.1999999999999" width="35.1" height="7" fill="#fff"/>
<text transform="translate(377.59999999999997,553.6999999999999) scale(0.82,1)" font-family="Liberation Sans, sans-serif" font-size="4.3" font-weight="bold" fill="#3c3c3c">Cisco WS-C2960-02</text>
<rect x="376.9" y="636.0" width="41.0" height="7" fill="#fff"/>
<text transform="translate(377.59999999999997,641.5) scale(0.82,1)" font-family="Liberation Sans, sans-serif" font-size="4.3" font-weight="bold" fill="#3c3c3c">Zabbix server Node 1</text>
<rect x="376.9" y="649.0999999999999" width="44.9" height="7" fill="#fff"/>
<text transform="translate(377.59999999999997,654.5999999999999) scale(0.82,1)" font-family="Liberation Sans, sans-serif" font-size="4.3" font-weight="bold" fill="#3c3c3c">Zabbix database Node 1</text>
<rect x="376.9" y="666.8" width="48.8" height="7" fill="#fff"/>
<text transform="translate(377.59999999999997,672.3) scale(0.82,1)" font-family="Liberation Sans, sans-serif" font-size="4.3" font-weight="bold" fill="#3c3c3c">Sharepoint server Node 1</text>
<rect x="376.9" y="682.6999999999999" width="25.4" height="7" fill="#fff"/>
<text transform="translate(377.59999999999997,688.1999999999999) scale(0.82,1)" font-family="Liberation Sans, sans-serif" font-size="4.3" font-weight="bold" fill="#3c3c3c">Hypervisor 7</text>
<rect x="376.9" y="696.1999999999999" width="25.4" height="7" fill="#fff"/>
<text transform="translate(377.59999999999997,701.6999999999999) scale(0.82,1)" font-family="Liberation Sans, sans-serif" font-size="4.3" font-weight="bold" fill="#3c3c3c">Hypervisor 8</text>
<rect x="376.9" y="708.5" width="25.4" height="7" fill="#fff"/>
<text transform="translate(377.59999999999997,714.0) scale(0.82,1)" font-family="Liberation Sans, sans-serif" font-size="4.3" font-weight="bold" fill="#3c3c3c">Hypervisor 9</text>
<rect x="376.9" y="720.5" width="27.3" height="7" fill="#fff"/>
<text transform="translate(377.59999999999997,726.0) scale(0.82,1)" font-family="Liberation Sans, sans-serif" font-size="4.3" font-weight="bold" fill="#3c3c3c">Hypervisor 10</text>
<rect x="376.9" y="735.0999999999999" width="15.7" height="7" fill="#fff"/>
<text transform="translate(377.59999999999997,740.5999999999999) scale(0.82,1)" font-family="Liberation Sans, sans-serif" font-size="4.3" font-weight="bold" fill="#3c3c3c">RAID 10</text>
<rect x="376.9" y="749.8" width="13.7" height="7" fill="#fff"/>
<text transform="translate(377.59999999999997,755.3) scale(0.82,1)" font-family="Liberation Sans, sans-serif" font-size="4.3" font-weight="bold" fill="#3c3c3c">RAID 5</text>
<text x="341.4" y="801.3" font-family="Liberation Sans, sans-serif" font-size="4.6" fill="#444" text-anchor="middle">Rack #3</text>
<use href="#rkB" x="435.5" y="517.5"/>
<rect x="513.0" y="535.4" width="35.1" height="7" fill="#fff"/>
<text transform="translate(513.7,540.9) scale(0.82,1)" font-family="Liberation Sans, sans-serif" font-size="4.3" font-weight="bold" fill="#3c3c3c">Cisco WS-C2960-01</text>
<rect x="513.0" y="548.1999999999999" width="35.1" height="7" fill="#fff"/>
<text transform="translate(513.7,553.6999999999999) scale(0.82,1)" font-family="Liberation Sans, sans-serif" font-size="4.3" font-weight="bold" fill="#3c3c3c">Cisco WS-C2960-02</text>
<rect x="513.0" y="636.0" width="41.0" height="7" fill="#fff"/>
<text transform="translate(513.7,641.5) scale(0.82,1)" font-family="Liberation Sans, sans-serif" font-size="4.3" font-weight="bold" fill="#3c3c3c">Zabbix server Node 2</text>
<rect x="513.0" y="649.0999999999999" width="44.9" height="7" fill="#fff"/>
<text transform="translate(513.7,654.5999999999999) scale(0.82,1)" font-family="Liberation Sans, sans-serif" font-size="4.3" font-weight="bold" fill="#3c3c3c">Zabbix database Node 2</text>
<rect x="513.0" y="666.8" width="48.8" height="7" fill="#fff"/>
<text transform="translate(513.7,672.3) scale(0.82,1)" font-family="Liberation Sans, sans-serif" font-size="4.3" font-weight="bold" fill="#3c3c3c">Sharepoint server Node 2</text>
<rect x="513.0" y="682.6999999999999" width="27.3" height="7" fill="#fff"/>
<text transform="translate(513.7,688.1999999999999) scale(0.82,1)" font-family="Liberation Sans, sans-serif" font-size="4.3" font-weight="bold" fill="#3c3c3c">Hypervisor 11</text>
<rect x="513.0" y="696.1999999999999" width="27.3" height="7" fill="#fff"/>
<text transform="translate(513.7,701.6999999999999) scale(0.82,1)" font-family="Liberation Sans, sans-serif" font-size="4.3" font-weight="bold" fill="#3c3c3c">Hypervisor 12</text>
<rect x="513.0" y="708.5" width="27.3" height="7" fill="#fff"/>
<text transform="translate(513.7,714.0) scale(0.82,1)" font-family="Liberation Sans, sans-serif" font-size="4.3" font-weight="bold" fill="#3c3c3c">Hypervisor 13</text>
<rect x="513.0" y="720.5" width="27.3" height="7" fill="#fff"/>
<text transform="translate(513.7,726.0) scale(0.82,1)" font-family="Liberation Sans, sans-serif" font-size="4.3" font-weight="bold" fill="#3c3c3c">Hypervisor 14</text>
<rect x="513.0" y="735.0999999999999" width="15.7" height="7" fill="#fff"/>
<text transform="translate(513.7,740.5999999999999) scale(0.82,1)" font-family="Liberation Sans, sans-serif" font-size="4.3" font-weight="bold" fill="#3c3c3c">RAID 10</text>
<rect x="513.0" y="749.8" width="13.7" height="7" fill="#fff"/>
<text transform="translate(513.7,755.3) scale(0.82,1)" font-family="Liberation Sans, sans-serif" font-size="4.3" font-weight="bold" fill="#3c3c3c">RAID 5</text>
<text x="477.5" y="801.3" font-family="Liberation Sans, sans-serif" font-size="4.6" fill="#444" text-anchor="middle">Rack #4</text>
</svg></body></html>
